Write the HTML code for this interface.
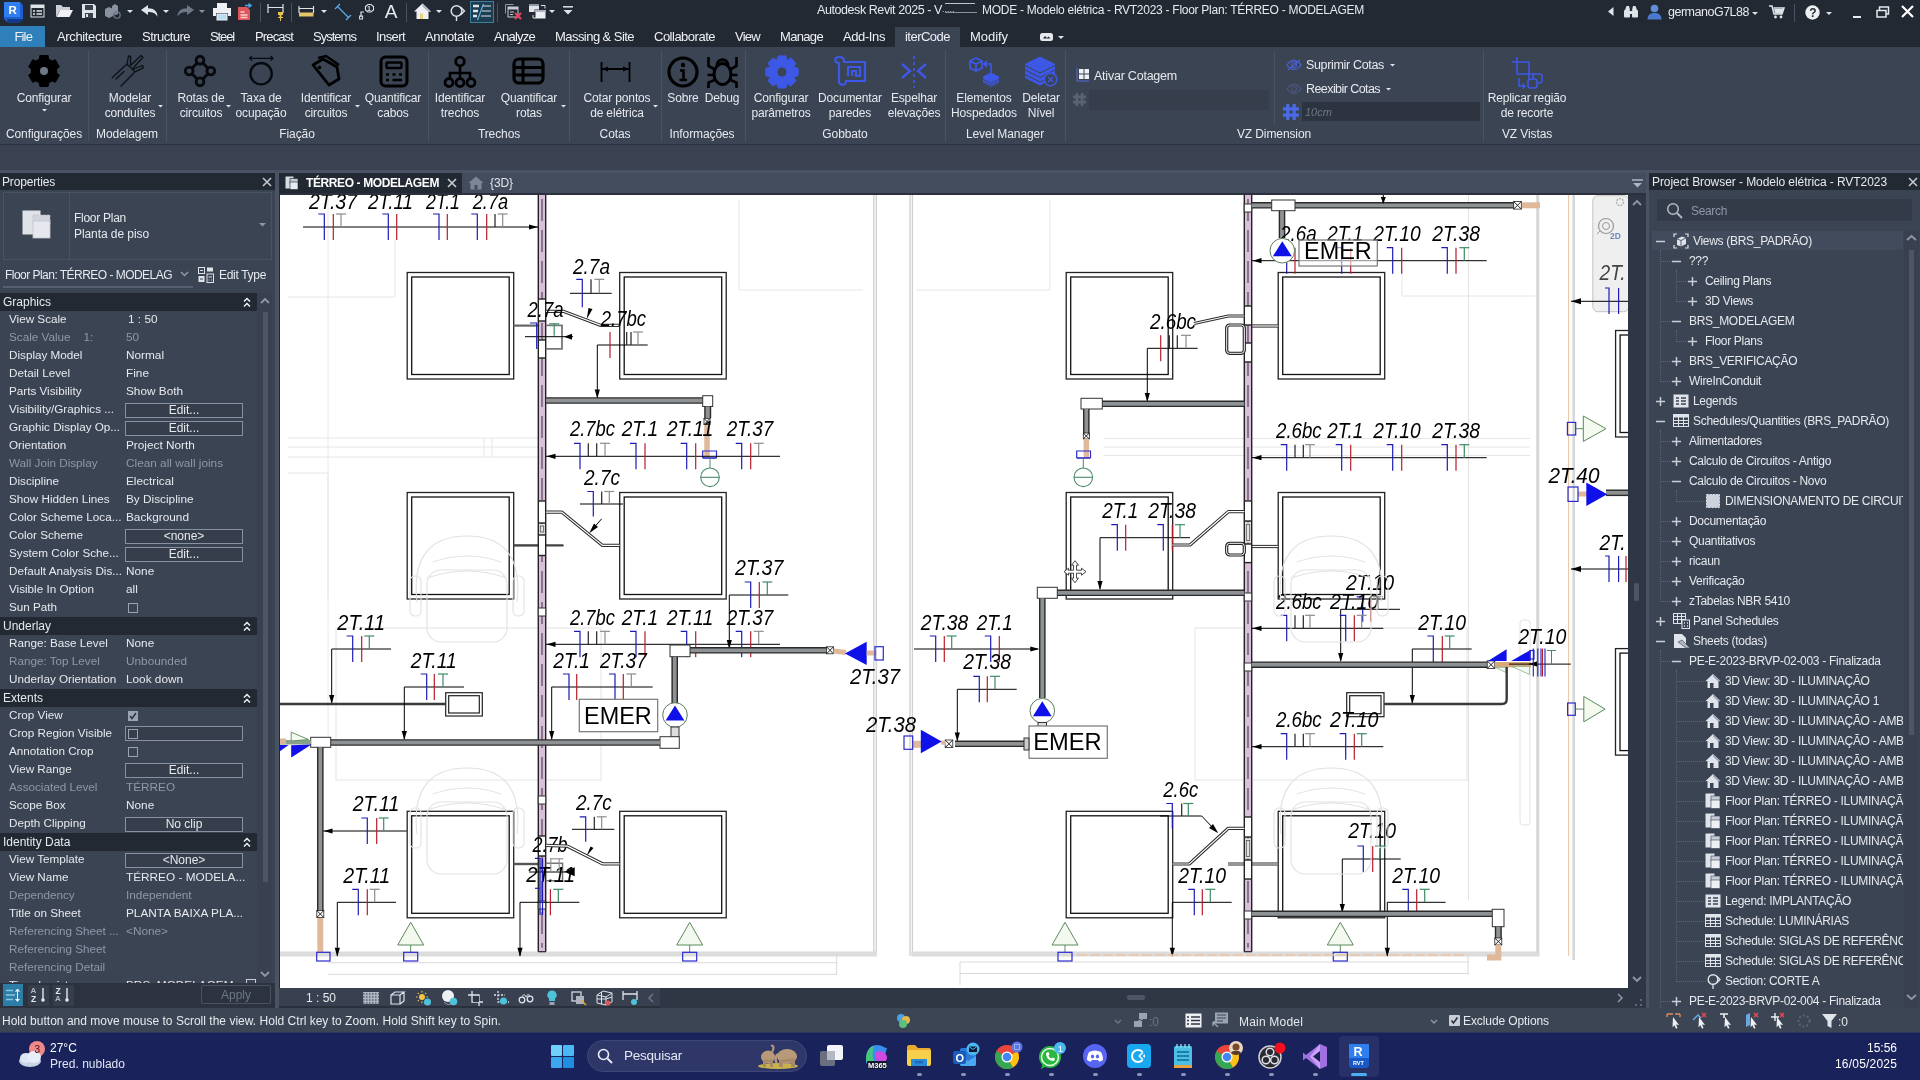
<!DOCTYPE html>
<html><head><meta charset="utf-8"><title>Autodesk Revit 2025</title>
<style>
html,body{margin:0;padding:0;background:#222933;}
body{width:1920px;height:1080px;overflow:hidden;position:relative;font-family:"Liberation Sans",sans-serif;}
#root{position:absolute;left:0;top:0;width:1920px;height:1080px;overflow:hidden;will-change:transform;}
#root div,#root svg{position:absolute;}
#root svg{overflow:visible;}
.t{font-family:"Liberation Sans",sans-serif;}
</style></head><body><div id="root">
<div style="left:0px;top:0px;width:1920px;height:47px;background:#222933;"></div>
<div style="left:0px;top:47px;width:1920px;height:98px;background:#3b4453;"></div>
<div style="left:0px;top:144px;width:1920px;height:1px;background:#2b323e;"></div>
<div style="left:0px;top:145px;width:1920px;height:26px;background:#3a4251;"></div>
<div style="left:0px;top:170px;width:1920px;height:3px;background:#4a5363;"></div>
<div style="left:0px;top:173px;width:275px;height:17px;background:#222933;"></div>
<div style="left:275px;top:173px;width:4px;height:835px;background:#4a5363;"></div>
<div style="left:279px;top:173px;width:1368px;height:22px;background:#434c5c;"></div>
<div style="left:279px;top:173px;width:183px;height:21px;background:#222933;"></div>
<div style="left:279px;top:193px;width:1368px;height:2px;background:#2a313d;"></div>
<div style="left:1646px;top:173px;width:3px;height:835px;background:#4a5363;"></div>
<div style="left:1649px;top:173px;width:271px;height:17px;background:#222933;"></div>
<div style="left:0px;top:190px;width:275px;height:818px;background:#3b4453;"></div>
<div style="left:1649px;top:190px;width:271px;height:818px;background:#3b4453;"></div>
<div style="left:280px;top:195px;width:1348px;height:793px;background:#ffffff;"></div>
<div style="left:1628px;top:195px;width:18px;height:793px;background:#2f3744;"></div>
<div style="left:279px;top:988px;width:1367px;height:20px;background:#2f3744;"></div>
<div style="left:279px;top:988px;width:381px;height:18px;background:#394150;"></div>
<div style="left:279px;top:1006px;width:381px;height:2px;background:#2a303b;"></div>
<div style="left:0px;top:1008px;width:1920px;height:24px;background:#3c4553;"></div>
<div style="left:0px;top:1032px;width:1920px;height:48px;background:#19225a;"></div>
<svg style="left:2px;top:0px;" width="22" height="24" viewBox="0 0 22 24"><path d="M2 2h16l3 3v14l-3 3H5l-3-3z" fill="#1d5fd0"/><path d="M2 2h16v15H2z" fill="#2f7ff0"/><path d="M5 19h14l2 0-3 4H6z" fill="#12398a"/><text x="6.5" y="14" font-family="Liberation Sans, sans-serif" font-weight="700" font-size="11.5" fill="#fff">R</text></svg>
<svg style="left:30px;top:4px;" width="15" height="14" viewBox="0 0 15 14"><rect x="1" y="1" width="13" height="12" fill="none" stroke="#dfe3ea" stroke-width="1"/><rect x="1" y="1" width="13" height="3" fill="#dfe3ea"/><path d="M3 7h2M3 10h2M6.5 7H12M6.5 10H12" stroke="#dfe3ea" stroke-width="1.4"/></svg>
<svg style="left:55px;top:4px;" width="19" height="14" viewBox="0 0 19 14"><path d="M1 13V1h5l2 2h7v3H5z" fill="#c9ced8"/><path d="M1.5 13L5 6h13l-3.5 7z" fill="#eef0f4"/></svg>
<svg style="left:82px;top:4px;" width="14" height="14" viewBox="0 0 14 14"><path d="M0 0h12l2 2v12H0z" fill="#dfe3ea"/><rect x="3" y="1" width="8" height="5" fill="#39414f"/><rect x="3" y="9" width="8" height="5" fill="#39414f"/><rect x="4" y="10" width="2" height="3" fill="#dfe3ea"/></svg>
<svg style="left:104px;top:3px;" width="19" height="16" viewBox="0 0 19 16"><path d="M1 6l4-2 4 2v7l-4 2-4-2z M8 3l3-2 3 2v8l-3 1-3-2z" fill="#8a92a0"/><circle cx="13" cy="12" r="3.2" fill="none" stroke="#6d7584" stroke-width="1.3"/></svg>
<svg style="left:127px;top:10px;" width="6" height="4" viewBox="0 0 6 4"><path d="M0 0H6L3 3Z" fill="#dfe3ea"/></svg>
<svg style="left:141px;top:5px;" width="17" height="12" viewBox="0 0 17 12"><path d="M0 5L7 0v3.2c6 0 9.5 3 9.5 8.5C14.5 8 11.5 7 7 7v3z" fill="#dfe3ea"/></svg>
<svg style="left:163px;top:10px;" width="6" height="4" viewBox="0 0 6 4"><path d="M0 0H6L3 3Z" fill="#dfe3ea"/></svg>
<svg style="left:177px;top:5px;" width="17" height="12" viewBox="0 0 17 12"><path d="M17 5L10 0v3.2C4 3.200.5 6.200.5 11.7 2.500 8 5.500 7 10 7v3z" fill="#6f7786"/></svg>
<svg style="left:199px;top:10px;" width="6" height="4" viewBox="0 0 6 4"><path d="M0 0H6L3 3Z" fill="#8a92a0"/></svg>
<svg style="left:213px;top:3px;" width="18" height="17" viewBox="0 0 18 17"><rect x="4" y="0" width="10" height="5" fill="#eef0f4"/><path d="M0 5h18v8h-3v-3H3v3H0z" fill="#eef0f4"/><rect x="4" y="11" width="10" height="6" fill="#bcdcf4" stroke="#eef0f4" stroke-width="1"/></svg>
<svg style="left:237px;top:3px;" width="17" height="17" viewBox="0 0 17 17"><path d="M1 4h9l3 3v10H1z" fill="#e0575b"/><path d="M3.500 9h4M3.500 12h7M3.500 14.500h7" stroke="#f8d0d0" stroke-width="1.3"/><path d="M8 2.500h6m-2.500-2l2.500 2-2.500 2" stroke="#4aa8ee" stroke-width="1.500" fill="none"/></svg>
<div style="left:260px;top:3px;width:1px;height:19px;background:#4a5261;"></div>
<svg style="left:267px;top:3px;" width="18" height="18" viewBox="0 0 18 18"><path d="M1 1v9M16 1v9M1 4.500h15" stroke="#dfe3ea" stroke-width="1.2" fill="none"/><path d="M11 9h5v3h-1.500v2h1.500v1h-5v-1h1.500v-2H11z" fill="#e6c24e"/><path d="M13.500 15v3" stroke="#e6c24e"/></svg>
<div style="left:291px;top:3px;width:1px;height:19px;background:#4a5261;"></div>
<svg style="left:298px;top:6px;" width="17" height="11" viewBox="0 0 17 11"><path d="M1 0v7M15.500 0v7M1 2.500h14.500" stroke="#dfe3ea" stroke-width="1.200" fill="none"/><rect x="1" y="6.500" width="14.500" height="4" fill="#e6c66a"/></svg>
<svg style="left:321px;top:10px;" width="6" height="4" viewBox="0 0 6 4"><path d="M0 0H6L3 3Z" fill="#dfe3ea"/></svg>
<svg style="left:334px;top:3px;" width="18" height="18" viewBox="0 0 18 18"><path d="M3 3l12 12M1 6l5-5M12 17l5-5" stroke="#5aa9e6" stroke-width="1.300" fill="none"/></svg>
<svg style="left:359px;top:4px;" width="15" height="15" viewBox="0 0 15 15"><path d="M2 13V8h3" stroke="#dfe3ea" fill="none" stroke-width="1.200"/><rect x="0.600" y="12" width="3" height="3" fill="none" stroke="#dfe3ea"/><path d="M6.500 2.500l2.500-2h3l2.500 2v3.500l-2.500 2h-3l-2.500-2z" fill="none" stroke="#dfe3ea" stroke-width="1.100"/><text x="8.300" y="7.300" font-size="6.500" font-family="Liberation Sans, sans-serif" fill="#dfe3ea" font-weight="700">1</text></svg>
<div class="t" style="top:3.5px;line-height:16px;font-size:19px;color:#e8ebf0;white-space:nowrap;left:391px;transform:translateX(-50%);">A</div>
<div style="left:406px;top:3px;width:1px;height:19px;background:#4a5261;"></div>
<svg style="left:414px;top:3px;" width="17" height="16" viewBox="0 0 17 16"><path d="M0 8.500L8.500 0.500 17 8.500h-2.500V16h-12V8.500z" fill="#eef0f4"/><path d="M8.500 0.500L17 8.500h-3L8.500 3.500z" fill="#aeb4c0"/><rect x="6" y="10.500" width="3" height="5.500" fill="#e6d37a"/></svg>
<svg style="left:436px;top:10px;" width="6" height="4" viewBox="0 0 6 4"><path d="M0 0H6L3 3Z" fill="#dfe3ea"/></svg>
<svg style="left:450px;top:4px;" width="15" height="17" viewBox="0 0 15 17"><circle cx="6.500" cy="7" r="5.300" fill="none" stroke="#dfe3ea" stroke-width="1.500"/><path d="M10.500 3l4 4-4 4M6.500 12.500V17" fill="none" stroke="#dfe3ea" stroke-width="1.400"/></svg>
<div style="left:470px;top:1px;width:24px;height:22px;background:#1d3d50;border:1px solid #3d7f9c;box-sizing:border-box;"></div>
<svg style="left:473px;top:4px;" width="18" height="16" viewBox="0 0 18 16"><path d="M0 2h6M0 7h5M0 12h4" stroke="#dfe3ea" stroke-width="2.600"/><path d="M10 2h8M9 7h9M8 12h10" stroke="#dfe3ea" stroke-width="1"/><path d="M10.500 0L4.500 16" stroke="#6cb6e6" stroke-width="1.200"/></svg>
<div style="left:497px;top:3px;width:1px;height:19px;background:#4a5261;"></div>
<svg style="left:505px;top:4px;" width="17" height="16" viewBox="0 0 17 16"><path d="M0.500 0.500h8M0.500 0.500v9" stroke="#8f97a6" fill="none"/><rect x="3" y="3" width="10" height="10" fill="none" stroke="#c5cad4"/><rect x="3" y="3" width="10" height="2.500" fill="#c5cad4"/><path d="M5 8h4M5 10.500h3" stroke="#c5cad4"/><path d="M10 9l6 6M16 9l-6 6" stroke="#e8475a" stroke-width="2"/></svg>
<svg style="left:529px;top:3px;" width="18" height="17" viewBox="0 0 18 17"><rect x="0" y="1" width="10" height="8" fill="#dfe3ea"/><rect x="0" y="1" width="10" height="2" fill="#8f97a6"/><rect x="6" y="7" width="11" height="9" fill="#eef0f4" stroke="#222933"/><rect x="6" y="7" width="11" height="2" fill="#aeb4c0"/><path d="M12 2.500h4v3M4 12v3h3" stroke="#dfe3ea" fill="none"/></svg>
<svg style="left:549px;top:10px;" width="6" height="4" viewBox="0 0 6 4"><path d="M0 0H6L3 3Z" fill="#dfe3ea"/></svg>
<svg style="left:563px;top:6px;" width="10" height="9" viewBox="0 0 10 9"><path d="M0 0.800h10" stroke="#dfe3ea" stroke-width="1.500"/><path d="M0.500 4h9L5 8.500z" fill="#dfe3ea"/></svg>
<div class="t" style="top:2.0px;line-height:16px;font-size:12.5px;color:#e6e9ee;white-space:nowrap;left:817px;letter-spacing:-0.426px;">Autodesk Revit 2025 - V</div>
<div class="t" style="top:1.0px;line-height:16px;font-size:9px;color:#c0c6d0;white-space:nowrap;left:942px;">.....</div>
<div style="left:945px;top:3px;width:30px;height:1px;background:#c0c6d0;"></div>
<div style="left:945px;top:12px;width:32px;height:1px;background:#8a92a0;"></div>
<div class="t" style="top:2.0px;line-height:16px;font-size:12px;color:#e6e9ee;white-space:nowrap;left:982px;letter-spacing:-0.272px;">MODE - Modelo elétrica - RVT2023 - Floor Plan: TÉRREO - MODELAGEM</div>
<svg style="left:1608px;top:7px;" width="6" height="9" viewBox="0 0 6 9"><path d="M5.500 0v9L0 4.500z" fill="#dfe3ea"/></svg>
<svg style="left:1624px;top:5px;" width="14" height="13" viewBox="0 0 14 13"><path d="M1 5l1.500-4h2.500l1 4zM8 5l1-4h2.500L13 5z" fill="#dfe3ea"/><rect x="0" y="5" width="6" height="7.500" rx="1" fill="#dfe3ea"/><rect x="8" y="5" width="6" height="7.500" rx="1" fill="#dfe3ea"/><rect x="6" y="6" width="2" height="3" fill="#dfe3ea"/></svg>
<svg style="left:1647px;top:4px;" width="15" height="16" viewBox="0 0 15 16"><circle cx="7.500" cy="4.500" r="3.800" fill="#5f8fd8"/><path d="M0.500 15.500c0-5 3-6.500 7-6.500s7 1.500 7 6.500z" fill="#4a7acb"/></svg>
<div class="t" style="top:4.0px;line-height:16px;font-size:12.5px;color:#e6e9ee;white-space:nowrap;left:1668px;letter-spacing:-0.490px;">germanoG7L88</div>
<svg style="left:1752px;top:11.5px;" width="6" height="4" viewBox="0 0 6 4"><path d="M0 0H6L3 3Z" fill="#dfe3ea"/></svg>
<svg style="left:1769px;top:5px;" width="16" height="14" viewBox="0 0 16 14"><path d="M0 1h3l2 8h8l2-6H4.500" fill="none" stroke="#dfe3ea" stroke-width="1.500"/><path d="M5 4h9.500l-1.600 4.600H6z" fill="#dfe3ea"/><circle cx="6.500" cy="12" r="1.400" fill="#dfe3ea"/><circle cx="12" cy="12" r="1.400" fill="#dfe3ea"/></svg>
<div style="left:1794px;top:4px;width:1px;height:18px;background:#4a5261;"></div>
<svg style="left:1805px;top:5px;" width="15" height="15" viewBox="0 0 15 15"><circle cx="7.500" cy="7.500" r="7.200" fill="#eef0f4"/><text x="4.300" y="11.800" font-family="Liberation Sans, sans-serif" font-weight="700" font-size="12" fill="#222933">?</text></svg>
<svg style="left:1826px;top:11.5px;" width="6" height="4" viewBox="0 0 6 4"><path d="M0 0H6L3 3Z" fill="#dfe3ea"/></svg>
<div style="left:1853px;top:16px;width:8px;height:2px;background:#e6e9ee;"></div>
<svg style="left:1876px;top:6px;" width="14" height="12" viewBox="0 0 14 12"><rect x="3.500" y="1" width="9" height="7" fill="none" stroke="#e6e9ee" stroke-width="1.500"/><rect x="1" y="4.500" width="9" height="6.500" fill="#222933" stroke="#e6e9ee" stroke-width="1.500"/></svg>
<svg style="left:1901px;top:5px;" width="13" height="13" viewBox="0 0 13 13"><path d="M1 1l11 11M12 1L1 12" stroke="#ffffff" stroke-width="2.200"/></svg>
<div style="left:0px;top:26px;width:45px;height:21px;background:#2e7fba;"></div>
<div style="left:895px;top:27px;width:65px;height:20px;background:#3b4453;"></div>
<div class="t" style="top:28.5px;line-height:16px;font-size:13px;color:#eef0f4;white-space:nowrap;left:14.5px;letter-spacing:-0.863px;">File</div>
<div class="t" style="top:28.5px;line-height:16px;font-size:13px;color:#eef0f4;white-space:nowrap;left:57px;letter-spacing:-0.365px;">Architecture</div>
<div class="t" style="top:28.5px;line-height:16px;font-size:13px;color:#eef0f4;white-space:nowrap;left:142px;letter-spacing:-0.528px;">Structure</div>
<div class="t" style="top:28.5px;line-height:16px;font-size:13px;color:#eef0f4;white-space:nowrap;left:210px;letter-spacing:-1.128px;">Steel</div>
<div class="t" style="top:28.5px;line-height:16px;font-size:13px;color:#eef0f4;white-space:nowrap;left:255px;letter-spacing:-0.868px;">Precast</div>
<div class="t" style="top:28.5px;line-height:16px;font-size:13px;color:#eef0f4;white-space:nowrap;left:313px;letter-spacing:-0.978px;">Systems</div>
<div class="t" style="top:28.5px;line-height:16px;font-size:13px;color:#eef0f4;white-space:nowrap;left:376px;letter-spacing:-0.586px;">Insert</div>
<div class="t" style="top:28.5px;line-height:16px;font-size:13px;color:#eef0f4;white-space:nowrap;left:425px;letter-spacing:-0.381px;">Annotate</div>
<div class="t" style="top:28.5px;line-height:16px;font-size:13px;color:#eef0f4;white-space:nowrap;left:494px;letter-spacing:-0.750px;">Analyze</div>
<div class="t" style="top:28.5px;line-height:16px;font-size:13px;color:#eef0f4;white-space:nowrap;left:555px;letter-spacing:-0.550px;">Massing &amp; Site</div>
<div class="t" style="top:28.5px;line-height:16px;font-size:13px;color:#eef0f4;white-space:nowrap;left:654px;letter-spacing:-0.500px;">Collaborate</div>
<div class="t" style="top:28.5px;line-height:16px;font-size:13px;color:#eef0f4;white-space:nowrap;left:735px;letter-spacing:-0.738px;">View</div>
<div class="t" style="top:28.5px;line-height:16px;font-size:13px;color:#eef0f4;white-space:nowrap;left:780px;letter-spacing:-0.664px;">Manage</div>
<div class="t" style="top:28.5px;line-height:16px;font-size:13px;color:#eef0f4;white-space:nowrap;left:843px;letter-spacing:-0.402px;">Add-Ins</div>
<div class="t" style="top:28.5px;line-height:16px;font-size:13px;color:#eef0f4;white-space:nowrap;left:905px;letter-spacing:-0.518px;">iterCode</div>
<div class="t" style="top:28.5px;line-height:16px;font-size:13px;color:#eef0f4;white-space:nowrap;left:970px;letter-spacing:-0.049px;">Modify</div>
<svg style="left:1040px;top:33px;" width="13" height="8" viewBox="0 0 13 8"><rect x="0" y="0" width="13" height="8" rx="2.500" fill="#e6e9ee"/><path d="M3 5.500l2-2.500 2 2 1.500-1.500 2 2z" fill="#222933"/></svg>
<svg style="left:1058px;top:35.5px;" width="6" height="4" viewBox="0 0 6 4"><path d="M0 0H6L3 3Z" fill="#dfe3ea"/></svg>
<div style="left:88px;top:50px;width:1px;height:92px;background:#4a5363;"></div>
<div style="left:166px;top:50px;width:1px;height:92px;background:#4a5363;"></div>
<div style="left:428px;top:50px;width:1px;height:92px;background:#4a5363;"></div>
<div style="left:569px;top:50px;width:1px;height:92px;background:#4a5363;"></div>
<div style="left:661px;top:50px;width:1px;height:92px;background:#4a5363;"></div>
<div style="left:745px;top:50px;width:1px;height:92px;background:#4a5363;"></div>
<div style="left:945px;top:50px;width:1px;height:92px;background:#4a5363;"></div>
<div style="left:1065px;top:50px;width:1px;height:92px;background:#4a5363;"></div>
<div style="left:1483px;top:50px;width:1px;height:92px;background:#4a5363;"></div>
<div style="left:1274px;top:52px;width:1px;height:73px;background:#4a5363;"></div>
<div class="t" style="top:90.0px;line-height:16px;font-size:12px;color:#e6e9ee;white-space:nowrap;letter-spacing:-0.15px;left:44px;transform:translateX(-50%);">Configurar</div>
<svg style="left:41.5px;top:109px;" width="5.0" height="3.5" viewBox="0 0 5.0 3.5"><path d="M0 0H5.0L2.5 2.5Z" fill="#dfe3ea"/></svg>
<div class="t" style="top:90.0px;line-height:16px;font-size:12px;color:#e6e9ee;white-space:nowrap;letter-spacing:-0.15px;left:130px;transform:translateX(-50%);">Modelar</div>
<div class="t" style="top:105.0px;line-height:16px;font-size:12px;color:#e6e9ee;white-space:nowrap;letter-spacing:-0.15px;left:130px;transform:translateX(-50%);">conduítes</div>
<svg style="left:157.5px;top:104.5px;" width="5.0" height="3.5" viewBox="0 0 5.0 3.5"><path d="M0 0H5.0L2.5 2.5Z" fill="#dfe3ea"/></svg>
<div class="t" style="top:90.0px;line-height:16px;font-size:12px;color:#e6e9ee;white-space:nowrap;letter-spacing:-0.15px;left:201px;transform:translateX(-50%);">Rotas de</div>
<div class="t" style="top:105.0px;line-height:16px;font-size:12px;color:#e6e9ee;white-space:nowrap;letter-spacing:-0.15px;left:201px;transform:translateX(-50%);">circuitos</div>
<svg style="left:225.5px;top:104.5px;" width="5.0" height="3.5" viewBox="0 0 5.0 3.5"><path d="M0 0H5.0L2.5 2.5Z" fill="#dfe3ea"/></svg>
<div class="t" style="top:90.0px;line-height:16px;font-size:12px;color:#e6e9ee;white-space:nowrap;letter-spacing:-0.15px;left:261px;transform:translateX(-50%);">Taxa de</div>
<div class="t" style="top:105.0px;line-height:16px;font-size:12px;color:#e6e9ee;white-space:nowrap;letter-spacing:-0.15px;left:261px;transform:translateX(-50%);">ocupação</div>
<div class="t" style="top:90.0px;line-height:16px;font-size:12px;color:#e6e9ee;white-space:nowrap;letter-spacing:-0.15px;left:326px;transform:translateX(-50%);">Identificar</div>
<div class="t" style="top:105.0px;line-height:16px;font-size:12px;color:#e6e9ee;white-space:nowrap;letter-spacing:-0.15px;left:326px;transform:translateX(-50%);">circuitos</div>
<svg style="left:354.5px;top:104.5px;" width="5.0" height="3.5" viewBox="0 0 5.0 3.5"><path d="M0 0H5.0L2.5 2.5Z" fill="#dfe3ea"/></svg>
<div class="t" style="top:90.0px;line-height:16px;font-size:12px;color:#e6e9ee;white-space:nowrap;letter-spacing:-0.15px;left:393px;transform:translateX(-50%);">Quantificar</div>
<div class="t" style="top:105.0px;line-height:16px;font-size:12px;color:#e6e9ee;white-space:nowrap;letter-spacing:-0.15px;left:393px;transform:translateX(-50%);">cabos</div>
<div class="t" style="top:90.0px;line-height:16px;font-size:12px;color:#e6e9ee;white-space:nowrap;letter-spacing:-0.15px;left:460px;transform:translateX(-50%);">Identificar</div>
<div class="t" style="top:105.0px;line-height:16px;font-size:12px;color:#e6e9ee;white-space:nowrap;letter-spacing:-0.15px;left:460px;transform:translateX(-50%);">trechos</div>
<div class="t" style="top:90.0px;line-height:16px;font-size:12px;color:#e6e9ee;white-space:nowrap;letter-spacing:-0.15px;left:529px;transform:translateX(-50%);">Quantificar</div>
<div class="t" style="top:105.0px;line-height:16px;font-size:12px;color:#e6e9ee;white-space:nowrap;letter-spacing:-0.15px;left:529px;transform:translateX(-50%);">rotas</div>
<svg style="left:560.5px;top:104.5px;" width="5.0" height="3.5" viewBox="0 0 5.0 3.5"><path d="M0 0H5.0L2.5 2.5Z" fill="#dfe3ea"/></svg>
<div class="t" style="top:90.0px;line-height:16px;font-size:12px;color:#e6e9ee;white-space:nowrap;letter-spacing:-0.15px;left:617px;transform:translateX(-50%);">Cotar pontos</div>
<div class="t" style="top:105.0px;line-height:16px;font-size:12px;color:#e6e9ee;white-space:nowrap;letter-spacing:-0.15px;left:617px;transform:translateX(-50%);">de elétrica</div>
<svg style="left:652.5px;top:104.5px;" width="5.0" height="3.5" viewBox="0 0 5.0 3.5"><path d="M0 0H5.0L2.5 2.5Z" fill="#dfe3ea"/></svg>
<div class="t" style="top:90.0px;line-height:16px;font-size:12px;color:#e6e9ee;white-space:nowrap;letter-spacing:-0.15px;left:683px;transform:translateX(-50%);">Sobre</div>
<div class="t" style="top:90.0px;line-height:16px;font-size:12px;color:#e6e9ee;white-space:nowrap;letter-spacing:-0.15px;left:722px;transform:translateX(-50%);">Debug</div>
<div class="t" style="top:90.0px;line-height:16px;font-size:12px;color:#e6e9ee;white-space:nowrap;letter-spacing:-0.15px;left:781px;transform:translateX(-50%);">Configurar</div>
<div class="t" style="top:105.0px;line-height:16px;font-size:12px;color:#e6e9ee;white-space:nowrap;letter-spacing:-0.15px;left:781px;transform:translateX(-50%);">parâmetros</div>
<div class="t" style="top:90.0px;line-height:16px;font-size:12px;color:#e6e9ee;white-space:nowrap;letter-spacing:-0.15px;left:850px;transform:translateX(-50%);">Documentar</div>
<div class="t" style="top:105.0px;line-height:16px;font-size:12px;color:#e6e9ee;white-space:nowrap;letter-spacing:-0.15px;left:850px;transform:translateX(-50%);">paredes</div>
<div class="t" style="top:90.0px;line-height:16px;font-size:12px;color:#e6e9ee;white-space:nowrap;letter-spacing:-0.15px;left:914px;transform:translateX(-50%);">Espelhar</div>
<div class="t" style="top:105.0px;line-height:16px;font-size:12px;color:#e6e9ee;white-space:nowrap;letter-spacing:-0.15px;left:914px;transform:translateX(-50%);">elevações</div>
<div class="t" style="top:90.0px;line-height:16px;font-size:12px;color:#e6e9ee;white-space:nowrap;letter-spacing:-0.15px;left:984px;transform:translateX(-50%);">Elementos</div>
<div class="t" style="top:105.0px;line-height:16px;font-size:12px;color:#e6e9ee;white-space:nowrap;letter-spacing:-0.15px;left:984px;transform:translateX(-50%);">Hospedados</div>
<div class="t" style="top:90.0px;line-height:16px;font-size:12px;color:#e6e9ee;white-space:nowrap;letter-spacing:-0.15px;left:1041px;transform:translateX(-50%);">Deletar</div>
<div class="t" style="top:105.0px;line-height:16px;font-size:12px;color:#e6e9ee;white-space:nowrap;letter-spacing:-0.15px;left:1041px;transform:translateX(-50%);">Nível</div>
<div class="t" style="top:90.0px;line-height:16px;font-size:12px;color:#e6e9ee;white-space:nowrap;letter-spacing:-0.15px;left:1527px;transform:translateX(-50%);">Replicar região</div>
<div class="t" style="top:105.0px;line-height:16px;font-size:12px;color:#e6e9ee;white-space:nowrap;letter-spacing:-0.15px;left:1527px;transform:translateX(-50%);">de recorte</div>
<div class="t" style="top:126.0px;line-height:16px;font-size:12px;color:#e6e9ee;white-space:nowrap;letter-spacing:-0.1px;left:44px;transform:translateX(-50%);">Configurações</div>
<div class="t" style="top:126.0px;line-height:16px;font-size:12px;color:#e6e9ee;white-space:nowrap;letter-spacing:-0.1px;left:127px;transform:translateX(-50%);">Modelagem</div>
<div class="t" style="top:126.0px;line-height:16px;font-size:12px;color:#e6e9ee;white-space:nowrap;letter-spacing:-0.1px;left:297px;transform:translateX(-50%);">Fiação</div>
<div class="t" style="top:126.0px;line-height:16px;font-size:12px;color:#e6e9ee;white-space:nowrap;letter-spacing:-0.1px;left:499px;transform:translateX(-50%);">Trechos</div>
<div class="t" style="top:126.0px;line-height:16px;font-size:12px;color:#e6e9ee;white-space:nowrap;letter-spacing:-0.1px;left:615px;transform:translateX(-50%);">Cotas</div>
<div class="t" style="top:126.0px;line-height:16px;font-size:12px;color:#e6e9ee;white-space:nowrap;letter-spacing:-0.1px;left:702px;transform:translateX(-50%);">Informações</div>
<div class="t" style="top:126.0px;line-height:16px;font-size:12px;color:#e6e9ee;white-space:nowrap;letter-spacing:-0.1px;left:845px;transform:translateX(-50%);">Gobbato</div>
<div class="t" style="top:126.0px;line-height:16px;font-size:12px;color:#e6e9ee;white-space:nowrap;letter-spacing:-0.1px;left:1005px;transform:translateX(-50%);">Level Manager</div>
<div class="t" style="top:126.0px;line-height:16px;font-size:12px;color:#e6e9ee;white-space:nowrap;letter-spacing:-0.1px;left:1274px;transform:translateX(-50%);">VZ Dimension</div>
<div class="t" style="top:126.0px;line-height:16px;font-size:12px;color:#e6e9ee;white-space:nowrap;letter-spacing:-0.1px;left:1527px;transform:translateX(-50%);">VZ Vistas</div>
<svg style="left:26px;top:53px;" width="36" height="36" viewBox="0 0 36 36"><polygon points="13.9,2.5 22.1,2.5 22.5,6.0 26.1,8.1 29.3,6.7 33.4,13.8 30.6,15.9 30.6,20.1 33.4,22.2 29.3,29.3 26.1,27.9 22.5,30.0 22.1,33.5 13.9,33.5 13.5,30.0 9.9,27.9 6.7,29.3 2.6,22.2 5.4,20.1 5.4,15.9 2.6,13.8 6.7,6.7 9.9,8.1 13.5,6.0" fill="#000000" stroke="#000000" stroke-width="1" stroke-linejoin="round"/><circle cx="18" cy="18" r="4.0" fill="#6f7785"/></svg>
<svg style="left:111px;top:54px;" width="36" height="36" viewBox="0 0 36 36"><g fill="none" stroke="#0c1016" stroke-width="1.300" stroke-linecap="round" stroke-linejoin="round"><path d="M1.200 23.800L13.400 12.300M5 25L13 17.500M10 32L22.200 19.700M13.400 12.300l3-1.800 7.500 7.200-1.700 2"/><path d="M16 10.500L17.500 2l2.200 0.300L19.500 11M19.500 11.500L30 1.500l2 2L22 14M22.500 15l9-3.500 0.800 2.300-8.300 4"/></g></svg>
<svg style="left:183px;top:54px;" width="34" height="34" viewBox="0 0 34 34"><path d="M17 6.200L27.800 17 17 27.800 6.200 17z" fill="none" stroke="#06090e" stroke-width="2.900"/><circle cx="17" cy="6.2" r="3.900" fill="#3b4453" stroke="#06090e" stroke-width="2.900"/><circle cx="27.8" cy="17" r="3.900" fill="#3b4453" stroke="#06090e" stroke-width="2.900"/><circle cx="17" cy="27.8" r="3.900" fill="#3b4453" stroke="#06090e" stroke-width="2.900"/><circle cx="6.2" cy="17" r="3.900" fill="#3b4453" stroke="#06090e" stroke-width="2.900"/></svg>
<svg style="left:247px;top:55px;" width="30" height="34" viewBox="0 0 30 34"><circle cx="14.100" cy="18.700" r="10.700" fill="none" stroke="#06090e" stroke-width="2.300"/><path d="M2.500 3.300h23.500M5 1L2.500 3.300 5 5.600M23.500 1L26 3.300 23.500 5.600" fill="none" stroke="#06090e" stroke-width="1.200"/></svg>
<svg style="left:309px;top:55px;" width="34" height="34" viewBox="0 0 34 34"><path d="M4 10l10-6 14 8 2 12-10 6z" fill="none" stroke="#000" stroke-width="2.800" stroke-linejoin="round"/><path d="M9 3l8-2 13 9" fill="none" stroke="#000" stroke-width="2.500"/><circle cx="10.500" cy="12.500" r="1.800" fill="#000"/></svg>
<svg style="left:379px;top:55px;" width="30" height="34" viewBox="0 0 30 34"><rect x="2" y="2" width="26" height="29" rx="4.500" fill="none" stroke="#000" stroke-width="3"/><rect x="7.500" y="7.500" width="15" height="5.500" rx="1" fill="none" stroke="#000" stroke-width="2.400"/><path d="M7 19.500h3M13.500 19.500h3M20 19.500h3M7 25h3M13.500 25h9.500" stroke="#000" stroke-width="2.600"/></svg>
<svg style="left:443px;top:55px;" width="34" height="34" viewBox="0 0 34 34"><path d="M17 10v8M7 24v-6h20v6M17 18v6" fill="none" stroke="#000" stroke-width="2.600"/><circle cx="17" cy="6.500" r="4.300" fill="none" stroke="#000" stroke-width="2.800"/><circle cx="6" cy="27.500" r="4" fill="none" stroke="#000" stroke-width="2.800"/><circle cx="17" cy="27.500" r="4" fill="none" stroke="#000" stroke-width="2.800"/><circle cx="28" cy="27.500" r="4" fill="none" stroke="#000" stroke-width="2.800"/></svg>
<svg style="left:512px;top:57px;" width="34" height="30" viewBox="0 0 34 30"><rect x="2" y="2" width="29" height="24" rx="5" fill="none" stroke="#000" stroke-width="3.200"/><path d="M2 10.500h29M2 18h29M11 2v24" stroke="#000" stroke-width="3"/></svg>
<svg style="left:600px;top:62px;" width="32" height="22" viewBox="0 0 32 22"><path d="M1.500 0v20M29.500 0v20M1.500 7h28" stroke="#000" stroke-width="1.800" fill="none"/><path d="M2 7l6-2.500v5zM29 7l-6-2.500v5z" fill="#000"/></svg>
<svg style="left:667px;top:55px;" width="32" height="34" viewBox="0 0 32 34"><circle cx="16" cy="17" r="14" fill="none" stroke="#000" stroke-width="3.200"/><circle cx="16" cy="10" r="2.200" fill="#000"/><path d="M13 15.500h3.500V25M12.500 25h7.500" stroke="#000" stroke-width="2.600" fill="none"/></svg>
<svg style="left:706px;top:55px;" width="33" height="34" viewBox="0 0 33 34"><ellipse cx="16.500" cy="19" rx="8.500" ry="10.500" fill="none" stroke="#000" stroke-width="3"/><path d="M11 10c0-7 11-7 11 0" fill="none" stroke="#000" stroke-width="2.800"/><path d="M8 14L2.500 11V2M25 14l5.500-3V2M8 20H1.500M25 20h6.500M8.500 25L2.500 27.500V33M24.500 25l6 2.500V33" fill="none" stroke="#000" stroke-width="2.600"/></svg>
<svg style="left:764px;top:54px;" width="36" height="36" viewBox="0 0 36 36"><polygon points="34.1,14.2 34.1,21.8 29.2,22.8 29.3,22.6 32.0,26.7 26.7,32.0 22.6,29.3 22.8,29.2 21.8,34.1 14.2,34.1 13.2,29.2 13.4,29.3 9.3,32.0 4.0,26.7 6.7,22.6 6.8,22.8 1.9,21.8 1.9,14.2 6.8,13.2 6.7,13.4 4.0,9.3 9.3,4.0 13.4,6.7 13.2,6.8 14.2,1.9 21.8,1.9 22.8,6.8 22.6,6.7 26.7,4.0 32.0,9.3 29.3,13.4 29.2,13.2" fill="#3d58e6" stroke="#3d58e6" stroke-width="1" stroke-linejoin="round"/><circle cx="18" cy="18" r="4.455" fill="#3b4453"/></svg>
<svg style="left:833px;top:55px;" width="34" height="34" viewBox="0 0 34 34"><path d="M6 2c-5 0-5 6 0 6h0v18c0 5 7 5 7 0h19V7H11V6c0-4-3-4-5-4z" fill="none" stroke="#3d58e6" stroke-width="2.200"/><path d="M15 21V12h12v9h-4v-5h-4v5" fill="none" stroke="#3d58e6" stroke-width="2.200"/></svg>
<svg style="left:899px;top:55px;" width="30" height="34" viewBox="0 0 30 34"><path d="M15 1v32" stroke="#3d58e6" stroke-width="1.800" stroke-dasharray="3 3"/><path d="M3 9l8 7-8 7M27 9l-8 7 8 7" fill="none" stroke="#3d58e6" stroke-width="2.400"/></svg>
<svg style="left:967px;top:55px;" width="36" height="36" viewBox="0 0 36 36"><path d="M3 6l6-3 6 3v7l-6 3-6-3zM3 6l6 3 6-3M9 9v7" fill="none" stroke="#3d58e6" stroke-width="1.800"/><path d="M17 9h7v10M20 6l-3 3 3 3" fill="none" stroke="#3d58e6" stroke-width="1.600"/><path d="M16 21.500l8-4 8 4v6.500l-8 4-8-4z" fill="#3d58e6"/><path d="M16 24.300l8 4 8-4M16 27l8 4 8-4" fill="none" stroke="#3b4453" stroke-width="0.900"/></svg>
<svg style="left:1023px;top:55px;" width="36" height="34" viewBox="0 0 36 34"><path d="M2 9L17 1.500l15 7.500v14l-15 7.500L2 23z" fill="#3d58e6"/><path d="M2 10.500l15 7.500 15-7.500M2 15l15 7.500 15-7.500M2 19.500l15 7.500 15-7.500" fill="none" stroke="#3b4453" stroke-width="1"/><circle cx="27.500" cy="24.500" r="6.300" fill="#3b4453" stroke="#3d58e6" stroke-width="1.600"/><path d="M25 22l5 5m0-5l-5 5" stroke="#3d58e6" stroke-width="1.500"/></svg>
<svg style="left:1510px;top:56px;" width="34" height="34" viewBox="0 0 34 34"><path d="M7 1v17h17M2 6h17v17" fill="none" stroke="#3d58e6" stroke-width="1.600"/><path d="M9 22v8h6m-2.500-2.500L15 30l-2.500 2.500" fill="none" stroke="#3d58e6" stroke-width="1.500"/><rect x="23" y="18" width="9" height="9" rx="2.500" fill="none" stroke="#3d58e6" stroke-width="1.600"/><rect x="18" y="23" width="9" height="9" rx="2.500" fill="#3b4453" stroke="#3d58e6" stroke-width="1.600"/></svg>
<svg style="left:1076px;top:68px;" width="14" height="14" viewBox="0 0 14 14"><rect x="3" y="1" width="10" height="10" fill="#eef0f4"/><path d="M8 1v10M3 6h10" stroke="#3b4453"/><path d="M1 0v13h12" stroke="#5468d8" fill="none" stroke-width="1"/></svg>
<div class="t" style="top:67.5px;line-height:16px;font-size:12.5px;color:#e6e9ee;white-space:nowrap;left:1094px;letter-spacing:-0.225px;">Ativar Cotagem</div>
<svg style="left:1073px;top:93px;" width="13" height="13" viewBox="0 0 13 13"><path d="M3.9 0V13M9.1 0V13M0 3.9H13M0 9.1H13" stroke="#5a6372" stroke-width="2.6"/></svg>
<div style="left:1089px;top:90px;width:180px;height:20px;background:#363e4b;"></div>
<svg style="left:1286px;top:59px;" width="18" height="12" viewBox="0 0 18 12"><path d="M1 6c4-6 10-6 14 0-4 6-10 6-14 0z" fill="none" stroke="#4a5fd0" stroke-width="1.300"/><circle cx="8" cy="6" r="2.500" fill="none" stroke="#4a5fd0" stroke-width="1.200"/><path d="M2 11L14 1" stroke="#4a5fd0" stroke-width="1.400"/></svg>
<div class="t" style="top:56.5px;line-height:16px;font-size:12.5px;color:#e6e9ee;white-space:nowrap;left:1306px;letter-spacing:-0.334px;">Suprimir Cotas</div>
<svg style="left:1389.5px;top:63.5px;" width="5.0" height="3.5" viewBox="0 0 5.0 3.5"><path d="M0 0H5.0L2.5 2.5Z" fill="#dfe3ea"/></svg>
<svg style="left:1286px;top:83px;" width="18" height="12" viewBox="0 0 18 12"><path d="M1 6c4-6 10-6 14 0-4 6-10 6-14 0z" fill="none" stroke="#4a5580" stroke-width="1.300"/><circle cx="8" cy="6" r="2.500" fill="none" stroke="#4a5580" stroke-width="1.200"/></svg>
<div class="t" style="top:80.5px;line-height:16px;font-size:12.5px;color:#e6e9ee;white-space:nowrap;left:1306px;letter-spacing:-0.570px;">Reexibir Cotas</div>
<svg style="left:1385.5px;top:87.5px;" width="5.0" height="3.5" viewBox="0 0 5.0 3.5"><path d="M0 0H5.0L2.5 2.5Z" fill="#dfe3ea"/></svg>
<svg style="left:1283px;top:104px;" width="16" height="16" viewBox="0 0 16 16"><path d="M4.8 0V16M11.2 0V16M0 4.8H16M0 11.2H16" stroke="#4a6ae8" stroke-width="3.2"/></svg>
<div style="left:1302px;top:102px;width:178px;height:19px;background:#2d3440;"></div>
<div class="t" style="top:104.0px;line-height:16px;font-size:11px;color:#6d7686;white-space:nowrap;left:1305px;font-style:italic;">10cm</div>
<div class="t" style="top:173.5px;line-height:16px;font-size:12px;color:#e6e9ee;white-space:nowrap;left:2px;letter-spacing:-0.170px;">Properties</div>
<svg style="left:262px;top:177px;" width="10" height="10" viewBox="0 0 10 10"><path d="M1 1l8 8M9 1l-8 8" stroke="#c8cdd6" stroke-width="1.500"/></svg>
<div style="left:3px;top:192px;width:269px;height:68px;background:#3b4453;border:1px solid #4a5363;box-sizing:border-box;"></div>
<div style="left:69px;top:192px;width:1px;height:68px;background:#4a5363;"></div>
<svg style="left:22px;top:210px;" width="30" height="30" viewBox="0 0 30 30"><rect x="0.500" y="0.500" width="18" height="24" fill="#dfe2e8"/><rect x="11" y="5" width="17" height="9" fill="#d0d4dc" stroke="#b9bec8" stroke-dasharray="2 1.500" stroke-width="0.800"/><rect x="11" y="11" width="17" height="17" fill="#e6e8ee" stroke="#c2c7d0" stroke-width="0.800"/></svg>
<div class="t" style="top:209.5px;line-height:16px;font-size:12px;color:#e6e9ee;white-space:nowrap;left:74px;letter-spacing:-0.270px;">Floor Plan</div>
<div class="t" style="top:225.7px;line-height:16px;font-size:12px;color:#e6e9ee;white-space:nowrap;left:74px;letter-spacing:-0.076px;">Planta de piso</div>
<svg style="left:258.5px;top:222.5px;" width="7.0" height="4.5" viewBox="0 0 7.0 4.5"><path d="M0 0H7.0L3.5 3.5Z" fill="#8e98a8"/></svg>
<div class="t" style="top:266.5px;line-height:16px;font-size:12px;color:#e6e9ee;white-space:nowrap;left:5px;letter-spacing:-0.530px;">Floor Plan: TÉRREO - MODELAG</div>
<svg style="left:180px;top:271px;" width="9" height="6" viewBox="0 0 9 6"><path d="M1 1l3.500 3.500L8 1" fill="none" stroke="#8e98a8" stroke-width="1.500"/></svg>
<div style="left:3px;top:286px;width:190px;height:2px;background:#566072;"></div>
<svg style="left:198px;top:267px;" width="16" height="16" viewBox="0 0 16 16"><rect x="0.500" y="0.500" width="6" height="6" fill="none" stroke="#dfe3ea"/><rect x="9" y="0.500" width="6" height="4" fill="#dfe3ea"/><rect x="0.500" y="9" width="6" height="6" fill="#dfe3ea"/><rect x="9" y="7" width="6.500" height="8.500" fill="none" stroke="#dfe3ea"/><path d="M2 3.500h3M10.500 10h3.500M10.500 13h1M13 13h1" stroke="#dfe3ea"/><path d="M2 12h3" stroke="#3b4453"/></svg>
<div class="t" style="top:266.5px;line-height:16px;font-size:12px;color:#e6e9ee;white-space:nowrap;left:219px;letter-spacing:-0.312px;">Edit Type</div>
<div style="left:257px;top:293px;width:15px;height:692px;background:#394150;"></div>
<div style="left:263px;top:312px;width:5px;height:570px;background:#4d5666;"></div>
<svg style="left:260px;top:297px;" width="10" height="7" viewBox="0 0 10 7"><path d="M1 6l4-4 4 4" fill="none" stroke="#8e98a8" stroke-width="1.800"/></svg>
<svg style="left:260px;top:971px;" width="10" height="7" viewBox="0 0 10 7"><path d="M1 1l4 4 4-4" fill="none" stroke="#8e98a8" stroke-width="1.800"/></svg>
<div style="left:0px;top:293.0px;width:257px;height:17.5px;background:#222933;"></div>
<div class="t" style="top:293.5px;line-height:16px;font-size:12px;color:#e6e9ee;white-space:nowrap;left:3px;">Graphics</div>
<svg style="left:243px;top:296.5px;" width="8" height="11" viewBox="0 0 8 11"><path d="M1 4.500l3-3 3 3M1 9.500l3-3 3 3" fill="none" stroke="#eef0f4" stroke-width="1.500"/></svg>
<div class="t" style="top:311.0px;line-height:16px;font-size:11.7px;color:#e6e9ee;white-space:nowrap;left:9px;white-space:pre;">View Scale</div>
<div class="t" style="top:311.0px;line-height:16px;font-size:11.8px;color:#e6e9ee;white-space:nowrap;left:128px;">1 : 50</div>
<div class="t" style="top:329.0px;line-height:16px;font-size:11.7px;color:#8e98a8;white-space:nowrap;left:9px;white-space:pre;">Scale Value    1:</div>
<div class="t" style="top:329.0px;line-height:16px;font-size:11.8px;color:#8e98a8;white-space:nowrap;left:126px;">50</div>
<div class="t" style="top:347.0px;line-height:16px;font-size:11.7px;color:#e6e9ee;white-space:nowrap;left:9px;white-space:pre;">Display Model</div>
<div class="t" style="top:347.0px;line-height:16px;font-size:11.8px;color:#e6e9ee;white-space:nowrap;left:126px;">Normal</div>
<div class="t" style="top:365.0px;line-height:16px;font-size:11.7px;color:#e6e9ee;white-space:nowrap;left:9px;white-space:pre;">Detail Level</div>
<div class="t" style="top:365.0px;line-height:16px;font-size:11.8px;color:#e6e9ee;white-space:nowrap;left:126px;">Fine</div>
<div class="t" style="top:383.0px;line-height:16px;font-size:11.7px;color:#e6e9ee;white-space:nowrap;left:9px;white-space:pre;">Parts Visibility</div>
<div class="t" style="top:383.0px;line-height:16px;font-size:11.8px;color:#e6e9ee;white-space:nowrap;left:126px;">Show Both</div>
<div class="t" style="top:401.0px;line-height:16px;font-size:11.7px;color:#e6e9ee;white-space:nowrap;left:9px;white-space:pre;">Visibility/Graphics ...</div>
<div style="left:125px;top:402.5px;width:118px;height:15px;background:#363e4b;border:1px solid #8791a1;box-sizing:border-box;"></div>
<div class="t" style="top:401.5px;line-height:16px;font-size:12px;color:#e6e9ee;white-space:nowrap;left:184px;transform:translateX(-50%);">Edit...</div>
<div class="t" style="top:419.0px;line-height:16px;font-size:11.7px;color:#e6e9ee;white-space:nowrap;left:9px;white-space:pre;">Graphic Display Op...</div>
<div style="left:125px;top:420.5px;width:118px;height:15px;background:#363e4b;border:1px solid #8791a1;box-sizing:border-box;"></div>
<div class="t" style="top:419.5px;line-height:16px;font-size:12px;color:#e6e9ee;white-space:nowrap;left:184px;transform:translateX(-50%);">Edit...</div>
<div class="t" style="top:437.0px;line-height:16px;font-size:11.7px;color:#e6e9ee;white-space:nowrap;left:9px;white-space:pre;">Orientation</div>
<div class="t" style="top:437.0px;line-height:16px;font-size:11.8px;color:#e6e9ee;white-space:nowrap;left:126px;">Project North</div>
<div class="t" style="top:455.0px;line-height:16px;font-size:11.7px;color:#8e98a8;white-space:nowrap;left:9px;white-space:pre;">Wall Join Display</div>
<div class="t" style="top:455.0px;line-height:16px;font-size:11.8px;color:#8e98a8;white-space:nowrap;left:126px;">Clean all wall joins</div>
<div class="t" style="top:473.0px;line-height:16px;font-size:11.7px;color:#e6e9ee;white-space:nowrap;left:9px;white-space:pre;">Discipline</div>
<div class="t" style="top:473.0px;line-height:16px;font-size:11.8px;color:#e6e9ee;white-space:nowrap;left:126px;">Electrical</div>
<div class="t" style="top:491.0px;line-height:16px;font-size:11.7px;color:#e6e9ee;white-space:nowrap;left:9px;white-space:pre;">Show Hidden Lines</div>
<div class="t" style="top:491.0px;line-height:16px;font-size:11.8px;color:#e6e9ee;white-space:nowrap;left:126px;">By Discipline</div>
<div class="t" style="top:509.0px;line-height:16px;font-size:11.7px;color:#e6e9ee;white-space:nowrap;left:9px;white-space:pre;">Color Scheme Loca...</div>
<div class="t" style="top:509.0px;line-height:16px;font-size:11.8px;color:#e6e9ee;white-space:nowrap;left:126px;">Background</div>
<div class="t" style="top:527.0px;line-height:16px;font-size:11.7px;color:#e6e9ee;white-space:nowrap;left:9px;white-space:pre;">Color Scheme</div>
<div style="left:125px;top:528.5px;width:118px;height:15px;background:#363e4b;border:1px solid #8791a1;box-sizing:border-box;"></div>
<div class="t" style="top:527.5px;line-height:16px;font-size:12px;color:#e6e9ee;white-space:nowrap;left:184px;transform:translateX(-50%);">&lt;none&gt;</div>
<div class="t" style="top:545.0px;line-height:16px;font-size:11.7px;color:#e6e9ee;white-space:nowrap;left:9px;white-space:pre;">System Color Sche...</div>
<div style="left:125px;top:546.5px;width:118px;height:15px;background:#363e4b;border:1px solid #8791a1;box-sizing:border-box;"></div>
<div class="t" style="top:545.5px;line-height:16px;font-size:12px;color:#e6e9ee;white-space:nowrap;left:184px;transform:translateX(-50%);">Edit...</div>
<div class="t" style="top:563.0px;line-height:16px;font-size:11.7px;color:#e6e9ee;white-space:nowrap;left:9px;white-space:pre;">Default Analysis Dis...</div>
<div class="t" style="top:563.0px;line-height:16px;font-size:11.8px;color:#e6e9ee;white-space:nowrap;left:126px;">None</div>
<div class="t" style="top:581.0px;line-height:16px;font-size:11.7px;color:#e6e9ee;white-space:nowrap;left:9px;white-space:pre;">Visible In Option</div>
<div class="t" style="top:581.0px;line-height:16px;font-size:11.8px;color:#e6e9ee;white-space:nowrap;left:126px;">all</div>
<div class="t" style="top:599.0px;line-height:16px;font-size:11.7px;color:#e6e9ee;white-space:nowrap;left:9px;white-space:pre;">Sun Path</div>
<div style="left:128px;top:602.5px;width:10px;height:10px;background:transparent;border:1px solid #9aa3b0;box-sizing:border-box;"></div>
<div style="left:0px;top:617.0px;width:257px;height:17.5px;background:#222933;"></div>
<div class="t" style="top:617.5px;line-height:16px;font-size:12px;color:#e6e9ee;white-space:nowrap;left:3px;">Underlay</div>
<svg style="left:243px;top:620.5px;" width="8" height="11" viewBox="0 0 8 11"><path d="M1 4.500l3-3 3 3M1 9.500l3-3 3 3" fill="none" stroke="#eef0f4" stroke-width="1.500"/></svg>
<div class="t" style="top:635.0px;line-height:16px;font-size:11.7px;color:#e6e9ee;white-space:nowrap;left:9px;white-space:pre;">Range: Base Level</div>
<div class="t" style="top:635.0px;line-height:16px;font-size:11.8px;color:#e6e9ee;white-space:nowrap;left:126px;">None</div>
<div class="t" style="top:653.0px;line-height:16px;font-size:11.7px;color:#8e98a8;white-space:nowrap;left:9px;white-space:pre;">Range: Top Level</div>
<div class="t" style="top:653.0px;line-height:16px;font-size:11.8px;color:#8e98a8;white-space:nowrap;left:126px;">Unbounded</div>
<div class="t" style="top:671.0px;line-height:16px;font-size:11.7px;color:#e6e9ee;white-space:nowrap;left:9px;white-space:pre;">Underlay Orientation</div>
<div class="t" style="top:671.0px;line-height:16px;font-size:11.8px;color:#e6e9ee;white-space:nowrap;left:126px;">Look down</div>
<div style="left:0px;top:689.0px;width:257px;height:17.5px;background:#222933;"></div>
<div class="t" style="top:689.5px;line-height:16px;font-size:12px;color:#e6e9ee;white-space:nowrap;left:3px;">Extents</div>
<svg style="left:243px;top:692.5px;" width="8" height="11" viewBox="0 0 8 11"><path d="M1 4.500l3-3 3 3M1 9.500l3-3 3 3" fill="none" stroke="#eef0f4" stroke-width="1.500"/></svg>
<div class="t" style="top:707.0px;line-height:16px;font-size:11.7px;color:#e6e9ee;white-space:nowrap;left:9px;white-space:pre;">Crop View</div>
<div style="left:128px;top:710.5px;width:10px;height:10px;background:#9aa3b0;border:1px solid #9aa3b0;box-sizing:border-box;"></div>
<svg style="left:129px;top:711.5px;" width="8" height="8" viewBox="0 0 8 8"><path d="M1 4l2 2.500L7 1" fill="none" stroke="#2b323e" stroke-width="1.500"/></svg>
<div class="t" style="top:725.0px;line-height:16px;font-size:11.7px;color:#e6e9ee;white-space:nowrap;left:9px;white-space:pre;">Crop Region Visible</div>
<div style="left:125px;top:725.5px;width:118px;height:15px;background:#363e4b;border:1px solid #8791a1;box-sizing:border-box;"></div>
<div style="left:128px;top:728.5px;width:10px;height:10px;background:transparent;border:1px solid #9aa3b0;box-sizing:border-box;"></div>
<div class="t" style="top:743.0px;line-height:16px;font-size:11.7px;color:#e6e9ee;white-space:nowrap;left:9px;white-space:pre;">Annotation Crop</div>
<div style="left:128px;top:746.5px;width:10px;height:10px;background:transparent;border:1px solid #9aa3b0;box-sizing:border-box;"></div>
<div class="t" style="top:761.0px;line-height:16px;font-size:11.7px;color:#e6e9ee;white-space:nowrap;left:9px;white-space:pre;">View Range</div>
<div style="left:125px;top:762.5px;width:118px;height:15px;background:#363e4b;border:1px solid #8791a1;box-sizing:border-box;"></div>
<div class="t" style="top:761.5px;line-height:16px;font-size:12px;color:#e6e9ee;white-space:nowrap;left:184px;transform:translateX(-50%);">Edit...</div>
<div class="t" style="top:779.0px;line-height:16px;font-size:11.7px;color:#8e98a8;white-space:nowrap;left:9px;white-space:pre;">Associated Level</div>
<div class="t" style="top:779.0px;line-height:16px;font-size:11.8px;color:#8e98a8;white-space:nowrap;left:126px;">TÉRREO</div>
<div class="t" style="top:797.0px;line-height:16px;font-size:11.7px;color:#e6e9ee;white-space:nowrap;left:9px;white-space:pre;">Scope Box</div>
<div class="t" style="top:797.0px;line-height:16px;font-size:11.8px;color:#e6e9ee;white-space:nowrap;left:126px;">None</div>
<div class="t" style="top:815.0px;line-height:16px;font-size:11.7px;color:#e6e9ee;white-space:nowrap;left:9px;white-space:pre;">Depth Clipping</div>
<div style="left:125px;top:816.5px;width:118px;height:15px;background:#363e4b;border:1px solid #8791a1;box-sizing:border-box;"></div>
<div class="t" style="top:815.5px;line-height:16px;font-size:12px;color:#e6e9ee;white-space:nowrap;left:184px;transform:translateX(-50%);">No clip</div>
<div style="left:0px;top:833.0px;width:257px;height:17.5px;background:#222933;"></div>
<div class="t" style="top:833.5px;line-height:16px;font-size:12px;color:#e6e9ee;white-space:nowrap;left:3px;">Identity Data</div>
<svg style="left:243px;top:836.5px;" width="8" height="11" viewBox="0 0 8 11"><path d="M1 4.500l3-3 3 3M1 9.500l3-3 3 3" fill="none" stroke="#eef0f4" stroke-width="1.500"/></svg>
<div class="t" style="top:851.0px;line-height:16px;font-size:11.7px;color:#e6e9ee;white-space:nowrap;left:9px;white-space:pre;">View Template</div>
<div style="left:125px;top:852.5px;width:118px;height:15px;background:#363e4b;border:1px solid #8791a1;box-sizing:border-box;"></div>
<div class="t" style="top:851.5px;line-height:16px;font-size:12px;color:#e6e9ee;white-space:nowrap;left:184px;transform:translateX(-50%);">&lt;None&gt;</div>
<div class="t" style="top:869.0px;line-height:16px;font-size:11.7px;color:#e6e9ee;white-space:nowrap;left:9px;white-space:pre;">View Name</div>
<div class="t" style="top:869.0px;line-height:16px;font-size:11.8px;color:#e6e9ee;white-space:nowrap;left:126px;">TÉRREO - MODELA...</div>
<div class="t" style="top:887.0px;line-height:16px;font-size:11.7px;color:#8e98a8;white-space:nowrap;left:9px;white-space:pre;">Dependency</div>
<div class="t" style="top:887.0px;line-height:16px;font-size:11.8px;color:#8e98a8;white-space:nowrap;left:126px;">Independent</div>
<div class="t" style="top:905.0px;line-height:16px;font-size:11.7px;color:#e6e9ee;white-space:nowrap;left:9px;white-space:pre;">Title on Sheet</div>
<div class="t" style="top:905.0px;line-height:16px;font-size:11.8px;color:#e6e9ee;white-space:nowrap;left:126px;">PLANTA BAIXA PLA...</div>
<div class="t" style="top:923.0px;line-height:16px;font-size:11.7px;color:#8e98a8;white-space:nowrap;left:9px;white-space:pre;">Referencing Sheet ...</div>
<div class="t" style="top:923.0px;line-height:16px;font-size:11.8px;color:#8e98a8;white-space:nowrap;left:126px;">&lt;None&gt;</div>
<div class="t" style="top:941.0px;line-height:16px;font-size:11.7px;color:#8e98a8;white-space:nowrap;left:9px;white-space:pre;">Referencing Sheet</div>
<div class="t" style="top:959.0px;line-height:16px;font-size:11.7px;color:#8e98a8;white-space:nowrap;left:9px;white-space:pre;">Referencing Detail</div>
<div style="left:0;top:975px;width:257px;height:8px;overflow:hidden;"><div class="t" style="left:9px;top:2px;font-size:11.7px;line-height:16px;color:#e6e9ee;white-space:nowrap;">Tipo de vista</div><div class="t" style="left:126px;top:2px;font-size:11.8px;line-height:16px;color:#e6e9ee;white-space:nowrap;">BRS_MODELAGEM</div><div style="left:246px;top:4px;width:8px;height:8px;border:1px solid #c8cdd6;"></div></div>
<div style="left:0px;top:983px;width:275px;height:25px;background:#2c333f;"></div>
<div style="left:3px;top:984px;width:20px;height:22px;background:#2d7da6;"></div>
<svg style="left:5px;top:988px;" width="16" height="15" viewBox="0 0 16 15"><path d="M1 2.500h7M1 7h9M1 11.500h7" stroke="#8ec4e0" stroke-width="1.300"/><path d="M12.500 1v12M10.500 3.500l2-2.500 2 2.500M10.500 11l2 2.500 2-2.500" fill="#eaf6fc" stroke="#eaf6fc" stroke-width="1"/></svg>
<div style="left:28px;top:985px;width:21px;height:21px;background:#363e4b;"></div>
<div style="left:52.5px;top:985px;width:21px;height:21px;background:#363e4b;"></div>
<div class="t" style="top:983.0px;line-height:16px;font-size:8px;color:#aeb6c4;white-space:nowrap;font-weight:700;left:33.5px;transform:translateX(-50%);">A</div>
<div class="t" style="top:991.0px;line-height:16px;font-size:8.5px;color:#e6e9ee;white-space:nowrap;font-weight:700;left:33.5px;transform:translateX(-50%);">Z</div>
<svg style="left:38.5px;top:987px;" width="8" height="16" viewBox="0 0 8 16"><path d="M4 1v12" stroke="#e6e9ee" stroke-width="1.400"/><circle cx="4" cy="13" r="1.800" fill="#e6e9ee"/></svg>
<div class="t" style="top:983.0px;line-height:16px;font-size:8.5px;color:#e6e9ee;white-space:nowrap;font-weight:700;left:58px;transform:translateX(-50%);">Z</div>
<div class="t" style="top:991.0px;line-height:16px;font-size:8px;color:#aeb6c4;white-space:nowrap;font-weight:700;left:58px;transform:translateX(-50%);">A</div>
<svg style="left:63px;top:987px;" width="8" height="16" viewBox="0 0 8 16"><path d="M4 1v12" stroke="#e6e9ee" stroke-width="1.400"/><circle cx="4" cy="13" r="1.800" fill="#e6e9ee"/></svg>
<div style="left:201px;top:985px;width:70px;height:19px;background:transparent;border:1px solid #4a5363;box-sizing:border-box;border-radius:2px;"></div>
<div class="t" style="top:987.0px;line-height:16px;font-size:12px;color:#6d7686;white-space:nowrap;left:236px;transform:translateX(-50%);">Apply</div>
<div class="t" style="top:173.5px;line-height:16px;font-size:12px;color:#e6e9ee;white-space:nowrap;left:1652px;letter-spacing:-0.067px;">Project Browser - Modelo elétrica - RVT2023</div>
<svg style="left:1908px;top:177px;" width="10" height="10" viewBox="0 0 10 10"><path d="M1 1l8 8M9 1l-8 8" stroke="#c8cdd6" stroke-width="1.500"/></svg>
<div style="left:1657px;top:199px;width:255px;height:22px;background:#333b48;border-radius:2px;"></div>
<svg style="left:1666px;top:202px;" width="17" height="17" viewBox="0 0 17 17"><circle cx="7" cy="7" r="5.300" fill="none" stroke="#b4bbc7" stroke-width="1.500"/><path d="M11 11l5 5" stroke="#b4bbc7" stroke-width="1.800"/></svg>
<div class="t" style="top:202.5px;line-height:16px;font-size:12px;color:#8e98a8;white-space:nowrap;left:1691px;letter-spacing:-0.339px;">Search</div>
<div style="left:1652px;top:231px;width:251px;height:19px;background:#424b5b;"></div>
<div style="left:1904px;top:230px;width:15px;height:778px;background:#394150;"></div>
<div style="left:1909px;top:250px;width:5px;height:485px;background:#4d5666;"></div>
<svg style="left:1906px;top:234px;" width="11" height="7" viewBox="0 0 11 7"><path d="M1 6l4.500-4 4.500 4" fill="none" stroke="#8e98a8" stroke-width="1.800"/></svg>
<svg style="left:1906px;top:994px;" width="11" height="7" viewBox="0 0 11 7"><path d="M1 1l4.500 4 4.500-4" fill="none" stroke="#8e98a8" stroke-width="1.800"/></svg>
<div style="left:1652px;top:230px;width:251px;height:779px;overflow:hidden;" id="tree">
<svg style="left:3.5px;top:6.5px;" width="9" height="9" viewBox="0 0 9 9"><path d="M0 4.500h9" stroke="#c8cdd6" stroke-width="1.500"/></svg>
<svg style="left:21px;top:3px;" width="16" height="16" viewBox="0 0 16 16"><path d="M1 4V1h3M12 1h3v3M15 12v3h-3M4 15H1v-3" fill="none" stroke="#dfe3ea" stroke-width="1.200"/><path d="M4 6l5-2.500 4 1.500v6l-5 2.500-4-1.500z" fill="#dfe3ea"/><path d="M4 6l4 1.500v6M8 7.500l5-2.500" stroke="#3b4453" stroke-width="0.800" fill="none"/></svg>
<div class="t" style="top:3.0px;line-height:16px;font-size:12px;color:#e6e9ee;white-space:nowrap;letter-spacing:-0.3px;left:41px;">Views (BRS_PADRÃO)</div>
<div style="left:8px;top:31px;width:12px;height:0;border-top:1px dotted #5a6476;"></div>
<svg style="left:19.5px;top:26.5px;" width="9" height="9" viewBox="0 0 9 9"><path d="M0 4.500h9" stroke="#c8cdd6" stroke-width="1.500"/></svg>
<div class="t" style="top:23.0px;line-height:16px;font-size:12px;color:#e6e9ee;white-space:nowrap;letter-spacing:-0.3px;left:37px;">???</div>
<div style="left:24px;top:51px;width:12px;height:0;border-top:1px dotted #5a6476;"></div>
<svg style="left:35.5px;top:46.5px;" width="9" height="9" viewBox="0 0 9 9"><path d="M0 4.500h9" stroke="#c8cdd6" stroke-width="1.500"/><path d="M4.500 0v9" stroke="#c8cdd6" stroke-width="1.500"/></svg>
<div class="t" style="top:43.0px;line-height:16px;font-size:12px;color:#e6e9ee;white-space:nowrap;letter-spacing:-0.3px;left:53px;">Ceiling Plans</div>
<div style="left:24px;top:71px;width:12px;height:0;border-top:1px dotted #5a6476;"></div>
<svg style="left:35.5px;top:66.5px;" width="9" height="9" viewBox="0 0 9 9"><path d="M0 4.500h9" stroke="#c8cdd6" stroke-width="1.500"/><path d="M4.500 0v9" stroke="#c8cdd6" stroke-width="1.500"/></svg>
<div class="t" style="top:63.0px;line-height:16px;font-size:12px;color:#e6e9ee;white-space:nowrap;letter-spacing:-0.3px;left:53px;">3D Views</div>
<div style="left:8px;top:91px;width:12px;height:0;border-top:1px dotted #5a6476;"></div>
<svg style="left:19.5px;top:86.5px;" width="9" height="9" viewBox="0 0 9 9"><path d="M0 4.500h9" stroke="#c8cdd6" stroke-width="1.500"/></svg>
<div class="t" style="top:83.0px;line-height:16px;font-size:12px;color:#e6e9ee;white-space:nowrap;letter-spacing:-0.3px;left:37px;">BRS_MODELAGEM</div>
<div style="left:24px;top:111px;width:12px;height:0;border-top:1px dotted #5a6476;"></div>
<svg style="left:35.5px;top:106.5px;" width="9" height="9" viewBox="0 0 9 9"><path d="M0 4.500h9" stroke="#c8cdd6" stroke-width="1.500"/><path d="M4.500 0v9" stroke="#c8cdd6" stroke-width="1.500"/></svg>
<div class="t" style="top:103.0px;line-height:16px;font-size:12px;color:#e6e9ee;white-space:nowrap;letter-spacing:-0.3px;left:53px;">Floor Plans</div>
<div style="left:8px;top:131px;width:12px;height:0;border-top:1px dotted #5a6476;"></div>
<svg style="left:19.5px;top:126.5px;" width="9" height="9" viewBox="0 0 9 9"><path d="M0 4.500h9" stroke="#c8cdd6" stroke-width="1.500"/><path d="M4.500 0v9" stroke="#c8cdd6" stroke-width="1.500"/></svg>
<div class="t" style="top:123.0px;line-height:16px;font-size:12px;color:#e6e9ee;white-space:nowrap;letter-spacing:-0.3px;left:37px;">BRS_VERIFICAÇÃO</div>
<div style="left:8px;top:151px;width:12px;height:0;border-top:1px dotted #5a6476;"></div>
<svg style="left:19.5px;top:146.5px;" width="9" height="9" viewBox="0 0 9 9"><path d="M0 4.500h9" stroke="#c8cdd6" stroke-width="1.500"/><path d="M4.500 0v9" stroke="#c8cdd6" stroke-width="1.500"/></svg>
<div class="t" style="top:143.0px;line-height:16px;font-size:12px;color:#e6e9ee;white-space:nowrap;letter-spacing:-0.3px;left:37px;">WireInConduit</div>
<svg style="left:3.5px;top:166.5px;" width="9" height="9" viewBox="0 0 9 9"><path d="M0 4.500h9" stroke="#c8cdd6" stroke-width="1.500"/><path d="M4.500 0v9" stroke="#c8cdd6" stroke-width="1.500"/></svg>
<svg style="left:21px;top:163px;" width="16" height="16" viewBox="0 0 16 16"><rect x="0.500" y="1.500" width="15" height="13" fill="#dfe3ea"/><path d="M3 5h3M3 8h3M3 11h3M8 5h5M8 8h5M8 11h5" stroke="#3b4453" stroke-width="1.400"/></svg>
<div class="t" style="top:163.0px;line-height:16px;font-size:12px;color:#e6e9ee;white-space:nowrap;letter-spacing:-0.3px;left:41px;">Legends</div>
<svg style="left:3.5px;top:186.5px;" width="9" height="9" viewBox="0 0 9 9"><path d="M0 4.500h9" stroke="#c8cdd6" stroke-width="1.500"/></svg>
<svg style="left:21px;top:184px;" width="16" height="14" viewBox="0 0 16 14"><rect x="0.500" y="0.500" width="15" height="12" fill="none" stroke="#dfe3ea"/><rect x="0.500" y="0.500" width="15" height="3" fill="#dfe3ea"/><path d="M0.500 6.500h15M0.500 9.500h15M5.500 3v10M10.500 3v10" stroke="#dfe3ea"/></svg>
<div class="t" style="top:183.0px;line-height:16px;font-size:12px;color:#e6e9ee;white-space:nowrap;letter-spacing:-0.3px;left:41px;">Schedules/Quantities (BRS_PADRÃO)</div>
<div style="left:8px;top:211px;width:12px;height:0;border-top:1px dotted #5a6476;"></div>
<svg style="left:19.5px;top:206.5px;" width="9" height="9" viewBox="0 0 9 9"><path d="M0 4.500h9" stroke="#c8cdd6" stroke-width="1.500"/><path d="M4.500 0v9" stroke="#c8cdd6" stroke-width="1.500"/></svg>
<div class="t" style="top:203.0px;line-height:16px;font-size:12px;color:#e6e9ee;white-space:nowrap;letter-spacing:-0.3px;left:37px;">Alimentadores</div>
<div style="left:8px;top:231px;width:12px;height:0;border-top:1px dotted #5a6476;"></div>
<svg style="left:19.5px;top:226.5px;" width="9" height="9" viewBox="0 0 9 9"><path d="M0 4.500h9" stroke="#c8cdd6" stroke-width="1.500"/><path d="M4.500 0v9" stroke="#c8cdd6" stroke-width="1.500"/></svg>
<div class="t" style="top:223.0px;line-height:16px;font-size:12px;color:#e6e9ee;white-space:nowrap;letter-spacing:-0.3px;left:37px;">Calculo de Circuitos - Antigo</div>
<div style="left:8px;top:251px;width:12px;height:0;border-top:1px dotted #5a6476;"></div>
<svg style="left:19.5px;top:246.5px;" width="9" height="9" viewBox="0 0 9 9"><path d="M0 4.500h9" stroke="#c8cdd6" stroke-width="1.500"/></svg>
<div class="t" style="top:243.0px;line-height:16px;font-size:12px;color:#e6e9ee;white-space:nowrap;letter-spacing:-0.3px;left:37px;">Calculo de Circuitos - Novo</div>
<div style="left:24px;top:271px;width:44px;height:0;border-top:1px dotted #5a6476;"></div>
<svg style="left:53px;top:263px;" width="16" height="16" viewBox="0 0 16 16"><rect x="1.500" y="1.500" width="13" height="13" fill="#cdd2dc" stroke="#dfe3ea" stroke-dasharray="2 1.200"/></svg>
<div class="t" style="top:263.0px;line-height:16px;font-size:12px;color:#e6e9ee;white-space:nowrap;letter-spacing:-0.3px;left:73px;">DIMENSIONAMENTO DE CIRCUITOS</div>
<div style="left:8px;top:291px;width:12px;height:0;border-top:1px dotted #5a6476;"></div>
<svg style="left:19.5px;top:286.5px;" width="9" height="9" viewBox="0 0 9 9"><path d="M0 4.500h9" stroke="#c8cdd6" stroke-width="1.500"/><path d="M4.500 0v9" stroke="#c8cdd6" stroke-width="1.500"/></svg>
<div class="t" style="top:283.0px;line-height:16px;font-size:12px;color:#e6e9ee;white-space:nowrap;letter-spacing:-0.3px;left:37px;">Documentação</div>
<div style="left:8px;top:311px;width:12px;height:0;border-top:1px dotted #5a6476;"></div>
<svg style="left:19.5px;top:306.5px;" width="9" height="9" viewBox="0 0 9 9"><path d="M0 4.500h9" stroke="#c8cdd6" stroke-width="1.500"/><path d="M4.500 0v9" stroke="#c8cdd6" stroke-width="1.500"/></svg>
<div class="t" style="top:303.0px;line-height:16px;font-size:12px;color:#e6e9ee;white-space:nowrap;letter-spacing:-0.3px;left:37px;">Quantitativos</div>
<div style="left:8px;top:331px;width:12px;height:0;border-top:1px dotted #5a6476;"></div>
<svg style="left:19.5px;top:326.5px;" width="9" height="9" viewBox="0 0 9 9"><path d="M0 4.500h9" stroke="#c8cdd6" stroke-width="1.500"/><path d="M4.500 0v9" stroke="#c8cdd6" stroke-width="1.500"/></svg>
<div class="t" style="top:323.0px;line-height:16px;font-size:12px;color:#e6e9ee;white-space:nowrap;letter-spacing:-0.3px;left:37px;">ricaun</div>
<div style="left:8px;top:351px;width:12px;height:0;border-top:1px dotted #5a6476;"></div>
<svg style="left:19.5px;top:346.5px;" width="9" height="9" viewBox="0 0 9 9"><path d="M0 4.500h9" stroke="#c8cdd6" stroke-width="1.500"/><path d="M4.500 0v9" stroke="#c8cdd6" stroke-width="1.500"/></svg>
<div class="t" style="top:343.0px;line-height:16px;font-size:12px;color:#e6e9ee;white-space:nowrap;letter-spacing:-0.3px;left:37px;">Verificação</div>
<div style="left:8px;top:371px;width:12px;height:0;border-top:1px dotted #5a6476;"></div>
<svg style="left:19.5px;top:366.5px;" width="9" height="9" viewBox="0 0 9 9"><path d="M0 4.500h9" stroke="#c8cdd6" stroke-width="1.500"/><path d="M4.500 0v9" stroke="#c8cdd6" stroke-width="1.500"/></svg>
<div class="t" style="top:363.0px;line-height:16px;font-size:12px;color:#e6e9ee;white-space:nowrap;letter-spacing:-0.3px;left:37px;">zTabelas NBR 5410</div>
<svg style="left:3.5px;top:386.5px;" width="9" height="9" viewBox="0 0 9 9"><path d="M0 4.500h9" stroke="#c8cdd6" stroke-width="1.500"/><path d="M4.500 0v9" stroke="#c8cdd6" stroke-width="1.500"/></svg>
<svg style="left:21px;top:383px;" width="17" height="16" viewBox="0 0 17 16"><rect x="0.500" y="0.500" width="12" height="10" fill="none" stroke="#dfe3ea"/><path d="M0.500 3.500h12M0.500 6.500h12M4.500 0.500v10M8.500 0.500v10" stroke="#dfe3ea"/><rect x="9" y="7" width="7.500" height="8.500" fill="#3b4453" stroke="#dfe3ea"/><path d="M11 10h1M14 10h1M11 13h1M14 13h1" stroke="#dfe3ea" stroke-width="1.300"/></svg>
<div class="t" style="top:383.0px;line-height:16px;font-size:12px;color:#e6e9ee;white-space:nowrap;letter-spacing:-0.3px;left:41px;">Panel Schedules</div>
<svg style="left:3.5px;top:406.5px;" width="9" height="9" viewBox="0 0 9 9"><path d="M0 4.500h9" stroke="#c8cdd6" stroke-width="1.500"/></svg>
<svg style="left:21px;top:403px;" width="17" height="16" viewBox="0 0 17 16"><path d="M1 1h8l4 4v10H1z" fill="#dfe3ea"/><path d="M5 9l8 6h4l-8-8z" fill="#aeb4c0" stroke="#3b4453" stroke-width="0.600"/></svg>
<div class="t" style="top:403.0px;line-height:16px;font-size:12px;color:#e6e9ee;white-space:nowrap;letter-spacing:-0.3px;left:41px;">Sheets (todas)</div>
<div style="left:8px;top:431px;width:12px;height:0;border-top:1px dotted #5a6476;"></div>
<svg style="left:19.5px;top:426.5px;" width="9" height="9" viewBox="0 0 9 9"><path d="M0 4.500h9" stroke="#c8cdd6" stroke-width="1.500"/></svg>
<div class="t" style="top:423.0px;line-height:16px;font-size:12px;color:#e6e9ee;white-space:nowrap;letter-spacing:-0.3px;left:37px;">PE-E-2023-BRVP-02-003 - Finalizada</div>
<div style="left:24px;top:451px;width:44px;height:0;border-top:1px dotted #5a6476;"></div>
<svg style="left:53px;top:443px;" width="16" height="16" viewBox="0 0 16 16"><path d="M0.500 8L8 1l7.500 7h-2v7h-11V8z" fill="#dfe3ea"/><path d="M8 1l7.500 7h-2.500L8 3.500z" fill="#9aa3b2"/><rect x="5" y="10" width="3.500" height="5" fill="#3b4453"/></svg>
<div class="t" style="top:443.0px;line-height:16px;font-size:12px;color:#e6e9ee;white-space:nowrap;letter-spacing:-0.3px;left:73px;">3D View: 3D - ILUMINAÇÃO</div>
<div style="left:24px;top:471px;width:44px;height:0;border-top:1px dotted #5a6476;"></div>
<svg style="left:53px;top:463px;" width="16" height="16" viewBox="0 0 16 16"><path d="M0.500 8L8 1l7.500 7h-2v7h-11V8z" fill="#dfe3ea"/><path d="M8 1l7.500 7h-2.500L8 3.500z" fill="#9aa3b2"/><rect x="5" y="10" width="3.500" height="5" fill="#3b4453"/></svg>
<div class="t" style="top:463.0px;line-height:16px;font-size:12px;color:#e6e9ee;white-space:nowrap;letter-spacing:-0.3px;left:73px;">3D View: 3D - ILUMINAÇÃO 1</div>
<div style="left:24px;top:491px;width:44px;height:0;border-top:1px dotted #5a6476;"></div>
<svg style="left:53px;top:483px;" width="16" height="16" viewBox="0 0 16 16"><path d="M0.500 8L8 1l7.500 7h-2v7h-11V8z" fill="#dfe3ea"/><path d="M8 1l7.500 7h-2.500L8 3.500z" fill="#9aa3b2"/><rect x="5" y="10" width="3.500" height="5" fill="#3b4453"/></svg>
<div class="t" style="top:483.0px;line-height:16px;font-size:12px;color:#e6e9ee;white-space:nowrap;letter-spacing:-0.3px;left:73px;">3D View: 3D - ILUMINAÇÃO - AMBIENTE</div>
<div style="left:24px;top:511px;width:44px;height:0;border-top:1px dotted #5a6476;"></div>
<svg style="left:53px;top:503px;" width="16" height="16" viewBox="0 0 16 16"><path d="M0.500 8L8 1l7.500 7h-2v7h-11V8z" fill="#dfe3ea"/><path d="M8 1l7.500 7h-2.500L8 3.500z" fill="#9aa3b2"/><rect x="5" y="10" width="3.500" height="5" fill="#3b4453"/></svg>
<div class="t" style="top:503.0px;line-height:16px;font-size:12px;color:#e6e9ee;white-space:nowrap;letter-spacing:-0.3px;left:73px;">3D View: 3D - ILUMINAÇÃO - AMBIENTE</div>
<div style="left:24px;top:531px;width:44px;height:0;border-top:1px dotted #5a6476;"></div>
<svg style="left:53px;top:523px;" width="16" height="16" viewBox="0 0 16 16"><path d="M0.500 8L8 1l7.500 7h-2v7h-11V8z" fill="#dfe3ea"/><path d="M8 1l7.500 7h-2.500L8 3.500z" fill="#9aa3b2"/><rect x="5" y="10" width="3.500" height="5" fill="#3b4453"/></svg>
<div class="t" style="top:523.0px;line-height:16px;font-size:12px;color:#e6e9ee;white-space:nowrap;letter-spacing:-0.3px;left:73px;">3D View: 3D - ILUMINAÇÃO - AMBIENTE</div>
<div style="left:24px;top:551px;width:44px;height:0;border-top:1px dotted #5a6476;"></div>
<svg style="left:53px;top:543px;" width="16" height="16" viewBox="0 0 16 16"><path d="M0.500 8L8 1l7.500 7h-2v7h-11V8z" fill="#dfe3ea"/><path d="M8 1l7.500 7h-2.500L8 3.500z" fill="#9aa3b2"/><rect x="5" y="10" width="3.500" height="5" fill="#3b4453"/></svg>
<div class="t" style="top:543.0px;line-height:16px;font-size:12px;color:#e6e9ee;white-space:nowrap;letter-spacing:-0.3px;left:73px;">3D View: 3D - ILUMINAÇÃO - AMBIENTE</div>
<div style="left:24px;top:571px;width:44px;height:0;border-top:1px dotted #5a6476;"></div>
<svg style="left:53px;top:563px;" width="16" height="16" viewBox="0 0 16 16"><rect x="0.500" y="0.500" width="9" height="14" fill="#dfe3ea"/><rect x="6" y="3" width="9" height="5" fill="#c5cad4" stroke="#3b4453" stroke-width="0.600"/><rect x="6" y="7" width="9" height="8.500" fill="#eef0f4" stroke="#3b4453" stroke-width="0.600"/></svg>
<div class="t" style="top:563.0px;line-height:16px;font-size:12px;color:#e6e9ee;white-space:nowrap;letter-spacing:-0.3px;left:73px;">Floor Plan: TÉRREO - ILUMINAÇÃO</div>
<div style="left:24px;top:591px;width:44px;height:0;border-top:1px dotted #5a6476;"></div>
<svg style="left:53px;top:583px;" width="16" height="16" viewBox="0 0 16 16"><rect x="0.500" y="0.500" width="9" height="14" fill="#dfe3ea"/><rect x="6" y="3" width="9" height="5" fill="#c5cad4" stroke="#3b4453" stroke-width="0.600"/><rect x="6" y="7" width="9" height="8.500" fill="#eef0f4" stroke="#3b4453" stroke-width="0.600"/></svg>
<div class="t" style="top:583.0px;line-height:16px;font-size:12px;color:#e6e9ee;white-space:nowrap;letter-spacing:-0.3px;left:73px;">Floor Plan: TÉRREO - ILUMINAÇÃO</div>
<div style="left:24px;top:611px;width:44px;height:0;border-top:1px dotted #5a6476;"></div>
<svg style="left:53px;top:603px;" width="16" height="16" viewBox="0 0 16 16"><rect x="0.500" y="0.500" width="9" height="14" fill="#dfe3ea"/><rect x="6" y="3" width="9" height="5" fill="#c5cad4" stroke="#3b4453" stroke-width="0.600"/><rect x="6" y="7" width="9" height="8.500" fill="#eef0f4" stroke="#3b4453" stroke-width="0.600"/></svg>
<div class="t" style="top:603.0px;line-height:16px;font-size:12px;color:#e6e9ee;white-space:nowrap;letter-spacing:-0.3px;left:73px;">Floor Plan: TÉRREO - ILUMINAÇÃO</div>
<div style="left:24px;top:631px;width:44px;height:0;border-top:1px dotted #5a6476;"></div>
<svg style="left:53px;top:623px;" width="16" height="16" viewBox="0 0 16 16"><rect x="0.500" y="0.500" width="9" height="14" fill="#dfe3ea"/><rect x="6" y="3" width="9" height="5" fill="#c5cad4" stroke="#3b4453" stroke-width="0.600"/><rect x="6" y="7" width="9" height="8.500" fill="#eef0f4" stroke="#3b4453" stroke-width="0.600"/></svg>
<div class="t" style="top:623.0px;line-height:16px;font-size:12px;color:#e6e9ee;white-space:nowrap;letter-spacing:-0.3px;left:73px;">Floor Plan: TÉRREO - ILUMINAÇÃO</div>
<div style="left:24px;top:651px;width:44px;height:0;border-top:1px dotted #5a6476;"></div>
<svg style="left:53px;top:643px;" width="16" height="16" viewBox="0 0 16 16"><rect x="0.500" y="0.500" width="9" height="14" fill="#dfe3ea"/><rect x="6" y="3" width="9" height="5" fill="#c5cad4" stroke="#3b4453" stroke-width="0.600"/><rect x="6" y="7" width="9" height="8.500" fill="#eef0f4" stroke="#3b4453" stroke-width="0.600"/></svg>
<div class="t" style="top:643.0px;line-height:16px;font-size:12px;color:#e6e9ee;white-space:nowrap;letter-spacing:-0.3px;left:73px;">Floor Plan: TÉRREO - ILUMINAÇÃO</div>
<div style="left:24px;top:671px;width:44px;height:0;border-top:1px dotted #5a6476;"></div>
<svg style="left:53px;top:663px;" width="16" height="16" viewBox="0 0 16 16"><rect x="0.500" y="1.500" width="15" height="13" fill="#dfe3ea"/><path d="M3 5h3M3 8h3M3 11h3M8 5h5M8 8h5M8 11h5" stroke="#3b4453" stroke-width="1.400"/></svg>
<div class="t" style="top:663.0px;line-height:16px;font-size:12px;color:#e6e9ee;white-space:nowrap;letter-spacing:-0.3px;left:73px;">Legend: IMPLANTAÇÃO</div>
<div style="left:24px;top:691px;width:44px;height:0;border-top:1px dotted #5a6476;"></div>
<svg style="left:53px;top:684px;" width="16" height="14" viewBox="0 0 16 14"><rect x="0.500" y="0.500" width="15" height="12" fill="none" stroke="#dfe3ea"/><rect x="0.500" y="0.500" width="15" height="3" fill="#dfe3ea"/><path d="M0.500 6.500h15M0.500 9.500h15M5.500 3v10M10.500 3v10" stroke="#dfe3ea"/></svg>
<div class="t" style="top:683.0px;line-height:16px;font-size:12px;color:#e6e9ee;white-space:nowrap;letter-spacing:-0.3px;left:73px;">Schedule: LUMINÁRIAS</div>
<div style="left:24px;top:711px;width:44px;height:0;border-top:1px dotted #5a6476;"></div>
<svg style="left:53px;top:704px;" width="16" height="14" viewBox="0 0 16 14"><rect x="0.500" y="0.500" width="15" height="12" fill="none" stroke="#dfe3ea"/><rect x="0.500" y="0.500" width="15" height="3" fill="#dfe3ea"/><path d="M0.500 6.500h15M0.500 9.500h15M5.500 3v10M10.500 3v10" stroke="#dfe3ea"/></svg>
<div class="t" style="top:703.0px;line-height:16px;font-size:12px;color:#e6e9ee;white-space:nowrap;letter-spacing:-0.3px;left:73px;">Schedule: SIGLAS DE REFERÊNCIA</div>
<div style="left:24px;top:731px;width:44px;height:0;border-top:1px dotted #5a6476;"></div>
<svg style="left:53px;top:724px;" width="16" height="14" viewBox="0 0 16 14"><rect x="0.500" y="0.500" width="15" height="12" fill="none" stroke="#dfe3ea"/><rect x="0.500" y="0.500" width="15" height="3" fill="#dfe3ea"/><path d="M0.500 6.500h15M0.500 9.500h15M5.500 3v10M10.500 3v10" stroke="#dfe3ea"/></svg>
<div class="t" style="top:723.0px;line-height:16px;font-size:12px;color:#e6e9ee;white-space:nowrap;letter-spacing:-0.3px;left:73px;">Schedule: SIGLAS DE REFERÊNCIA</div>
<div style="left:24px;top:751px;width:44px;height:0;border-top:1px dotted #5a6476;"></div>
<svg style="left:53px;top:743px;" width="16" height="16" viewBox="0 0 16 16"><circle cx="8" cy="6.500" r="4.800" fill="none" stroke="#dfe3ea" stroke-width="1.400"/><path d="M11.500 3l3.500 3.500-3.500 3.500M8 11.500V16" fill="none" stroke="#dfe3ea" stroke-width="1.300"/></svg>
<div class="t" style="top:743.0px;line-height:16px;font-size:12px;color:#e6e9ee;white-space:nowrap;letter-spacing:-0.3px;left:73px;">Section: CORTE A</div>
<div style="left:8px;top:771px;width:12px;height:0;border-top:1px dotted #5a6476;"></div>
<svg style="left:19.5px;top:766.5px;" width="9" height="9" viewBox="0 0 9 9"><path d="M0 4.500h9" stroke="#c8cdd6" stroke-width="1.500"/><path d="M4.500 0v9" stroke="#c8cdd6" stroke-width="1.500"/></svg>
<div class="t" style="top:763.0px;line-height:16px;font-size:12px;color:#e6e9ee;white-space:nowrap;letter-spacing:-0.3px;left:37px;">PE-E-2023-BRVP-02-004 - Finalizada</div>
<div style="left:8px;top:20px;width:0;height:130px;border-left:1px dotted #5a6476;"></div>
<div style="left:24px;top:40px;width:0;height:30px;border-left:1px dotted #5a6476;"></div>
<div style="left:24px;top:100px;width:0;height:10px;border-left:1px dotted #5a6476;"></div>
<div style="left:8px;top:200px;width:0;height:170px;border-left:1px dotted #5a6476;"></div>
<div style="left:24px;top:260px;width:0;height:10px;border-left:1px dotted #5a6476;"></div>
<div style="left:8px;top:420px;width:0;height:358px;border-left:1px dotted #5a6476;"></div>
<div style="left:24px;top:440px;width:0;height:310px;border-left:1px dotted #5a6476;"></div>
</div>
<svg style="left:285px;top:176px;" width="14" height="14" viewBox="0 0 14 14"><rect x="0.500" y="0.500" width="8" height="12" fill="#d8dce4"/><rect x="5" y="2.500" width="8" height="5" fill="#c5cad4" stroke="#222933" stroke-width="0.600"/><rect x="5" y="6" width="8" height="7.500" fill="#e8ebf0" stroke="#222933" stroke-width="0.600"/></svg>
<div class="t" style="top:175.0px;line-height:16px;font-size:12px;color:#ffffff;white-space:nowrap;font-weight:700;left:306px;letter-spacing:-0.389px;">TÉRREO - MODELAGEM</div>
<svg style="left:447px;top:178px;" width="10" height="10" viewBox="0 0 10 10"><path d="M1 1l8 8M9 1l-8 8" stroke="#c8cdd6" stroke-width="1.600"/></svg>
<svg style="left:468px;top:176px;" width="16" height="14" viewBox="0 0 16 14"><path d="M0.500 7L8 0.500 15.500 7h-2v6.500h-11V7z" fill="#7d8696"/><rect x="6.500" y="9" width="3" height="4.500" fill="#434c5c"/></svg>
<div class="t" style="top:175.0px;line-height:16px;font-size:12px;color:#e0e4ea;white-space:nowrap;left:490px;letter-spacing:-0.090px;">{3D}</div>
<svg style="left:280px;top:195px;overflow:hidden;" width="1348" height="793" viewBox="280 195 1348 793"><path d="M873.8 195.0 L873.8 956.0" fill="none" stroke="#cfcfcf" stroke-width="1.3" /><path d="M876.3 195.0 L876.3 956.0" fill="none" stroke="#cfcfcf" stroke-width="1.3" /><path d="M910.0 195.0 L910.0 956.0" fill="none" stroke="#cfcfcf" stroke-width="1.3" /><path d="M912.4 195.0 L912.4 956.0" fill="none" stroke="#cfcfcf" stroke-width="1.3" /><path d="M1537.7 195.0 L1537.7 956.0" fill="none" stroke="#d6d6d6" stroke-width="3" /><path d="M1568.6 195.0 L1568.6 956.0" fill="none" stroke="#ecc4a4" stroke-width="1" /><path d="M1573.7 195.0 L1573.7 960.0" fill="none" stroke="#d6d6d6" stroke-width="2.5" /><rect x="280" y="951.500" width="597" height="5" fill="#dcdcdc"/><rect x="911.500" y="951.500" width="628" height="5" fill="#dcdcdc"/><path d="M328.0 962.7 L836.7 962.7" fill="none" stroke="#d9d9d9" stroke-width="1" /><path d="M328.0 974.3 L836.7 974.3" fill="none" stroke="#d9d9d9" stroke-width="1" /><path d="M836.7 956.0 L836.7 975.0" fill="none" stroke="#d9d9d9" stroke-width="1" /><path d="M960.0 962.0 L1468.0 962.0" fill="none" stroke="#d9d9d9" stroke-width="1" /><path d="M960.0 973.5 L1468.0 973.5" fill="none" stroke="#d9d9d9" stroke-width="1" /><path d="M960.0 962.0 L960.0 985.0" fill="none" stroke="#d9d9d9" stroke-width="1" /><path d="M1468.0 956.0 L1468.0 975.0" fill="none" stroke="#d9d9d9" stroke-width="1" /><path d="M288.0 438.0 L538.0 438.0" fill="none" stroke="#e6e6e6" stroke-width="1" /><path d="M288.0 447.0 L538.0 447.0" fill="none" stroke="#e6e6e6" stroke-width="1" /><path d="M288.0 457.0 L538.0 457.0" fill="none" stroke="#e6e6e6" stroke-width="1" /><path d="M484.0 438.0 L484.0 457.0" fill="none" stroke="#e6e6e6" stroke-width="1" /><path d="M492.0 438.0 L492.0 457.0" fill="none" stroke="#e6e6e6" stroke-width="1" /><path d="M1104.0 438.5 L1244.0 438.5" fill="none" stroke="#e6e6e6" stroke-width="1" /><path d="M1104.0 447.0 L1244.0 447.0" fill="none" stroke="#e6e6e6" stroke-width="1" /><path d="M1104.0 455.5 L1244.0 455.5" fill="none" stroke="#e6e6e6" stroke-width="1" /><path d="M1252.0 438.5 L1530.0 438.5" fill="none" stroke="#e6e6e6" stroke-width="1" /><path d="M1252.0 447.0 L1530.0 447.0" fill="none" stroke="#e6e6e6" stroke-width="1" /><path d="M1252.0 455.5 L1530.0 455.5" fill="none" stroke="#e6e6e6" stroke-width="1" /><path d="M288.0 297.0 L395.0 297.0" fill="none" stroke="#e6e6e6" stroke-width="1" /><path d="M395.0 240.0 L395.0 297.0" fill="none" stroke="#e6e6e6" stroke-width="1" /><path d="M739.0 290.0 L863.0 290.0" fill="none" stroke="#e6e6e6" stroke-width="1" /><path d="M739.0 200.0 L739.0 290.0" fill="none" stroke="#e6e6e6" stroke-width="1" /><path d="M916.0 290.0 L1050.0 290.0" fill="none" stroke="#e6e6e6" stroke-width="1" /><path d="M1050.0 200.0 L1050.0 290.0" fill="none" stroke="#e6e6e6" stroke-width="1" /><path d="M1402.0 296.0 L1535.0 296.0" fill="none" stroke="#e6e6e6" stroke-width="1" /><path d="M1402.0 268.0 L1402.0 296.0" fill="none" stroke="#e6e6e6" stroke-width="1" /><path d="M288.0 473.0 L328.0 473.0" fill="none" stroke="#e6e6e6" stroke-width="1" /><path d="M328.0 473.0 L328.0 598.0" fill="none" stroke="#e6e6e6" stroke-width="1" /><rect x="336" y="628" width="265" height="152" fill="none" stroke="#e4e4e4"/><rect x="1195" y="628" width="272" height="152" fill="none" stroke="#e4e4e4"/><path d="M1468.5 195.0 L1468.5 900.0" fill="none" stroke="#e2e2e2" stroke-width="1" /><rect x="1520" y="620" width="10" height="205" rx="3" fill="none" stroke="#e2e2e2"/><path d="M328.0 195.0 L328.0 740.0" fill="none" stroke="#e8e8e8" stroke-width="1" /><rect x="407.2" y="272.5" width="106.5" height="106.5" fill="#fff" stroke="#222" stroke-width="1.300"/><rect x="411.7" y="277.0" width="97.5" height="97.5" fill="#fff" stroke="#111" stroke-width="1.300"/><rect x="407.2" y="492.5" width="106.5" height="106.5" fill="#fff" stroke="#222" stroke-width="1.300"/><rect x="411.7" y="497.0" width="97.5" height="97.5" fill="#fff" stroke="#111" stroke-width="1.300"/><rect x="407.2" y="811.3" width="106.5" height="106.5" fill="#fff" stroke="#222" stroke-width="1.300"/><rect x="411.7" y="815.8" width="97.5" height="97.5" fill="#fff" stroke="#111" stroke-width="1.300"/><rect x="619.7" y="272.5" width="106.5" height="106.5" fill="#fff" stroke="#222" stroke-width="1.300"/><rect x="624.2" y="277.0" width="97.5" height="97.5" fill="#fff" stroke="#111" stroke-width="1.300"/><rect x="619.7" y="492.5" width="106.5" height="106.5" fill="#fff" stroke="#222" stroke-width="1.300"/><rect x="624.2" y="497.0" width="97.5" height="97.5" fill="#fff" stroke="#111" stroke-width="1.300"/><rect x="619.7" y="811.3" width="106.5" height="106.5" fill="#fff" stroke="#222" stroke-width="1.300"/><rect x="624.2" y="815.8" width="97.5" height="97.5" fill="#fff" stroke="#111" stroke-width="1.300"/><rect x="1066.2" y="272.5" width="106.5" height="106.5" fill="#fff" stroke="#222" stroke-width="1.300"/><rect x="1070.7" y="277.0" width="97.5" height="97.5" fill="#fff" stroke="#111" stroke-width="1.300"/><rect x="1066.2" y="811.3" width="106.5" height="106.5" fill="#fff" stroke="#222" stroke-width="1.300"/><rect x="1070.7" y="815.8" width="97.5" height="97.5" fill="#fff" stroke="#111" stroke-width="1.300"/><rect x="1278.2" y="272.5" width="106.5" height="106.5" fill="#fff" stroke="#222" stroke-width="1.300"/><rect x="1282.7" y="277.0" width="97.5" height="97.5" fill="#fff" stroke="#111" stroke-width="1.300"/><rect x="1278.2" y="492.5" width="106.5" height="106.5" fill="#fff" stroke="#222" stroke-width="1.300"/><rect x="1282.7" y="497.0" width="97.5" height="97.5" fill="#fff" stroke="#111" stroke-width="1.300"/><rect x="1278.2" y="811.3" width="106.5" height="106.5" fill="#fff" stroke="#222" stroke-width="1.300"/><rect x="1282.7" y="815.8" width="97.5" height="97.5" fill="#fff" stroke="#111" stroke-width="1.300"/><rect x="1066.2" y="492.5" width="106.5" height="106.5" fill="#fff" stroke="#222" stroke-width="1.300"/><rect x="1070.7" y="497.0" width="97.5" height="97.5" fill="#fff" stroke="#111" stroke-width="1.300"/><path d="M513.5 325.6 L538.3 325.6" fill="none" stroke="#666" stroke-width="2.2" /><path d="M513.5 545.4 L538.3 545.4" fill="none" stroke="#444" stroke-width="2.4" /><path d="M545.8 545.4 L562.5 545.4" fill="none" stroke="#444" stroke-width="2.4" stroke-linecap="round"/><path d="M513.5 864.0 L538.3 864.0" fill="none" stroke="#555" stroke-width="2.4" /><path d="M1251.7 326.0 L1278.0 326.0" fill="none" stroke="#2c2c2c" stroke-width="3.2" stroke-linejoin="round"/><path d="M1251.7 326.0 L1278.0 326.0" fill="none" stroke="#fff" stroke-width="1.2" /><path d="M1251.7 546.5 L1278.0 546.5" fill="none" stroke="#2c2c2c" stroke-width="3.2" stroke-linejoin="round"/><path d="M1251.7 546.5 L1278.0 546.5" fill="none" stroke="#fff" stroke-width="1.2" /><path d="M1228.0 864.0 L1278.0 864.0" fill="none" stroke="#2c2c2c" stroke-width="3.2" stroke-linejoin="round"/><path d="M1228.0 864.0 L1278.0 864.0" fill="none" stroke="#fff" stroke-width="1.2" /><rect x="538.3" y="195" width="7.400000000000091" height="756.7" fill="#d9bfd9" stroke="none"/><path d="M542.0 199.0 L542.0 947.7" fill="none" stroke="#5a455a" stroke-width="1.2" stroke-dasharray="22 9"/><rect x="538.3" y="299" width="7.400000000000091" height="22" fill="#fdfdfd" stroke="none"/><path d="M538.3 299.0 L545.7 299.0" fill="none" stroke="#222" stroke-width="1.4" /><path d="M538.3 321.0 L545.7 321.0" fill="none" stroke="#222" stroke-width="1.4" /><rect x="538.3" y="340" width="7.400000000000091" height="18" fill="#fdfdfd" stroke="none"/><path d="M538.3 340.0 L545.7 340.0" fill="none" stroke="#222" stroke-width="1.4" /><path d="M538.3 358.0 L545.7 358.0" fill="none" stroke="#222" stroke-width="1.4" /><rect x="538.3" y="501" width="7.400000000000091" height="22" fill="#fdfdfd" stroke="none"/><path d="M538.3 501.0 L545.7 501.0" fill="none" stroke="#222" stroke-width="1.4" /><path d="M538.3 523.0 L545.7 523.0" fill="none" stroke="#222" stroke-width="1.4" /><rect x="538.3" y="535" width="7.400000000000091" height="20.5" fill="#fdfdfd" stroke="none"/><path d="M538.3 535.0 L545.7 535.0" fill="none" stroke="#222" stroke-width="1.4" /><path d="M538.3 555.5 L545.7 555.5" fill="none" stroke="#222" stroke-width="1.4" /><rect x="538.3" y="836" width="7.400000000000091" height="20" fill="#fdfdfd" stroke="none"/><path d="M538.3 836.0 L545.7 836.0" fill="none" stroke="#222" stroke-width="1.4" /><path d="M538.3 856.0 L545.7 856.0" fill="none" stroke="#222" stroke-width="1.4" /><rect x="538.3" y="524" width="7.400000000000091" height="10" fill="#e4e0e4" stroke="none"/><rect x="540.3" y="526" width="3.400000000000091" height="6" fill="none" stroke="#555" stroke-width="0.800"/><path d="M538.3 195.0 L538.3 951.7" fill="none" stroke="#222" stroke-width="1.4" /><path d="M545.7 195.0 L545.7 951.7" fill="none" stroke="#222" stroke-width="1.4" /><path d="M538.3 951.7 L545.7 951.7" fill="none" stroke="#222" stroke-width="1.2" /><rect x="1244.3" y="195" width="7.400000000000091" height="756.7" fill="#d9bfd9" stroke="none"/><path d="M1248.0 199.0 L1248.0 947.7" fill="none" stroke="#5a455a" stroke-width="1.2" stroke-dasharray="22 9"/><rect x="1244.3" y="306" width="7.400000000000091" height="19" fill="#fdfdfd" stroke="none"/><path d="M1244.3 306.0 L1251.7 306.0" fill="none" stroke="#222" stroke-width="1.4" /><path d="M1244.3 325.0 L1251.7 325.0" fill="none" stroke="#222" stroke-width="1.4" /><rect x="1244.3" y="343" width="7.400000000000091" height="19" fill="#fdfdfd" stroke="none"/><path d="M1244.3 343.0 L1251.7 343.0" fill="none" stroke="#222" stroke-width="1.4" /><path d="M1244.3 362.0 L1251.7 362.0" fill="none" stroke="#222" stroke-width="1.4" /><rect x="1244.3" y="501" width="7.400000000000091" height="20" fill="#fdfdfd" stroke="none"/><path d="M1244.3 501.0 L1251.7 501.0" fill="none" stroke="#222" stroke-width="1.4" /><path d="M1244.3 521.0 L1251.7 521.0" fill="none" stroke="#222" stroke-width="1.4" /><rect x="1244.3" y="544" width="7.400000000000091" height="18.600000000000023" fill="#fdfdfd" stroke="none"/><path d="M1244.3 544.0 L1251.7 544.0" fill="none" stroke="#222" stroke-width="1.4" /><path d="M1244.3 562.6 L1251.7 562.6" fill="none" stroke="#222" stroke-width="1.4" /><rect x="1244.3" y="817" width="7.400000000000091" height="20" fill="#fdfdfd" stroke="none"/><path d="M1244.3 817.0 L1251.7 817.0" fill="none" stroke="#222" stroke-width="1.4" /><path d="M1244.3 837.0 L1251.7 837.0" fill="none" stroke="#222" stroke-width="1.4" /><rect x="1244.3" y="860" width="7.400000000000091" height="19" fill="#fdfdfd" stroke="none"/><path d="M1244.3 860.0 L1251.7 860.0" fill="none" stroke="#222" stroke-width="1.4" /><path d="M1244.3 879.0 L1251.7 879.0" fill="none" stroke="#222" stroke-width="1.4" /><rect x="1244.3" y="522.5" width="7.400000000000091" height="20.0" fill="#e4e0e4" stroke="none"/><rect x="1246.3" y="524.5" width="3.400000000000091" height="16.0" fill="none" stroke="#555" stroke-width="0.800"/><rect x="1244.3" y="838.5" width="7.400000000000091" height="20.0" fill="#e4e0e4" stroke="none"/><rect x="1246.3" y="840.5" width="3.400000000000091" height="16.0" fill="none" stroke="#555" stroke-width="0.800"/><path d="M1244.3 195.0 L1244.3 951.7" fill="none" stroke="#222" stroke-width="1.4" /><path d="M1251.7 195.0 L1251.7 951.7" fill="none" stroke="#222" stroke-width="1.4" /><path d="M1244.3 951.7 L1251.7 951.7" fill="none" stroke="#222" stroke-width="1.2" /><rect x="538.3" y="608.0" width="7.4" height="8.0" fill="#fff" stroke="#333" stroke-width="1"/><rect x="538.3" y="796.0" width="7.4" height="8.0" fill="#fff" stroke="#333" stroke-width="1"/><rect x="538.3" y="901.0" width="7.4" height="8.0" fill="#fff" stroke="#333" stroke-width="1"/><rect x="1244.3" y="204.0" width="7.4" height="8.0" fill="#fff" stroke="#333" stroke-width="1"/><rect x="1244.3" y="593.0" width="7.4" height="8.0" fill="#fff" stroke="#333" stroke-width="1"/><rect x="1244.3" y="663.0" width="7.4" height="8.0" fill="#fff" stroke="#333" stroke-width="1"/><rect x="1244.3" y="911.0" width="7.4" height="8.0" fill="#fff" stroke="#333" stroke-width="1"/><path d="M303.0 227.0 L538.0 227.0" fill="none" stroke="#000" stroke-width="1" /><polygon points="538.0,227.0 529.0,224.4 529.0,229.6" fill="#000"/><text x="309.0" y="208.6" font-family="Liberation Sans, sans-serif" font-style="italic" font-size="22.5" textLength="48.0" lengthAdjust="spacingAndGlyphs" fill="#000">2T.37</text><text x="368.0" y="208.6" font-family="Liberation Sans, sans-serif" font-style="italic" font-size="22.5" textLength="45.0" lengthAdjust="spacingAndGlyphs" fill="#000">2T.11</text><text x="426.0" y="208.6" font-family="Liberation Sans, sans-serif" font-style="italic" font-size="22.5" textLength="34.0" lengthAdjust="spacingAndGlyphs" fill="#000">2T.1</text><text x="472.7" y="208.6" font-family="Liberation Sans, sans-serif" font-style="italic" font-size="22.5" textLength="35.5" lengthAdjust="spacingAndGlyphs" fill="#000">2.7a</text><path d="M318.3 214.0 L324.3 214.0 L324.3 240.0" fill="none" stroke="#1c1cb4" stroke-width="1.2" /><path d="M333.3 214.0 L333.3 240.0" fill="none" stroke="#b81c2c" stroke-width="1.2" /><path d="M336.0 214.0 L346.0 214.0" fill="none" stroke="#8c8c8c" stroke-width="1.2" /><path d="M341.0 214.0 L341.0 227.0" fill="none" stroke="#8c8c8c" stroke-width="1.2" /><path d="M382.3 214.0 L388.3 214.0 L388.3 240.0" fill="none" stroke="#1c1cb4" stroke-width="1.2" /><path d="M396.7 214.0 L396.7 240.0" fill="none" stroke="#b81c2c" stroke-width="1.2" /><path d="M433.0 214.0 L439.0 214.0 L439.0 240.0" fill="none" stroke="#1c1cb4" stroke-width="1.2" /><path d="M447.3 214.0 L447.3 240.0" fill="none" stroke="#b81c2c" stroke-width="1.2" /><path d="M471.3 214.0 L477.3 214.0 L477.3 240.0" fill="none" stroke="#1c1cb4" stroke-width="1.2" /><path d="M486.7 214.0 L486.7 240.0" fill="none" stroke="#b81c2c" stroke-width="1.2" /><path d="M495.0 214.0 L495.0 227.0" fill="none" stroke="#222" stroke-width="1.2" /><path d="M497.7 214.0 L507.7 214.0" fill="none" stroke="#8c8c8c" stroke-width="1.2" /><path d="M502.7 214.0 L502.7 227.0" fill="none" stroke="#8c8c8c" stroke-width="1.2" /><text x="573.0" y="273.8" font-family="Liberation Sans, sans-serif" font-style="italic" font-size="22.5" textLength="37.0" lengthAdjust="spacingAndGlyphs" fill="#000">2.7a</text><path d="M570.0 293.3 L611.7 293.3" fill="none" stroke="#000" stroke-width="1" /><path d="M576.3 279.3 L582.3 279.3 L582.3 307.3" fill="none" stroke="#1c1cb4" stroke-width="1.2" /><path d="M591.0 279.3 L591.0 293.3" fill="none" stroke="#222" stroke-width="1.2" /><path d="M594.3 279.3 L604.3 279.3" fill="none" stroke="#8c8c8c" stroke-width="1.2" /><path d="M599.3 279.3 L599.3 293.3" fill="none" stroke="#8c8c8c" stroke-width="1.2" /><path d="M546.0 311.3 L563.3 311.3 L600.8 325.4 L619.5 325.4" fill="none" stroke="#2c2c2c" stroke-width="3.2" stroke-linejoin="round"/><path d="M546.0 311.3 L563.3 311.3 L600.8 325.4 L619.5 325.4" fill="none" stroke="#fff" stroke-width="1.2" /><polygon points="586.700,319.200 588.500,308 592.500,309" fill="#000"/><text x="527.5" y="316.5" font-family="Liberation Sans, sans-serif" font-style="italic" font-size="22.5" textLength="36.0" lengthAdjust="spacingAndGlyphs" fill="#000">2.7a</text><path d="M545.8 325.4 L562.0 325.4 L562.0 348.8 L545.8 348.8" fill="none" stroke="#777" stroke-width="1.8" /><path d="M525.0 336.7 L573.0 336.7" fill="none" stroke="#000" stroke-width="1" /><polygon points="564.0,336.7 572.0,333.7 572.0,339.7" fill="#000"/><path d="M530.0 323.0 L536.7 323.0 L536.7 349.0" fill="none" stroke="#1c1cb4" stroke-width="1.2" /><path d="M549.2 323.8 L559.2 323.8" fill="none" stroke="#3c8c64" stroke-width="1.2" /><path d="M554.2 323.8 L554.2 335.8" fill="none" stroke="#3c8c64" stroke-width="1.2" /><text x="600.7" y="325.5" font-family="Liberation Sans, sans-serif" font-style="italic" font-size="22.5" textLength="45.3" lengthAdjust="spacingAndGlyphs" fill="#000">2.7bc</text><path d="M647.7 345.0 L597.3 345.0 L597.3 398.0" fill="none" stroke="#000" stroke-width="1" /><polygon points="597.3,398.5 594.7,389.5 599.9,389.5" fill="#000"/><path d="M610.0 332.0 L610.0 358.0" fill="none" stroke="#b81c2c" stroke-width="1.2" /><path d="M626.7 332.0 L626.7 345.0" fill="none" stroke="#222" stroke-width="1.2" /><path d="M631.0 332.0 L631.0 345.0" fill="none" stroke="#222" stroke-width="1.2" /><path d="M633.0 332.0 L643.0 332.0" fill="none" stroke="#8c8c8c" stroke-width="1.2" /><path d="M638.0 332.0 L638.0 345.0" fill="none" stroke="#8c8c8c" stroke-width="1.2" /><path d="M546.0 400.5 L703.0 400.5" fill="none" stroke="#2a2a2a" stroke-width="6.6" /><path d="M546.0 400.5 L703.0 400.5" fill="none" stroke="#8e9294" stroke-width="3.8" /><rect x="702.7" y="395.7" width="10.0" height="10.8" fill="#fff" stroke="#333" stroke-width="1"/><path d="M707.7 406.5 L707.7 418.0" fill="none" stroke="#2a2a2a" stroke-width="7" /><path d="M707.7 406.5 L707.7 418.0" fill="none" stroke="#8e9294" stroke-width="4.2" /><path d="M707.0 419.0 L707.0 457.0" fill="none" stroke="#e0b89a" stroke-width="5.5" /><rect x="704" y="418.5" width="6" height="6" fill="#fff" stroke="#222" stroke-width="0.800"/><path d="M704.0 418.5 L710.0 424.5" fill="none" stroke="#222" stroke-width="1" /><path d="M704.0 424.5 L710.0 418.5" fill="none" stroke="#222" stroke-width="1" /><path d="M702.7 458.0 L702.7 451.0 L716.5 451.0 L716.5 458.0" fill="none" stroke="#2a2ad0" stroke-width="1.2" /><path d="M702.7 458.0 L716.5 458.0" fill="none" stroke="#2a2ad0" stroke-width="1.6" /><path d="M710.0 458.0 L710.0 468.0" fill="none" stroke="#4a8a6a" stroke-width="1" /><circle cx="710" cy="477.3" r="9.3" fill="#fff" stroke="#4a8a6a" stroke-width="1.100"/><path d="M700.7 477.3 L719.3 477.3" fill="none" stroke="#4a8a6a" stroke-width="1.1" /><text x="570.0" y="436.1" font-family="Liberation Sans, sans-serif" font-style="italic" font-size="22.5" textLength="45.0" lengthAdjust="spacingAndGlyphs" fill="#000">2.7bc</text><text x="621.7" y="436.1" font-family="Liberation Sans, sans-serif" font-style="italic" font-size="22.5" textLength="36.6" lengthAdjust="spacingAndGlyphs" fill="#000">2T.1</text><text x="666.7" y="436.1" font-family="Liberation Sans, sans-serif" font-style="italic" font-size="22.5" textLength="46.6" lengthAdjust="spacingAndGlyphs" fill="#000">2T.11</text><text x="726.7" y="436.1" font-family="Liberation Sans, sans-serif" font-style="italic" font-size="22.5" textLength="46.6" lengthAdjust="spacingAndGlyphs" fill="#000">2T.37</text><path d="M546.0 456.3 L780.0 456.3" fill="none" stroke="#000" stroke-width="1" /><polygon points="546.5,456.3 555.5,453.7 555.5,458.9" fill="#000"/><path d="M574.0 443.3 L580.0 443.3 L580.0 469.3" fill="none" stroke="#1c1cb4" stroke-width="1.2" /><path d="M588.3 443.3 L588.3 456.3" fill="none" stroke="#222" stroke-width="1.2" /><path d="M596.7 443.3 L596.7 456.3" fill="none" stroke="#222" stroke-width="1.2" /><path d="M600.0 443.3 L610.0 443.3" fill="none" stroke="#8c8c8c" stroke-width="1.2" /><path d="M605.0 443.3 L605.0 456.3" fill="none" stroke="#8c8c8c" stroke-width="1.2" /><path d="M630.0 443.3 L636.0 443.3 L636.0 469.3" fill="none" stroke="#1c1cb4" stroke-width="1.2" /><path d="M645.0 443.3 L645.0 469.3" fill="none" stroke="#b81c2c" stroke-width="1.2" /><path d="M680.7 443.3 L686.7 443.3 L686.7 469.3" fill="none" stroke="#1c1cb4" stroke-width="1.2" /><path d="M695.7 443.3 L695.7 469.3" fill="none" stroke="#b81c2c" stroke-width="1.2" /><path d="M735.7 443.3 L741.7 443.3 L741.7 469.3" fill="none" stroke="#1c1cb4" stroke-width="1.2" /><path d="M750.7 443.3 L750.7 469.3" fill="none" stroke="#b81c2c" stroke-width="1.2" /><path d="M753.7 443.3 L763.7 443.3" fill="none" stroke="#8c8c8c" stroke-width="1.2" /><path d="M758.7 443.3 L758.7 456.3" fill="none" stroke="#8c8c8c" stroke-width="1.2" /><text x="584.0" y="485.1" font-family="Liberation Sans, sans-serif" font-style="italic" font-size="22.5" textLength="36.0" lengthAdjust="spacingAndGlyphs" fill="#000">2.7c</text><path d="M580.0 504.0 L623.0 504.0" fill="none" stroke="#000" stroke-width="1" /><path d="M587.3 491.5 L593.3 491.5 L593.3 516.5" fill="none" stroke="#1c1cb4" stroke-width="1.2" /><path d="M601.7 491.5 L601.7 504.0" fill="none" stroke="#222" stroke-width="1.2" /><path d="M604.3 491.5 L614.3 491.5" fill="none" stroke="#8c8c8c" stroke-width="1.2" /><path d="M609.3 491.5 L609.3 504.0" fill="none" stroke="#8c8c8c" stroke-width="1.2" /><path d="M546.0 512.1 L561.7 512.1 L602.5 545.4 L619.5 545.4" fill="none" stroke="#2c2c2c" stroke-width="3.2" stroke-linejoin="round"/><path d="M546.0 512.1 L561.7 512.1 L602.5 545.4 L619.5 545.4" fill="none" stroke="#fff" stroke-width="1.2" /><path d="M601.7 518.8 L594.0 527.5" fill="none" stroke="#000" stroke-width="1" /><polygon points="589.200,533.300 594,523.500 598,527" fill="#000"/><text x="735.0" y="575.1" font-family="Liberation Sans, sans-serif" font-style="italic" font-size="22.5" textLength="48.3" lengthAdjust="spacingAndGlyphs" fill="#000">2T.37</text><path d="M788.3 595.0 L729.3 595.0 L729.3 648.0" fill="none" stroke="#000" stroke-width="1" /><polygon points="729.3,649.0 726.7,640.0 731.9,640.0" fill="#000"/><path d="M744.7 582.0 L750.7 582.0 L750.7 608.0" fill="none" stroke="#1c1cb4" stroke-width="1.2" /><path d="M759.3 582.0 L759.3 608.0" fill="none" stroke="#b81c2c" stroke-width="1.2" /><path d="M762.3 582.0 L772.3 582.0" fill="none" stroke="#3c8c64" stroke-width="1.2" /><path d="M767.3 582.0 L767.3 595.0" fill="none" stroke="#3c8c64" stroke-width="1.2" /><text x="570.0" y="624.5" font-family="Liberation Sans, sans-serif" font-style="italic" font-size="22.5" textLength="45.0" lengthAdjust="spacingAndGlyphs" fill="#000">2.7bc</text><text x="621.7" y="624.5" font-family="Liberation Sans, sans-serif" font-style="italic" font-size="22.5" textLength="36.6" lengthAdjust="spacingAndGlyphs" fill="#000">2T.1</text><text x="666.7" y="624.5" font-family="Liberation Sans, sans-serif" font-style="italic" font-size="22.5" textLength="46.6" lengthAdjust="spacingAndGlyphs" fill="#000">2T.11</text><text x="726.7" y="624.5" font-family="Liberation Sans, sans-serif" font-style="italic" font-size="22.5" textLength="46.6" lengthAdjust="spacingAndGlyphs" fill="#000">2T.37</text><path d="M546.0 644.3 L780.0 644.3" fill="none" stroke="#000" stroke-width="1" /><polygon points="546.5,644.3 555.5,641.7 555.5,646.9" fill="#000"/><path d="M574.0 631.3 L580.0 631.3 L580.0 657.3" fill="none" stroke="#1c1cb4" stroke-width="1.2" /><path d="M588.3 631.3 L588.3 644.3" fill="none" stroke="#222" stroke-width="1.2" /><path d="M596.7 631.3 L596.7 644.3" fill="none" stroke="#222" stroke-width="1.2" /><path d="M600.0 631.3 L610.0 631.3" fill="none" stroke="#8c8c8c" stroke-width="1.2" /><path d="M605.0 631.3 L605.0 644.3" fill="none" stroke="#8c8c8c" stroke-width="1.2" /><path d="M630.0 631.3 L636.0 631.3 L636.0 657.3" fill="none" stroke="#1c1cb4" stroke-width="1.2" /><path d="M645.0 631.3 L645.0 657.3" fill="none" stroke="#b81c2c" stroke-width="1.2" /><path d="M680.7 631.3 L686.7 631.3 L686.7 657.3" fill="none" stroke="#1c1cb4" stroke-width="1.2" /><path d="M695.7 631.3 L695.7 657.3" fill="none" stroke="#b81c2c" stroke-width="1.2" /><path d="M735.7 631.3 L741.7 631.3 L741.7 657.3" fill="none" stroke="#1c1cb4" stroke-width="1.2" /><path d="M750.7 631.3 L750.7 657.3" fill="none" stroke="#b81c2c" stroke-width="1.2" /><path d="M753.7 631.3 L763.7 631.3" fill="none" stroke="#8c8c8c" stroke-width="1.2" /><path d="M758.7 631.3 L758.7 644.3" fill="none" stroke="#8c8c8c" stroke-width="1.2" /><path d="M690.0 650.3 L830.0 650.3" fill="none" stroke="#2a2a2a" stroke-width="6.6" /><path d="M690.0 650.3 L830.0 650.3" fill="none" stroke="#8e9294" stroke-width="3.8" /><rect x="826.5" y="646.8" width="7.0" height="7.0" fill="#fff" stroke="#222" stroke-width="0.800"/><path d="M826.5 646.8 L833.5 653.8" fill="none" stroke="#222" stroke-width="1" /><path d="M826.5 653.8 L833.5 646.8" fill="none" stroke="#222" stroke-width="1" /><path d="M833.5 651.0 L846.0 652.5" fill="none" stroke="#e0b89a" stroke-width="5" /><polygon points="845.0,653.4 866.7,641.7 866.7,665.0" fill="#1010e8" stroke="none" stroke-width="1"/><path d="M866.7 653.0 L876.0 653.0" fill="none" stroke="#e0b89a" stroke-width="5" /><rect x="875.0" y="646.7" width="8.3" height="13.3" fill="none" stroke="#2a2ad0" stroke-width="1.200"/><text x="850.0" y="683.8" font-family="Liberation Sans, sans-serif" font-style="italic" font-size="22.5" textLength="50.0" lengthAdjust="spacingAndGlyphs" fill="#000">2T.37</text><rect x="670.0" y="645.0" width="20.0" height="11.7" fill="#fff" stroke="#333" stroke-width="1"/><path d="M674.7 656.7 L674.7 703.0" fill="none" stroke="#2a2a2a" stroke-width="6.6" /><path d="M674.7 656.7 L674.7 703.0" fill="none" stroke="#8e9294" stroke-width="3.8" /><circle cx="675" cy="715" r="12.3" fill="#fff" stroke="#5a7a5a" stroke-width="1"/><polygon points="675,705.5 665.6,720.5 684.4,720.5" fill="#1010e8"/><rect x="671.0" y="727.0" width="8.0" height="10.0" fill="#ddd" stroke="#333" stroke-width="1"/><rect x="660.0" y="736.7" width="19.3" height="11.6" fill="#fff" stroke="#333" stroke-width="1"/><path d="M330.7 742.5 L660.0 742.5" fill="none" stroke="#2a2a2a" stroke-width="6.6" /><path d="M330.7 742.5 L660.0 742.5" fill="none" stroke="#8e9294" stroke-width="3.8" /><rect x="310.7" y="737.3" width="20.0" height="10.0" fill="#fff" stroke="#333" stroke-width="1"/><rect x="280" y="740" width="31" height="4.500" fill="#8aa08a"/><polygon points="291.200,732.200 308.600,739.500 291.200,741" fill="#f4faf0" stroke="#5a8a5a" stroke-width="0.900"/><polygon points="291.200,745.200 311.500,744.500 291.200,757.400" fill="#1010e8"/><polygon points="279,745 288.600,745 279,752" fill="#1010e8"/><rect x="280" y="738.500" width="6" height="6" fill="#d8b89a"/><path d="M320.3 747.3 L320.3 911.0" fill="none" stroke="#2a2a2a" stroke-width="6.6" /><path d="M320.3 747.3 L320.3 911.0" fill="none" stroke="#8e9294" stroke-width="3.8" /><rect x="316.8" y="910.5" width="7.0" height="7.0" fill="#fff" stroke="#222" stroke-width="0.800"/><path d="M316.8 910.5 L323.8 917.5" fill="none" stroke="#222" stroke-width="1" /><path d="M316.8 917.5 L323.8 910.5" fill="none" stroke="#222" stroke-width="1" /><path d="M320.3 918.0 L320.3 952.0" fill="none" stroke="#e0b89a" stroke-width="6" /><rect x="316.7" y="952.3" width="13.3" height="8.7" fill="none" stroke="#2a2ad0" stroke-width="1.200"/><text x="553.3" y="667.8" font-family="Liberation Sans, sans-serif" font-style="italic" font-size="22.5" textLength="36.7" lengthAdjust="spacingAndGlyphs" fill="#000">2T.1</text><text x="600.0" y="667.8" font-family="Liberation Sans, sans-serif" font-style="italic" font-size="22.5" textLength="46.7" lengthAdjust="spacingAndGlyphs" fill="#000">2T.37</text><path d="M652.7 687.0 L551.7 687.0 L551.7 739.0" fill="none" stroke="#000" stroke-width="1" /><polygon points="551.7,740.0 549.1,731.0 554.3,731.0" fill="#000"/><path d="M563.0 674.0 L569.0 674.0 L569.0 700.0" fill="none" stroke="#1c1cb4" stroke-width="1.2" /><path d="M576.7 674.0 L576.7 700.0" fill="none" stroke="#b81c2c" stroke-width="1.2" /><path d="M609.0 674.0 L615.0 674.0 L615.0 700.0" fill="none" stroke="#1c1cb4" stroke-width="1.2" /><path d="M623.3 674.0 L623.3 700.0" fill="none" stroke="#b81c2c" stroke-width="1.2" /><path d="M626.3 674.0 L636.3 674.0" fill="none" stroke="#8c8c8c" stroke-width="1.2" /><path d="M631.3 674.0 L631.3 687.0" fill="none" stroke="#8c8c8c" stroke-width="1.2" /><rect x="579.3" y="699.3" width="78.40000000000009" height="32.40000000000009" fill="#fff" stroke="#777" stroke-width="1.200"/><text x="584" y="723.8" font-family="Liberation Sans, sans-serif" font-size="23" textLength="67.7" lengthAdjust="spacingAndGlyphs" fill="#000">EMER</text><text x="337.3" y="629.5" font-family="Liberation Sans, sans-serif" font-style="italic" font-size="22.5" textLength="47.7" lengthAdjust="spacingAndGlyphs" fill="#000">2T.11</text><path d="M391.0 649.0 L331.7 649.0 L331.7 703.0" fill="none" stroke="#000" stroke-width="1" /><polygon points="331.7,704.0 329.1,695.0 334.3,695.0" fill="#000"/><path d="M346.7 636.0 L352.7 636.0 L352.7 662.0" fill="none" stroke="#1c1cb4" stroke-width="1.2" /><path d="M361.7 636.0 L361.7 662.0" fill="none" stroke="#b81c2c" stroke-width="1.2" /><path d="M364.3 636.0 L374.3 636.0" fill="none" stroke="#3c8c64" stroke-width="1.2" /><path d="M369.3 636.0 L369.3 649.0" fill="none" stroke="#3c8c64" stroke-width="1.2" /><path d="M280.0 704.0 L445.7 704.0" fill="none" stroke="#3a3a3a" stroke-width="2.4" /><text x="410.7" y="667.8" font-family="Liberation Sans, sans-serif" font-style="italic" font-size="22.5" textLength="46.0" lengthAdjust="spacingAndGlyphs" fill="#000">2T.11</text><path d="M464.0 687.0 L404.3 687.0 L404.3 739.0" fill="none" stroke="#000" stroke-width="1" /><polygon points="404.3,740.0 401.7,731.0 406.9,731.0" fill="#000"/><path d="M420.7 674.0 L426.7 674.0 L426.7 700.0" fill="none" stroke="#1c1cb4" stroke-width="1.2" /><path d="M434.3 674.0 L434.3 700.0" fill="none" stroke="#b81c2c" stroke-width="1.2" /><path d="M438.0 674.0 L448.0 674.0" fill="none" stroke="#3c8c64" stroke-width="1.2" /><path d="M443.0 674.0 L443.0 687.0" fill="none" stroke="#3c8c64" stroke-width="1.2" /><rect x="445.7" y="692.7" width="36.6" height="23.3" fill="#fff" stroke="#222" stroke-width="1.200"/><rect x="448.7" y="695.7" width="30.6" height="17.3" fill="#fff" stroke="#222" stroke-width="1.200"/><text x="352.7" y="811.1" font-family="Liberation Sans, sans-serif" font-style="italic" font-size="22.5" textLength="46.6" lengthAdjust="spacingAndGlyphs" fill="#000">2T.11</text><path d="M323.3 831.0 L406.7 831.0" fill="none" stroke="#000" stroke-width="1" /><polygon points="323.5,831.0 332.5,828.4 332.5,833.6" fill="#000"/><path d="M361.3 818.0 L367.3 818.0 L367.3 844.0" fill="none" stroke="#1c1cb4" stroke-width="1.2" /><path d="M376.7 818.0 L376.7 844.0" fill="none" stroke="#b81c2c" stroke-width="1.2" /><path d="M378.7 818.0 L388.7 818.0" fill="none" stroke="#3c8c64" stroke-width="1.2" /><path d="M383.7 818.0 L383.7 831.0" fill="none" stroke="#3c8c64" stroke-width="1.2" /><text x="343.3" y="882.8" font-family="Liberation Sans, sans-serif" font-style="italic" font-size="22.5" textLength="46.7" lengthAdjust="spacingAndGlyphs" fill="#000">2T.11</text><path d="M396.0 902.3 L337.3 902.3 L337.3 956.0" fill="none" stroke="#000" stroke-width="1" /><polygon points="337.3,956.7 334.7,947.7 339.9,947.7" fill="#000"/><path d="M352.3 889.3 L358.3 889.3 L358.3 915.3" fill="none" stroke="#1c1cb4" stroke-width="1.2" /><path d="M367.3 889.3 L367.3 915.3" fill="none" stroke="#b81c2c" stroke-width="1.2" /><path d="M369.7 889.3 L379.7 889.3" fill="none" stroke="#8c8c8c" stroke-width="1.2" /><path d="M374.7 889.3 L374.7 902.3" fill="none" stroke="#8c8c8c" stroke-width="1.2" /><text x="576.0" y="809.8" font-family="Liberation Sans, sans-serif" font-style="italic" font-size="22.5" textLength="35.7" lengthAdjust="spacingAndGlyphs" fill="#000">2.7c</text><path d="M572.0 829.3 L614.3 829.3" fill="none" stroke="#000" stroke-width="1" /><path d="M579.7 816.8 L585.7 816.8 L585.7 841.8" fill="none" stroke="#1c1cb4" stroke-width="1.2" /><path d="M594.3 816.8 L594.3 829.3" fill="none" stroke="#222" stroke-width="1.2" /><path d="M596.7 816.8 L606.7 816.8" fill="none" stroke="#8c8c8c" stroke-width="1.2" /><path d="M601.7 816.8 L601.7 829.3" fill="none" stroke="#8c8c8c" stroke-width="1.2" /><polygon points="586.500,856 590.500,846.500 593.500,848" fill="#000"/><text x="532.5" y="852.0" font-family="Liberation Sans, sans-serif" font-style="italic" font-size="22.5" textLength="35.0" lengthAdjust="spacingAndGlyphs" fill="#000">2.7b</text><path d="M546.0 845.4 L567.5 846.2 L602.5 863.8 L619.5 863.8" fill="none" stroke="#2c2c2c" stroke-width="3.2" stroke-linejoin="round"/><path d="M546.0 845.4 L567.5 846.2 L602.5 863.8 L619.5 863.8" fill="none" stroke="#fff" stroke-width="1.2" /><path d="M545.8 863.3 L562.5 863.3 L562.5 880.8 L545.8 880.8" fill="none" stroke="#777" stroke-width="1.6" /><text x="526.2" y="882.2" font-family="Liberation Sans, sans-serif" font-style="italic" font-size="22.5" textLength="48.8" lengthAdjust="spacingAndGlyphs" fill="#000">2T.11</text><path d="M529.0 872.0 L566.0 872.0" fill="none" stroke="#000" stroke-width="1" /><polygon points="564.2,871.7 574.7,867.2 574.7,876.2" fill="#000"/><path d="M579.3 902.3 L520.0 902.3 L520.0 956.0" fill="none" stroke="#000" stroke-width="1" /><polygon points="520.0,956.7 517.4,947.7 522.6,947.7" fill="#000"/><path d="M550.4 889.3 L550.4 915.3" fill="none" stroke="#b81c2c" stroke-width="1.2" /><path d="M553.3 889.3 L563.3 889.3" fill="none" stroke="#3c8c64" stroke-width="1.2" /><path d="M558.3 889.3 L558.3 902.3" fill="none" stroke="#3c8c64" stroke-width="1.2" /><path d="M535.0 858.3 L540.0 858.3 L540.0 915.0" fill="none" stroke="#1c1cb4" stroke-width="1.2" /><path d="M542.5 858.3 L542.5 915.0" fill="none" stroke="#1c1cb4" stroke-width="1.2" /><path d="M535.0 888.3 L540.0 888.3" fill="none" stroke="#1c1cb4" stroke-width="1.2" /><path d="M550.0 858.8 L563.3 858.8" fill="none" stroke="#8c8c8c" stroke-width="1.1" /><path d="M550.8 858.8 L550.8 871.7" fill="none" stroke="#8c8c8c" stroke-width="1.1" /><path d="M559.2 858.8 L559.2 871.7" fill="none" stroke="#8c8c8c" stroke-width="1.1" /><polygon points="410.7,922.3 397.7,945 423.7,945" fill="#f4f9f0" stroke="#5a8a5a" stroke-width="1"/><path d="M410.7 945.0 L410.7 952.0" fill="none" stroke="#5a8a5a" stroke-width="1" /><rect x="403.7" y="952.3" width="14.0" height="8.7" fill="none" stroke="#2a2ad0" stroke-width="1.200"/><polygon points="689.7,922.3 676.7,945 702.7,945" fill="#f4f9f0" stroke="#5a8a5a" stroke-width="1"/><path d="M689.7 945.0 L689.7 952.0" fill="none" stroke="#5a8a5a" stroke-width="1" /><rect x="682.7" y="952.3" width="14.0" height="8.7" fill="none" stroke="#2a2ad0" stroke-width="1.200"/><path d="M1251.7 205.3 L1515.0 205.3" fill="none" stroke="#2a2a2a" stroke-width="6.6" /><path d="M1251.7 205.3 L1515.0 205.3" fill="none" stroke="#8e9294" stroke-width="3.8" /><rect x="1513.7" y="201.5" width="7.6" height="7.6" fill="#fff" stroke="#222" stroke-width="0.800"/><path d="M1513.7 201.5 L1521.3 209.1" fill="none" stroke="#222" stroke-width="1" /><path d="M1513.7 209.1 L1521.3 201.5" fill="none" stroke="#222" stroke-width="1" /><path d="M1522.0 205.3 L1540.0 205.3" fill="none" stroke="#e0b89a" stroke-width="6" /><rect x="1271.7" y="200.0" width="23.3" height="10.7" fill="#fff" stroke="#333" stroke-width="1"/><path d="M1282.0 210.7 L1282.0 238.0" fill="none" stroke="#2a2a2a" stroke-width="6.6" /><path d="M1282.0 210.7 L1282.0 238.0" fill="none" stroke="#8e9294" stroke-width="3.8" /><path d="M1383.3 195.0 L1383.3 203.0" fill="none" stroke="#000" stroke-width="1" /><polygon points="1383.3,204.0 1380.8,197.0 1385.8,197.0" fill="#000"/><text x="1280.0" y="240.5" font-family="Liberation Sans, sans-serif" font-style="italic" font-size="22.5" textLength="36.7" lengthAdjust="spacingAndGlyphs" fill="#000">2.6a</text><text x="1327.3" y="240.5" font-family="Liberation Sans, sans-serif" font-style="italic" font-size="22.5" textLength="36.0" lengthAdjust="spacingAndGlyphs" fill="#000">2T.1</text><text x="1373.3" y="240.5" font-family="Liberation Sans, sans-serif" font-style="italic" font-size="22.5" textLength="47.4" lengthAdjust="spacingAndGlyphs" fill="#000">2T.10</text><text x="1432.3" y="240.5" font-family="Liberation Sans, sans-serif" font-style="italic" font-size="22.5" textLength="47.7" lengthAdjust="spacingAndGlyphs" fill="#000">2T.38</text><path d="M1252.0 260.7 L1486.7 260.7" fill="none" stroke="#000" stroke-width="1" /><polygon points="1252.5,260.7 1261.5,258.1 1261.5,263.3" fill="#000"/><path d="M1280.7 247.7 L1286.7 247.7 L1286.7 273.7" fill="none" stroke="#1c1cb4" stroke-width="1.2" /><path d="M1295.0 247.7 L1295.0 273.7" fill="none" stroke="#b81c2c" stroke-width="1.2" /><path d="M1335.7 247.7 L1341.7 247.7 L1341.7 273.7" fill="none" stroke="#1c1cb4" stroke-width="1.2" /><path d="M1350.7 247.7 L1350.7 273.7" fill="none" stroke="#b81c2c" stroke-width="1.2" /><path d="M1386.7 247.7 L1392.7 247.7 L1392.7 273.7" fill="none" stroke="#1c1cb4" stroke-width="1.2" /><path d="M1401.7 247.7 L1401.7 273.7" fill="none" stroke="#b81c2c" stroke-width="1.2" /><path d="M1441.3 247.7 L1447.3 247.7 L1447.3 273.7" fill="none" stroke="#1c1cb4" stroke-width="1.2" /><path d="M1456.0 247.7 L1456.0 273.7" fill="none" stroke="#b81c2c" stroke-width="1.2" /><path d="M1459.3 247.7 L1469.3 247.7" fill="none" stroke="#3c8c64" stroke-width="1.2" /><path d="M1464.3 247.7 L1464.3 260.7" fill="none" stroke="#3c8c64" stroke-width="1.2" /><circle cx="1282.3" cy="250.7" r="12.3" fill="#fff" stroke="#5a7a5a" stroke-width="1"/><polygon points="1282.3,241.2 1272.8999999999999,256.2 1291.7,256.2" fill="#1010e8"/><rect x="1299" y="240" width="78.300" height="26" fill="#fff" fill-opacity="0.55" stroke="#777" stroke-width="1.200"/><text x="1304" y="258.800" font-family="Liberation Sans, sans-serif" font-size="23" textLength="67.700" lengthAdjust="spacingAndGlyphs" fill="#000">EMER</text><text x="1150.0" y="328.5" font-family="Liberation Sans, sans-serif" font-style="italic" font-size="22.5" textLength="46.0" lengthAdjust="spacingAndGlyphs" fill="#000">2.6bc</text><path d="M1197.7 348.3 L1147.3 348.3 L1147.3 401.0" fill="none" stroke="#000" stroke-width="1" /><polygon points="1147.3,402.0 1144.7,393.0 1149.9,393.0" fill="#000"/><path d="M1160.7 335.3 L1160.7 361.3" fill="none" stroke="#b81c2c" stroke-width="1.2" /><path d="M1169.3 335.3 L1169.3 348.3" fill="none" stroke="#222" stroke-width="1.2" /><path d="M1177.3 335.3 L1177.3 348.3" fill="none" stroke="#222" stroke-width="1.2" /><path d="M1181.0 335.3 L1191.0 335.3" fill="none" stroke="#8c8c8c" stroke-width="1.2" /><path d="M1186.0 335.3 L1186.0 348.3" fill="none" stroke="#8c8c8c" stroke-width="1.2" /><path d="M1194.0 323.5 L1228.3 316.0 L1244.3 316.0" fill="none" stroke="#2c2c2c" stroke-width="3.2" stroke-linejoin="round"/><path d="M1194.0 323.5 L1228.3 316.0 L1244.3 316.0" fill="none" stroke="#fff" stroke-width="1.2" /><rect x="1226.700" y="325" width="17.600" height="28.300" rx="3" fill="#fff" stroke="#222" stroke-width="3.200"/><rect x="1226.700" y="325" width="17.600" height="28.300" rx="3" fill="none" stroke="#fff" stroke-width="1"/><path d="M1102.0 403.8 L1244.3 403.8" fill="none" stroke="#2a2a2a" stroke-width="6.6" /><path d="M1102.0 403.8 L1244.3 403.8" fill="none" stroke="#8e9294" stroke-width="3.8" /><rect x="1081.0" y="398.3" width="21.3" height="10.7" fill="#fff" stroke="#333" stroke-width="1"/><path d="M1086.3 409.0 L1086.3 436.0" fill="none" stroke="#2a2a2a" stroke-width="6.6" /><path d="M1086.3 409.0 L1086.3 436.0" fill="none" stroke="#8e9294" stroke-width="3.8" /><rect x="1083.3" y="433" width="6" height="6" fill="#fff" stroke="#222" stroke-width="0.800"/><path d="M1083.3 433.0 L1089.3 439.0" fill="none" stroke="#222" stroke-width="1" /><path d="M1083.3 439.0 L1089.3 433.0" fill="none" stroke="#222" stroke-width="1" /><path d="M1086.3 439.0 L1086.3 458.0" fill="none" stroke="#e0b89a" stroke-width="5.5" /><path d="M1076.7 458.0 L1076.7 451.0 L1090.5 451.0 L1090.5 458.0" fill="none" stroke="#2a2ad0" stroke-width="1.2" /><path d="M1076.7 458.0 L1090.5 458.0" fill="none" stroke="#2a2ad0" stroke-width="1.6" /><path d="M1083.3 458.0 L1083.3 468.0" fill="none" stroke="#4a8a6a" stroke-width="1" /><circle cx="1083.3" cy="477.3" r="9.3" fill="#fff" stroke="#4a8a6a" stroke-width="1.100"/><path d="M1074.0 477.3 L1092.6 477.3" fill="none" stroke="#4a8a6a" stroke-width="1.1" /><text x="1276.0" y="438.1" font-family="Liberation Sans, sans-serif" font-style="italic" font-size="22.5" textLength="45.7" lengthAdjust="spacingAndGlyphs" fill="#000">2.6bc</text><text x="1327.3" y="438.1" font-family="Liberation Sans, sans-serif" font-style="italic" font-size="22.5" textLength="36.0" lengthAdjust="spacingAndGlyphs" fill="#000">2T.1</text><text x="1373.3" y="438.1" font-family="Liberation Sans, sans-serif" font-style="italic" font-size="22.5" textLength="47.4" lengthAdjust="spacingAndGlyphs" fill="#000">2T.10</text><text x="1432.3" y="438.1" font-family="Liberation Sans, sans-serif" font-style="italic" font-size="22.5" textLength="47.7" lengthAdjust="spacingAndGlyphs" fill="#000">2T.38</text><path d="M1252.0 457.7 L1486.7 457.7" fill="none" stroke="#000" stroke-width="1" /><polygon points="1252.5,457.7 1261.5,455.1 1261.5,460.3" fill="#000"/><path d="M1280.7 444.7 L1286.7 444.7 L1286.7 470.7" fill="none" stroke="#1c1cb4" stroke-width="1.2" /><path d="M1295.0 444.7 L1295.0 457.7" fill="none" stroke="#222" stroke-width="1.2" /><path d="M1303.3 444.7 L1303.3 457.7" fill="none" stroke="#222" stroke-width="1.2" /><path d="M1305.0 444.7 L1315.0 444.7" fill="none" stroke="#8c8c8c" stroke-width="1.2" /><path d="M1310.0 444.7 L1310.0 457.7" fill="none" stroke="#8c8c8c" stroke-width="1.2" /><path d="M1335.7 444.7 L1341.7 444.7 L1341.7 470.7" fill="none" stroke="#1c1cb4" stroke-width="1.2" /><path d="M1350.7 444.7 L1350.7 470.7" fill="none" stroke="#b81c2c" stroke-width="1.2" /><path d="M1386.7 444.7 L1392.7 444.7 L1392.7 470.7" fill="none" stroke="#1c1cb4" stroke-width="1.2" /><path d="M1401.7 444.7 L1401.7 470.7" fill="none" stroke="#b81c2c" stroke-width="1.2" /><path d="M1441.3 444.7 L1447.3 444.7 L1447.3 470.7" fill="none" stroke="#1c1cb4" stroke-width="1.2" /><path d="M1456.0 444.7 L1456.0 470.7" fill="none" stroke="#b81c2c" stroke-width="1.2" /><path d="M1459.3 444.7 L1469.3 444.7" fill="none" stroke="#3c8c64" stroke-width="1.2" /><path d="M1464.3 444.7 L1464.3 457.7" fill="none" stroke="#3c8c64" stroke-width="1.2" /><text x="1102.3" y="517.8" font-family="Liberation Sans, sans-serif" font-style="italic" font-size="22.5" textLength="36.0" lengthAdjust="spacingAndGlyphs" fill="#000">2T.1</text><text x="1148.3" y="517.8" font-family="Liberation Sans, sans-serif" font-style="italic" font-size="22.5" textLength="47.7" lengthAdjust="spacingAndGlyphs" fill="#000">2T.38</text><path d="M1190.0 537.7 L1100.0 537.7 L1100.0 589.0" fill="none" stroke="#000" stroke-width="1" /><polygon points="1100.0,590.0 1097.4,581.0 1102.6,581.0" fill="#000"/><path d="M1111.3 524.7 L1117.3 524.7 L1117.3 550.7" fill="none" stroke="#1c1cb4" stroke-width="1.2" /><path d="M1125.7 524.7 L1125.7 550.7" fill="none" stroke="#b81c2c" stroke-width="1.2" /><path d="M1157.3 524.7 L1163.3 524.7 L1163.3 550.7" fill="none" stroke="#1c1cb4" stroke-width="1.2" /><path d="M1172.3 524.7 L1172.3 550.7" fill="none" stroke="#b81c2c" stroke-width="1.2" /><path d="M1175.0 524.7 L1185.0 524.7" fill="none" stroke="#3c8c64" stroke-width="1.2" /><path d="M1180.0 524.7 L1180.0 537.7" fill="none" stroke="#3c8c64" stroke-width="1.2" /><path d="M1172.5 545.0 L1190.0 545.0 L1228.3 511.7 L1244.3 511.7" fill="none" stroke="#2c2c2c" stroke-width="3.2" stroke-linejoin="round"/><path d="M1172.5 545.0 L1190.0 545.0 L1228.3 511.7 L1244.3 511.7" fill="none" stroke="#fff" stroke-width="1.2" /><rect x="1226.700" y="543.300" width="17.600" height="11.700" rx="3" fill="#fff" stroke="#222" stroke-width="3.200"/><rect x="1226.700" y="543.300" width="17.600" height="11.700" rx="3" fill="none" stroke="#fff" stroke-width="1"/><path d="M1057.0 592.8 L1244.3 592.8" fill="none" stroke="#2a2a2a" stroke-width="6.6" /><path d="M1057.0 592.8 L1244.3 592.8" fill="none" stroke="#8e9294" stroke-width="3.8" /><rect x="1037.3" y="587.3" width="20.0" height="11.0" fill="#fff" stroke="#333" stroke-width="1"/><path d="M1042.3 598.3 L1042.3 698.0" fill="none" stroke="#2a2a2a" stroke-width="6.6" /><path d="M1042.3 598.3 L1042.3 698.0" fill="none" stroke="#8e9294" stroke-width="3.8" /><circle cx="1042.3" cy="710.7" r="12.3" fill="#fff" stroke="#5a7a5a" stroke-width="1"/><polygon points="1042.3,701.2 1032.8999999999999,716.2 1051.7,716.2" fill="#1010e8"/><rect x="1038.0" y="722.5" width="8.5" height="4.5" fill="#ddd" stroke="#333" stroke-width="1"/><rect x="1029" y="726" width="78.29999999999995" height="32.299999999999955" fill="#fff" stroke="#777" stroke-width="1.200"/><text x="1033.3" y="750.4" font-family="Liberation Sans, sans-serif" font-size="23" textLength="68.4" lengthAdjust="spacingAndGlyphs" fill="#000">EMER</text><path d="M955.0 743.8 L1028.3 743.8" fill="none" stroke="#2a2a2a" stroke-width="6.6" /><path d="M955.0 743.8 L1028.3 743.8" fill="none" stroke="#8e9294" stroke-width="3.8" /><rect x="945.2" y="740.0" width="7.6" height="7.6" fill="#fff" stroke="#222" stroke-width="0.800"/><path d="M945.2 740.0 L952.8 747.6" fill="none" stroke="#222" stroke-width="1" /><path d="M945.2 747.6 L952.8 740.0" fill="none" stroke="#222" stroke-width="1" /><rect x="1024.0" y="738.0" width="5.0" height="12.0" fill="#ccc" stroke="#333" stroke-width="1"/><path d="M912.5 744.3 L921.0 744.3" fill="none" stroke="#e0b89a" stroke-width="7" /><path d="M941.0 742.5 L946.0 743.0" fill="none" stroke="#e0b89a" stroke-width="4" /><polygon points="941.7,741.5 920.8,729.7 920.8,753.3" fill="#1010e8" stroke="none" stroke-width="1"/><rect x="904.0" y="736.0" width="8.7" height="13.3" fill="none" stroke="#2a2ad0" stroke-width="1.200"/><text x="866.0" y="731.8" font-family="Liberation Sans, sans-serif" font-style="italic" font-size="22.5" textLength="50.0" lengthAdjust="spacingAndGlyphs" fill="#000">2T.38</text><g transform="translate(1075,571.700)" fill="#fff" stroke="#333" stroke-width="0.900"><path d="M0-11l3.500 4.500h-2v5h5v-2L11 0 6.500 3.500v-2h-5v5h2L0 11l-3.500-4.500h2v-5h-5v2L-11 0l4.500-3.500v2h5v-5h-2z"/></g><text x="920.7" y="629.8" font-family="Liberation Sans, sans-serif" font-style="italic" font-size="22.5" textLength="47.7" lengthAdjust="spacingAndGlyphs" fill="#000">2T.38</text><text x="976.7" y="629.8" font-family="Liberation Sans, sans-serif" font-style="italic" font-size="22.5" textLength="36.0" lengthAdjust="spacingAndGlyphs" fill="#000">2T.1</text><path d="M914.0 649.0 L1038.0 649.0" fill="none" stroke="#000" stroke-width="1" /><polygon points="1039.3,649.0 1030.3,646.4 1030.3,651.6" fill="#000"/><path d="M929.7 636.0 L935.7 636.0 L935.7 662.0" fill="none" stroke="#1c1cb4" stroke-width="1.2" /><path d="M944.3 636.0 L944.3 662.0" fill="none" stroke="#b81c2c" stroke-width="1.2" /><path d="M946.7 636.0 L956.7 636.0" fill="none" stroke="#3c8c64" stroke-width="1.2" /><path d="M951.7 636.0 L951.7 649.0" fill="none" stroke="#3c8c64" stroke-width="1.2" /><path d="M984.7 636.0 L990.7 636.0 L990.7 662.0" fill="none" stroke="#1c1cb4" stroke-width="1.2" /><path d="M999.3 636.0 L999.3 662.0" fill="none" stroke="#b81c2c" stroke-width="1.2" /><text x="963.3" y="669.1" font-family="Liberation Sans, sans-serif" font-style="italic" font-size="22.5" textLength="47.7" lengthAdjust="spacingAndGlyphs" fill="#000">2T.38</text><path d="M1016.7 689.3 L957.3 689.3 L957.3 740.5" fill="none" stroke="#000" stroke-width="1" /><polygon points="957.3,741.5 954.7,732.5 959.9,732.5" fill="#000"/><path d="M973.3 676.3 L979.3 676.3 L979.3 702.3" fill="none" stroke="#1c1cb4" stroke-width="1.2" /><path d="M987.3 676.3 L987.3 702.3" fill="none" stroke="#b81c2c" stroke-width="1.2" /><path d="M990.0 676.3 L1000.0 676.3" fill="none" stroke="#3c8c64" stroke-width="1.2" /><path d="M995.0 676.3 L995.0 689.3" fill="none" stroke="#3c8c64" stroke-width="1.2" /><text x="1346.0" y="589.5" font-family="Liberation Sans, sans-serif" font-style="italic" font-size="22.5" textLength="48.0" lengthAdjust="spacingAndGlyphs" fill="#000">2T.10</text><path d="M1400.0 609.3 L1340.7 609.3 L1340.7 661.0" fill="none" stroke="#000" stroke-width="1" /><polygon points="1340.7,662.0 1338.1,653.0 1343.3,653.0" fill="#000"/><path d="M1356.7 596.8 L1362.7 596.8 L1362.7 621.8" fill="none" stroke="#1c1cb4" stroke-width="1.2" /><path d="M1370.7 596.8 L1370.7 621.8" fill="none" stroke="#b81c2c" stroke-width="1.2" /><path d="M1373.0 596.8 L1383.0 596.8" fill="none" stroke="#8c8c8c" stroke-width="1.2" /><path d="M1378.0 596.8 L1378.0 609.3" fill="none" stroke="#8c8c8c" stroke-width="1.2" /><text x="1276.0" y="609.1" font-family="Liberation Sans, sans-serif" font-style="italic" font-size="22.5" textLength="45.7" lengthAdjust="spacingAndGlyphs" fill="#000">2.6bc</text><text x="1330.0" y="609.1" font-family="Liberation Sans, sans-serif" font-style="italic" font-size="22.5" textLength="48.3" lengthAdjust="spacingAndGlyphs" fill="#000">2T.10</text><path d="M1252.0 628.3 L1383.3 628.3" fill="none" stroke="#000" stroke-width="1" /><polygon points="1252.5,628.3 1261.5,625.7 1261.5,630.9" fill="#000"/><path d="M1280.7 615.3 L1286.7 615.3 L1286.7 641.3" fill="none" stroke="#1c1cb4" stroke-width="1.2" /><path d="M1295.0 615.3 L1295.0 628.3" fill="none" stroke="#222" stroke-width="1.2" /><path d="M1303.3 615.3 L1303.3 628.3" fill="none" stroke="#222" stroke-width="1.2" /><path d="M1305.0 615.3 L1315.0 615.3" fill="none" stroke="#8c8c8c" stroke-width="1.2" /><path d="M1310.0 615.3 L1310.0 628.3" fill="none" stroke="#8c8c8c" stroke-width="1.2" /><path d="M1339.7 615.3 L1345.7 615.3 L1345.7 641.3" fill="none" stroke="#1c1cb4" stroke-width="1.2" /><path d="M1354.3 615.3 L1354.3 641.3" fill="none" stroke="#b81c2c" stroke-width="1.2" /><path d="M1356.7 615.3 L1366.7 615.3" fill="none" stroke="#8c8c8c" stroke-width="1.2" /><path d="M1361.7 615.3 L1361.7 628.3" fill="none" stroke="#8c8c8c" stroke-width="1.2" /><text x="1418.3" y="629.5" font-family="Liberation Sans, sans-serif" font-style="italic" font-size="22.5" textLength="47.7" lengthAdjust="spacingAndGlyphs" fill="#000">2T.10</text><path d="M1471.7 649.0 L1412.3 649.0 L1412.3 703.0" fill="none" stroke="#000" stroke-width="1" /><polygon points="1412.3,704.0 1409.7,695.0 1414.9,695.0" fill="#000"/><path d="M1427.3 636.0 L1433.3 636.0 L1433.3 662.0" fill="none" stroke="#1c1cb4" stroke-width="1.2" /><path d="M1442.3 636.0 L1442.3 662.0" fill="none" stroke="#b81c2c" stroke-width="1.2" /><path d="M1444.7 636.0 L1454.7 636.0" fill="none" stroke="#3c8c64" stroke-width="1.2" /><path d="M1449.7 636.0 L1449.7 649.0" fill="none" stroke="#3c8c64" stroke-width="1.2" /><path d="M1251.7 664.7 L1488.0 664.7" fill="none" stroke="#2a2a2a" stroke-width="6.6" /><path d="M1251.7 664.7 L1488.0 664.7" fill="none" stroke="#8e9294" stroke-width="3.8" /><rect x="1487.2" y="660.9000000000001" width="7.6" height="7.6" fill="#fff" stroke="#222" stroke-width="0.800"/><path d="M1487.2 660.9 L1494.8 668.5" fill="none" stroke="#222" stroke-width="1" /><path d="M1487.2 668.5 L1494.8 660.9" fill="none" stroke="#222" stroke-width="1" /><rect x="1495" y="662" width="36" height="5.400" fill="#d8a878"/><polygon points="1487.900,661 1506.600,649.200 1506.600,661" fill="#1010e8"/><polygon points="1511.200,661 1530.600,649.900 1530.600,661" fill="#1010e8"/><polygon points="1495.500,667.400 1506,672.500 1506,667.400" fill="#f4faf0" stroke="#8ab08a" stroke-width="0.800"/><polygon points="1512,666.500 1529.500,674.500 1529.500,666.500" fill="#f4faf0" stroke="#8ab08a" stroke-width="0.800"/><rect x="1530.0" y="650.5" width="4.0" height="8.5" fill="none" stroke="#2a2ad0" stroke-width="1.200"/><path d="M1509.0 664.1 L1570.8 664.1" fill="none" stroke="#000" stroke-width="1" /><polygon points="1528.0,664.1 1537.0,661.6 1537.0,666.6" fill="#000"/><path d="M1533.3 648.6 L1533.3 676.5" fill="none" stroke="#1c1cb4" stroke-width="1.1" /><path d="M1537.8 648.6 L1537.8 676.5" fill="none" stroke="#1c1cb4" stroke-width="1.1" /><path d="M1541.0 648.6 L1541.0 676.5" fill="none" stroke="#1c1cb4" stroke-width="1.1" /><path d="M1545.0 648.6 L1545.0 676.5" fill="none" stroke="#1c1cb4" stroke-width="1.1" /><path d="M1542.5 648.6 L1542.5 676.5" fill="none" stroke="#b81c2c" stroke-width="1.1" /><path d="M1547.0 650.5 L1556.0 650.5" fill="none" stroke="#3c8c64" stroke-width="1" /><path d="M1551.5 650.5 L1551.5 664.0" fill="none" stroke="#3c8c64" stroke-width="1" /><rect x="1346.7" y="692.7" width="37.3" height="24" fill="#fff" stroke="#222" stroke-width="1.200"/><rect x="1349.7" y="695.7" width="31.299999999999997" height="18" fill="#fff" stroke="#222" stroke-width="1.200"/><path d="M1384 704H1502q4.700 0 4.700-4.700V667" fill="none" stroke="#3a3a3a" stroke-width="2.400"/><text x="1276.0" y="726.5" font-family="Liberation Sans, sans-serif" font-style="italic" font-size="22.5" textLength="45.7" lengthAdjust="spacingAndGlyphs" fill="#000">2.6bc</text><text x="1330.0" y="726.5" font-family="Liberation Sans, sans-serif" font-style="italic" font-size="22.5" textLength="48.3" lengthAdjust="spacingAndGlyphs" fill="#000">2T.10</text><path d="M1252.0 746.7 L1383.3 746.7" fill="none" stroke="#000" stroke-width="1" /><polygon points="1252.5,746.7 1261.5,744.1 1261.5,749.3" fill="#000"/><path d="M1280.7 733.7 L1286.7 733.7 L1286.7 759.7" fill="none" stroke="#1c1cb4" stroke-width="1.2" /><path d="M1295.0 733.7 L1295.0 746.7" fill="none" stroke="#222" stroke-width="1.2" /><path d="M1303.3 733.7 L1303.3 746.7" fill="none" stroke="#222" stroke-width="1.2" /><path d="M1305.0 733.7 L1315.0 733.7" fill="none" stroke="#8c8c8c" stroke-width="1.2" /><path d="M1310.0 733.7 L1310.0 746.7" fill="none" stroke="#8c8c8c" stroke-width="1.2" /><path d="M1339.7 733.7 L1345.7 733.7 L1345.7 759.7" fill="none" stroke="#1c1cb4" stroke-width="1.2" /><path d="M1354.3 733.7 L1354.3 759.7" fill="none" stroke="#b81c2c" stroke-width="1.2" /><path d="M1356.7 733.7 L1366.7 733.7" fill="none" stroke="#3c8c64" stroke-width="1.2" /><path d="M1361.7 733.7 L1361.7 746.7" fill="none" stroke="#3c8c64" stroke-width="1.2" /><text x="1163.3" y="797.1" font-family="Liberation Sans, sans-serif" font-style="italic" font-size="22.5" textLength="35.0" lengthAdjust="spacingAndGlyphs" fill="#000">2.6c</text><path d="M1160.0 816.0 L1201.7 816.0 L1214.0 829.0" fill="none" stroke="#000" stroke-width="1" /><polygon points="1218.300,833.300 1209,828 1213,824" fill="#000"/><path d="M1166.3 803.5 L1172.3 803.5 L1172.3 828.5" fill="none" stroke="#1c1cb4" stroke-width="1.2" /><path d="M1181.7 803.5 L1181.7 816.0" fill="none" stroke="#222" stroke-width="1.2" /><path d="M1183.3 803.5 L1193.3 803.5" fill="none" stroke="#3c8c64" stroke-width="1.2" /><path d="M1188.3 803.5 L1188.3 816.0" fill="none" stroke="#3c8c64" stroke-width="1.2" /><path d="M1172.5 864.0 L1189.3 864.0 L1228.3 828.3 L1244.3 828.3" fill="none" stroke="#2c2c2c" stroke-width="3.2" stroke-linejoin="round"/><path d="M1172.5 864.0 L1189.3 864.0 L1228.3 828.3 L1244.3 828.3" fill="none" stroke="#fff" stroke-width="1.2" /><text x="1178.3" y="882.8" font-family="Liberation Sans, sans-serif" font-style="italic" font-size="22.5" textLength="47.7" lengthAdjust="spacingAndGlyphs" fill="#000">2T.10</text><path d="M1231.7 902.3 L1172.3 902.3 L1172.3 956.0" fill="none" stroke="#000" stroke-width="1" /><polygon points="1172.3,956.7 1169.7,947.7 1174.9,947.7" fill="#000"/><path d="M1188.3 889.3 L1194.3 889.3 L1194.3 915.3" fill="none" stroke="#1c1cb4" stroke-width="1.2" /><path d="M1202.3 889.3 L1202.3 915.3" fill="none" stroke="#b81c2c" stroke-width="1.2" /><path d="M1205.3 889.3 L1215.3 889.3" fill="none" stroke="#3c8c64" stroke-width="1.2" /><path d="M1210.3 889.3 L1210.3 902.3" fill="none" stroke="#3c8c64" stroke-width="1.2" /><text x="1348.3" y="837.8" font-family="Liberation Sans, sans-serif" font-style="italic" font-size="22.5" textLength="47.7" lengthAdjust="spacingAndGlyphs" fill="#000">2T.10</text><path d="M1400.7 859.0 L1342.3 859.0 L1342.3 912.0" fill="none" stroke="#000" stroke-width="1" /><polygon points="1342.3,913.0 1339.7,904.0 1344.9,904.0" fill="#000"/><path d="M1357.3 846.0 L1363.3 846.0 L1363.3 872.0" fill="none" stroke="#1c1cb4" stroke-width="1.2" /><path d="M1372.7 846.0 L1372.7 872.0" fill="none" stroke="#b81c2c" stroke-width="1.2" /><path d="M1375.0 846.0 L1385.0 846.0" fill="none" stroke="#3c8c64" stroke-width="1.2" /><path d="M1380.0 846.0 L1380.0 859.0" fill="none" stroke="#3c8c64" stroke-width="1.2" /><text x="1392.3" y="882.8" font-family="Liberation Sans, sans-serif" font-style="italic" font-size="22.5" textLength="47.7" lengthAdjust="spacingAndGlyphs" fill="#000">2T.10</text><path d="M1445.7 902.3 L1387.3 902.3 L1387.3 956.0" fill="none" stroke="#000" stroke-width="1" /><polygon points="1387.3,956.7 1384.7,947.7 1389.9,947.7" fill="#000"/><path d="M1402.3 889.3 L1408.3 889.3 L1408.3 915.3" fill="none" stroke="#1c1cb4" stroke-width="1.2" /><path d="M1416.7 889.3 L1416.7 915.3" fill="none" stroke="#b81c2c" stroke-width="1.2" /><path d="M1419.7 889.3 L1429.7 889.3" fill="none" stroke="#3c8c64" stroke-width="1.2" /><path d="M1424.7 889.3 L1424.7 902.3" fill="none" stroke="#3c8c64" stroke-width="1.2" /><path d="M1251.7 913.8 L1492.0 913.8" fill="none" stroke="#2a2a2a" stroke-width="6.6" /><path d="M1251.7 913.8 L1492.0 913.8" fill="none" stroke="#8e9294" stroke-width="3.8" /><rect x="1492.3" y="909.3" width="11.7" height="17.4" fill="#fff" stroke="#333" stroke-width="1"/><path d="M1498.3 926.7 L1498.3 940.0" fill="none" stroke="#2a2a2a" stroke-width="7" /><path d="M1498.3 926.7 L1498.3 940.0" fill="none" stroke="#8e9294" stroke-width="4.2" /><rect x="1494.8" y="938.0" width="7.0" height="7.0" fill="#fff" stroke="#222" stroke-width="0.800"/><path d="M1494.8 938.0 L1501.8 945.0" fill="none" stroke="#222" stroke-width="1" /><path d="M1494.8 945.0 L1501.8 938.0" fill="none" stroke="#222" stroke-width="1" /><path d="M1498.3 945.0 L1498.3 957.5 L1487.0 957.5" fill="none" stroke="#e0b89a" stroke-width="6" /><polygon points="1065,922.3 1052,945 1078,945" fill="#f4f9f0" stroke="#5a8a5a" stroke-width="1"/><path d="M1065.0 945.0 L1065.0 952.0" fill="none" stroke="#5a8a5a" stroke-width="1" /><rect x="1058.0" y="952.3" width="14.0" height="8.7" fill="none" stroke="#2a2ad0" stroke-width="1.200"/><polygon points="1340.3,922.3 1327.3,945 1353.3,945" fill="#f4f9f0" stroke="#5a8a5a" stroke-width="1"/><path d="M1340.3 945.0 L1340.3 952.0" fill="none" stroke="#5a8a5a" stroke-width="1" /><rect x="1333.3" y="952.3" width="14.0" height="8.7" fill="none" stroke="#2a2ad0" stroke-width="1.200"/><path d="M1077.0 955.0 L1466.0 955.0" fill="none" stroke="#ecc4a4" stroke-width="1.6" stroke-dasharray="10 3"/><rect x="1592.800" y="195.700" width="36" height="116" rx="5" fill="#efefef" stroke="#c4c4c4"/><circle cx="1606" cy="226" r="7.500" fill="none" stroke="#9a9a9a" stroke-width="1.200"/><circle cx="1606" cy="226" r="3.500" fill="none" stroke="#9a9a9a" stroke-width="1"/><path d="M1600 231l-3 3" stroke="#9a9a9a"/><text x="1610" y="239" font-family="Liberation Sans, sans-serif" font-size="8.500" font-weight="700" fill="#6a88b8">2D</text><circle cx="1620" cy="202" r="3.500" fill="none" stroke="#b0b0b0" stroke-width="1.500" stroke-dasharray="2 1"/><text x="1599.6" y="280.2" font-family="Liberation Sans, sans-serif" font-style="italic" font-size="22.5" textLength="26.0" lengthAdjust="spacingAndGlyphs" fill="#444">2T.</text><path d="M1571.0 301.3 L1628.0 301.3" fill="none" stroke="#000" stroke-width="1" /><polygon points="1571.0,301.3 1581.0,298.3 1581.0,304.3" fill="#000"/><path d="M1605.0 288.0 L1609.0 288.0 L1609.0 314.0" fill="none" stroke="#1c1cb4" stroke-width="1.2" /><path d="M1618.6 288.0 L1618.6 314.0" fill="none" stroke="#1c1cb4" stroke-width="1.2" /><rect x="1615.6" y="330.5" width="106.5" height="106.5" fill="#fff" stroke="#222" stroke-width="1.300"/><rect x="1620.1" y="335.0" width="97.5" height="97.5" fill="#fff" stroke="#111" stroke-width="1.300"/><polygon points="1606.0,428.7 1583.3,416.0 1583.3,441.4" fill="#f4faf0" stroke="#5a8a5a" stroke-width="1"/><rect x="1567.4" y="422.4" width="8.3" height="12.6" fill="none" stroke="#2a2ad0" stroke-width="1.200"/><path d="M1575.7 428.7 L1583.0 428.7" fill="none" stroke="#5a8a5a" stroke-width="1" /><text x="1548.4" y="483.4" font-family="Liberation Sans, sans-serif" font-style="italic" font-size="22.5" textLength="51.0" lengthAdjust="spacingAndGlyphs" fill="#000">2T.40</text><path d="M1606.0 492.8 L1628.0 492.8" fill="none" stroke="#2a2a2a" stroke-width="6.6" /><path d="M1606.0 492.8 L1628.0 492.8" fill="none" stroke="#8e9294" stroke-width="3.8" /><path d="M1578.0 494.0 L1588.0 494.0" fill="none" stroke="#e0b89a" stroke-width="5" /><polygon points="1607.2,494.2 1586.3,482.4 1586.3,506.0" fill="#1010e8" stroke="none" stroke-width="1"/><rect x="1568.0" y="487.0" width="10.0" height="14.4" fill="none" stroke="#2a2ad0" stroke-width="1.200"/><text x="1599.6" y="549.8" font-family="Liberation Sans, sans-serif" font-style="italic" font-size="22.5" textLength="26.0" lengthAdjust="spacingAndGlyphs" fill="#000">2T.</text><path d="M1571.0 569.0 L1628.0 569.0" fill="none" stroke="#000" stroke-width="1" /><polygon points="1571.0,569.0 1581.0,566.0 1581.0,572.0" fill="#000"/><path d="M1605.0 556.0 L1609.0 556.0 L1609.0 582.0" fill="none" stroke="#1c1cb4" stroke-width="1.2" /><path d="M1618.6 556.0 L1618.6 582.0" fill="none" stroke="#1c1cb4" stroke-width="1.2" /><path d="M1626.0 556.0 L1626.0 582.0" fill="none" stroke="#b81c2c" stroke-width="1.2" /><text x="1518.3" y="644.1" font-family="Liberation Sans, sans-serif" font-style="italic" font-size="22.5" textLength="48.0" lengthAdjust="spacingAndGlyphs" fill="#000">2T.10</text><rect x="1615.5" y="648.6" width="106.5" height="106.5" fill="#fff" stroke="#222" stroke-width="1.300"/><rect x="1620.0" y="653.1" width="97.5" height="97.5" fill="#fff" stroke="#111" stroke-width="1.300"/><polygon points="1605.1,709.1 1583.8,696.5 1583.8,721.8" fill="#f4faf0" stroke="#5a8a5a" stroke-width="1"/><rect x="1567.6" y="703.0" width="7.7" height="12.3" fill="none" stroke="#2a2ad0" stroke-width="1.200"/><path d="M1575.3 709.1 L1583.8 709.1" fill="none" stroke="#5a8a5a" stroke-width="1" /><g fill="none" stroke="#e1e1e1" stroke-width="1.100"><path d="M417 602C411 550 437 536 467 536S523 550 517 602"/><rect x="427" y="570" width="80" height="72" rx="14"/><path d="M427 578q40 -14 80 0M433 562q34 -12 68 0"/><rect x="410" y="576" width="11" height="40" rx="5"/><rect x="513" y="576" width="11" height="40" rx="5"/></g><g fill="none" stroke="#e1e1e1" stroke-width="1.100"><path d="M417 834C411 782 437 768 467 768S523 782 517 834"/><rect x="427" y="802" width="80" height="72" rx="14"/><path d="M427 810q40 -14 80 0M433 794q34 -12 68 0"/><rect x="410" y="808" width="11" height="40" rx="5"/><rect x="513" y="808" width="11" height="40" rx="5"/></g><g fill="none" stroke="#e1e1e1" stroke-width="1.100"><path d="M1281 602C1275 550 1301 536 1331 536S1387 550 1381 602"/><rect x="1291" y="570" width="80" height="72" rx="14"/><path d="M1291 578q40 -14 80 0M1297 562q34 -12 68 0"/><rect x="1274" y="576" width="11" height="40" rx="5"/><rect x="1377" y="576" width="11" height="40" rx="5"/></g><g fill="none" stroke="#e1e1e1" stroke-width="1.100"><path d="M1281 834C1275 782 1301 768 1331 768S1387 782 1381 834"/><rect x="1291" y="802" width="80" height="72" rx="14"/><path d="M1291 810q40 -14 80 0M1297 794q34 -12 68 0"/><rect x="1274" y="808" width="11" height="40" rx="5"/><rect x="1377" y="808" width="11" height="40" rx="5"/></g></svg>
<div class="t" style="top:990.0px;line-height:16px;font-size:12px;color:#e6e9ee;white-space:nowrap;left:321px;transform:translateX(-50%);">1 : 50</div>
<svg style="left:363px;top:992px;" width="16" height="12" viewBox="0 0 16 12"><rect x="0" y="0" width="16" height="12" fill="#aeb4c0"/><path d="M0 2h16M0 5h16M0 8h16M0 11h16" stroke="#2f3744" stroke-width="1" stroke-dasharray="1.500 1.500"/></svg>
<svg style="left:390px;top:991px;" width="15" height="14" viewBox="0 0 15 14"><path d="M1 4h9v9H1zM1 4l4-3h9l-4 3M14 1v9l-4 3" fill="none" stroke="#dfe3ea" stroke-width="1.200"/></svg>
<svg style="left:416px;top:991px;" width="16" height="15" viewBox="0 0 16 15"><circle cx="6" cy="6" r="3" fill="#f0c64a"/><path d="M6 0v1.500M6 10.500V12M0 6h1.500M10.500 6H12M1.800 1.800l1 1M9.200 9.200l1 1M1.800 10.200l1-1M9.200 2.800l1-1" stroke="#f0c64a" stroke-width="1.200"/><circle cx="11.500" cy="11" r="3.500" fill="#4cc3d9"/></svg>
<svg style="left:441px;top:990px;" width="17" height="16" viewBox="0 0 17 16"><circle cx="7" cy="6" r="6" fill="#eef0f4"/><circle cx="12.500" cy="11.500" r="3.800" fill="#4cc3d9"/><path d="M3 12c3 3 6 3 8 1" stroke="#9aa3b2" fill="none"/></svg>
<svg style="left:467px;top:990px;" width="17" height="16" viewBox="0 0 17 16"><path d="M5 1v11h11M1 5h11v11" fill="none" stroke="#dfe3ea" stroke-width="1.300"/><rect x="6" y="6" width="6" height="6" fill="#2f3744"/></svg>
<svg style="left:493px;top:990px;" width="17" height="16" viewBox="0 0 17 16"><path d="M5 1v11h11M1 5h11" fill="none" stroke="#dfe3ea" stroke-width="1.300" stroke-dasharray="2 1.500"/><circle cx="10.500" cy="11" r="3.500" fill="#4cc3d9"/></svg>
<svg style="left:518px;top:992px;" width="16" height="12" viewBox="0 0 16 12"><circle cx="4" cy="8" r="2.800" fill="none" stroke="#dfe3ea" stroke-width="1.300"/><circle cx="12" cy="7" r="2.800" fill="none" stroke="#dfe3ea" stroke-width="1.300"/><path d="M4 5c1-3 3-3 4 0M8 5c1-3 3-3 4-1" stroke="#dfe3ea" fill="none"/></svg>
<svg style="left:546px;top:990px;" width="12" height="16" viewBox="0 0 12 16"><path d="M6 0.500a4.500 4.500 0 0 1 3 8v2.500H3V8.500a4.500 4.500 0 0 1 3-8z" fill="#4cc3d9"/><rect x="3.500" y="12" width="5" height="3" fill="#9aa3b2"/></svg>
<svg style="left:571px;top:990px;" width="16" height="16" viewBox="0 0 16 16"><rect x="1" y="2" width="9" height="9" fill="none" stroke="#dfe3ea" stroke-width="1.200"/><rect x="5" y="6" width="8" height="8" fill="#aeb4c0"/><path d="M10 10l5 5" stroke="#e6a23c" stroke-width="1.500"/></svg>
<svg style="left:596px;top:990px;" width="17" height="16" viewBox="0 0 17 16"><path d="M1 5l6-4 9 2v9l-6 3-9-2zM1 5l9 2 6-4M10 7v8M5.500 2v12M1 9h9l6-2" fill="none" stroke="#dfe3ea" stroke-width="1"/><circle cx="12" cy="13" r="2.500" fill="#e05a5a"/></svg>
<svg style="left:622px;top:990px;" width="17" height="16" viewBox="0 0 17 16"><path d="M1 1v9M15 1v9M1 4h14" fill="none" stroke="#dfe3ea" stroke-width="1.300"/><circle cx="12" cy="12" r="3" fill="#4cc3d9"/></svg>
<svg style="left:648px;top:993px;" width="6" height="10" viewBox="0 0 6 10"><path d="M5 1L1 5l4 4" fill="none" stroke="#6d7686" stroke-width="1.500"/></svg>
<div style="left:1127px;top:995px;width:18px;height:5px;background:#4d5666;border-radius:2px;"></div>
<svg style="left:1617px;top:993px;" width="6" height="10" viewBox="0 0 6 10"><path d="M1 1l4 4-4 4" fill="none" stroke="#8e98a8" stroke-width="1.500"/></svg>
<svg style="left:1634px;top:998px;" width="9" height="9" viewBox="0 0 9 9"><path d="M7 1v2M7 6v2M2 6v2" stroke="#6d7686" stroke-width="1.600"/></svg>
<svg style="left:1632px;top:199px;" width="10" height="7" viewBox="0 0 10 7"><path d="M1 6l4-4 4 4" fill="none" stroke="#8e98a8" stroke-width="1.800"/></svg>
<svg style="left:1632px;top:976px;" width="10" height="7" viewBox="0 0 10 7"><path d="M1 1l4 4 4-4" fill="none" stroke="#8e98a8" stroke-width="1.800"/></svg>
<div style="left:1634px;top:583px;width:5px;height:18px;background:#4d5666;border-radius:2px;"></div>
<svg style="left:1631px;top:179px;" width="13" height="9" viewBox="0 0 13 9"><path d="M1 1h11" stroke="#aeb4c0" stroke-width="1.500"/><path d="M2 4h9L6.500 8.500z" fill="#aeb4c0"/></svg>
<div class="t" style="top:1013.0px;line-height:16px;font-size:12px;color:#e6e9ee;white-space:nowrap;left:2px;letter-spacing:0.015px;">Hold button and move mouse to Scroll the view. Hold Ctrl key to Zoom. Hold Shift key to Spin.</div>
<svg style="left:895px;top:1012px;" width="17" height="17" viewBox="0 0 17 17"><circle cx="6" cy="6" r="4" fill="#4aa3e0"/><circle cx="11" cy="8" r="4" fill="#e6b84a"/><circle cx="8" cy="12" r="4" fill="#5cc07a"/></svg>
<svg style="left:1114px;top:1019px;" width="8" height="6" viewBox="0 0 8 6"><path d="M1 1l3 3 3-3" fill="none" stroke="#6d7686" stroke-width="1.400"/></svg>
<svg style="left:1134px;top:1013px;" width="14" height="15" viewBox="0 0 14 15"><rect x="5" y="0" width="8" height="6" fill="#9aa3b2"/><rect x="0" y="8" width="8" height="6" fill="#9aa3b2"/><path d="M9 6L4 8" stroke="#9aa3b2"/></svg>
<div class="t" style="top:1013.5px;line-height:16px;font-size:12px;color:#6d7686;white-space:nowrap;left:1149px;">:0</div>
<svg style="left:1185px;top:1013px;" width="17" height="15" viewBox="0 0 17 15"><rect x="0.500" y="0.500" width="16" height="14" fill="#eef0f4"/><path d="M2 4h2M6 4h9M2 7.500h2M6 7.500h9M2 11h2M6 11h9" stroke="#2f3744" stroke-width="1.400"/></svg>
<svg style="left:1212px;top:1012px;" width="17" height="16" viewBox="0 0 17 16"><rect x="3" y="0.500" width="13" height="11" fill="#9aa3b2"/><path d="M5 3h9M5 6h9M5 9h6" stroke="#3b4453"/><path d="M1 10l5 5M1 10h4M1 10v4" stroke="#9aa3b2" stroke-width="1.400" fill="none"/></svg>
<div class="t" style="top:1014.0px;line-height:16px;font-size:12px;color:#e6e9ee;white-space:nowrap;left:1239px;letter-spacing:0.197px;">Main Model</div>
<svg style="left:1430px;top:1019px;" width="8" height="6" viewBox="0 0 8 6"><path d="M1 1l3 3 3-3" fill="none" stroke="#8e98a8" stroke-width="1.400"/></svg>
<div style="left:1449px;top:1015px;width:11px;height:11px;background:#c8cdd6;border-radius:1px;"></div>
<svg style="left:1450px;top:1016px;" width="9" height="9" viewBox="0 0 9 9"><path d="M1.500 4.500l2 2.500L7.500 1.500" fill="none" stroke="#2b323e" stroke-width="1.600"/></svg>
<div class="t" style="top:1012.5px;line-height:16px;font-size:12px;color:#e6e9ee;white-space:nowrap;left:1463px;letter-spacing:-0.093px;">Exclude Options</div>
<svg style="left:1666px;top:1012px;" width="16" height="17" viewBox="0 0 16 17"><path d="M1 2h6M9 2h5M1 2v3M14 2v3" stroke="#e08a5a" stroke-width="1.400" fill="none"/><path d="M7 5l6 8-3-0.500 1.500 3.500-1.500 0.700-1.500-3.500-2 2z" fill="#eef0f4"/></svg>
<svg style="left:1692px;top:1012px;" width="16" height="17" viewBox="0 0 16 17"><path d="M1 8l5-5 3 3" stroke="#6aa8e0" stroke-width="1.500" fill="none"/><path d="M10 1l4 4M14 1l-4 4" stroke="#e8475a" stroke-width="1.500"/><path d="M7 5l6 8-3-0.500 1.500 3.500-1.500 0.700-1.500-3.500-2 2z" fill="#eef0f4"/></svg>
<svg style="left:1718px;top:1012px;" width="16" height="17" viewBox="0 0 16 17"><path d="M2 2h8M6 2v4" stroke="#eef0f4" stroke-width="1.600" fill="none"/><path d="M7 5l6 8-3-0.500 1.500 3.500-1.500 0.700-1.500-3.500-2 2z" fill="#eef0f4"/></svg>
<svg style="left:1744px;top:1012px;" width="16" height="17" viewBox="0 0 16 17"><path d="M2 3l4-2v12l-4 2z" fill="#6aa8e0"/><path d="M10 1l4 4M14 1l-4 4" stroke="#e8475a" stroke-width="1.500"/><path d="M7 5l6 8-3-0.500 1.500 3.500-1.500 0.700-1.500-3.500-2 2z" fill="#eef0f4"/></svg>
<svg style="left:1770px;top:1012px;" width="16" height="17" viewBox="0 0 16 17"><path d="M5 1v8M1 5h8" stroke="#eef0f4" stroke-width="1.400"/><path d="M10 1l4 4M14 1l-4 4" stroke="#e8475a" stroke-width="1.500"/><path d="M7 5l6 8-3-0.500 1.500 3.500-1.500 0.700-1.500-3.500-2 2z" fill="#eef0f4"/></svg>
<svg style="left:1797px;top:1014px;" width="14" height="14" viewBox="0 0 14 14"><circle cx="7" cy="7" r="5.500" fill="none" stroke="#5a6476" stroke-width="2" stroke-dasharray="2 2"/></svg>
<svg style="left:1822px;top:1013px;" width="16" height="16" viewBox="0 0 16 16"><path d="M0 1h15L9.500 8v7l-4-2V8z" fill="#dfe3ea"/></svg>
<div class="t" style="top:1014.0px;line-height:16px;font-size:12px;color:#e6e9ee;white-space:nowrap;left:1838px;">:0</div>
<div style="left:0px;top:1032px;width:1920px;height:1px;background:#2c3560;"></div>
<svg style="left:18px;top:1040px;" width="32" height="30" viewBox="0 0 32 30"><circle cx="19" cy="9" r="8" fill="#f08a8a"/><ellipse cx="12" cy="21" rx="11" ry="6" fill="#c9d3e8"/><ellipse cx="8" cy="18" rx="6" ry="5" fill="#dfe6f4"/><ellipse cx="16" cy="17" rx="7" ry="6" fill="#e8eef8"/><text x="16.500" y="13" font-family="Liberation Sans, sans-serif" font-size="10" fill="#3a1010">3</text></svg>
<div class="t" style="top:1040.0px;line-height:16px;font-size:12px;color:#ffffff;white-space:nowrap;left:50px;">27°C</div>
<div class="t" style="top:1056.0px;line-height:16px;font-size:12px;color:#e0e4f0;white-space:nowrap;left:50px;letter-spacing:0.020px;">Pred. nublado</div>
<div style="left:551px;top:1045px;width:11px;height:11px;background:#6fd0fa;border-radius:1px;"></div>
<div style="left:563px;top:1045px;width:11px;height:11px;background:#4ab8f4;border-radius:1px;"></div>
<div style="left:551px;top:1057px;width:11px;height:11px;background:#3aa6ee;border-radius:1px;"></div>
<div style="left:563px;top:1057px;width:11px;height:11px;background:#1f8de0;border-radius:1px;"></div>
<div style="left:587px;top:1040px;width:220px;height:32px;background:#2e3768;border-radius:16px;border:1px solid #3e477a;box-sizing:border-box;"></div>
<svg style="left:597px;top:1048px;" width="16" height="16" viewBox="0 0 16 16"><circle cx="6.500" cy="6.500" r="5" fill="none" stroke="#eef0f8" stroke-width="1.600"/><path d="M10.500 10.500l4.500 4.500" stroke="#eef0f8" stroke-width="1.800"/></svg>
<div class="t" style="top:1048.0px;line-height:16px;font-size:13.5px;color:#e4e8f4;white-space:nowrap;left:624px;letter-spacing:-0.227px;">Pesquisar</div>
<svg style="left:757px;top:1044px;" width="44" height="26" viewBox="0 0 44 26"><ellipse cx="21" cy="22" rx="20" ry="3" fill="#c9b24a"/><ellipse cx="11" cy="13" rx="7" ry="6.500" fill="#b89a7a"/><path d="M6 16v7h3v-5h4v5h3v-8z" fill="#a88a6a"/><path d="M15 8c3-5 1-7-1-6" stroke="#b89a7a" stroke-width="2" fill="none"/><ellipse cx="30" cy="12.500" rx="10" ry="7.500" fill="#b89a7a"/><path d="M22 16v7h4v-5h8v5h4v-9z" fill="#a88a6a"/><path d="M21 10c-3 2-3 7-1 9" stroke="#b89a7a" stroke-width="2.500" fill="none"/></svg>
<svg style="left:819px;top:1044px;" width="25" height="24" viewBox="0 0 25 24"><rect x="1" y="7" width="15" height="15" rx="2" fill="#6a7080"/><rect x="8" y="1" width="16" height="15" rx="2" fill="#f4f5f8"/><rect x="8" y="7" width="8" height="9" fill="#b4b8c4"/></svg>
<svg style="left:863px;top:1044px;" width="28" height="26" viewBox="0 0 28 26"><path d="M3 16C3 5 8 1 14 1s6 3 10 3c-2 8-6 16-14 16S3 20 3 16z" fill="#3a8ef0"/><path d="M3 16C3 8 6 3 11 2c-2 5-2 12 1 18-5 0-9-1-9-4z" fill="#46c87a"/><path d="M13 8c5-2 10 0 11 5 0 5-4 8-9 7-2-4-3-8-2-12z" fill="#d04ae0"/><rect x="4" y="17" width="20" height="8" rx="1" fill="#14182e"/><text x="5" y="24" font-family="Liberation Sans, sans-serif" font-weight="700" font-size="7.500" fill="#fff">M365</text></svg>
<svg style="left:906px;top:1044px;" width="26" height="24" viewBox="0 0 26 24"><path d="M1 3c0-1 1-2 2-2h6l3 3h11c1 0 2 1 2 2v3H1z" fill="#e8a92c"/><rect x="1" y="6" width="24" height="16" rx="2" fill="#f7cf4a"/><path d="M5 22v-7h16v7z" fill="#2a8ad8"/><rect x="9" y="17" width="8" height="2.500" fill="#1a6ab8"/></svg>
<div style="left:916.5px;top:1073px;width:5px;height:3px;background:#8b93b8;border-radius:2px;"></div>
<svg style="left:952px;top:1042px;" width="28" height="28" viewBox="0 0 28 28"><rect x="8" y="6" width="16" height="18" rx="2" fill="#2a7ad8"/><path d="M8 14l8 5 8-5v8c0 1-1 2-2 2H10c-1 0-2-1-2-2z" fill="#4aa8f0"/><rect x="1" y="9" width="13" height="13" rx="2" fill="#1a5ab8"/><text x="3.500" y="20" font-family="Liberation Sans, sans-serif" font-weight="700" font-size="11" fill="#fff">O</text><circle cx="21" cy="7" r="6.500" fill="#4ab8f0"/><rect x="17" y="4.500" width="8" height="5.500" fill="#14182e"/><path d="M17 4.500l4 3 4-3" stroke="#4ab8f0" fill="none"/></svg>
<div style="left:960.5px;top:1073px;width:5px;height:3px;background:#8b93b8;border-radius:2px;"></div>
<svg style="left:994px;top:1041px;" width="30" height="30" viewBox="0 0 30 30"><g transform="translate(1,4)"><circle cx="12.0" cy="12.0" r="12.0" fill="#e8453c"/><path d="M12.0 12.0L1.61 6.00A12.0 12.0 0 0 0 18.00 22.39z" fill="#34a853"/><path d="M12.0 12.0L18.00 22.39A12.0 12.0 0 0 0 22.39 6.00z" fill="#fbc116"/><path d="M12.0 12.0L1.61 6.00A12.0 12.0 0 0 1 22.39 6.00z" fill="#e8453c"/><circle cx="12.0" cy="12.0" r="5.52" fill="#fff"/><circle cx="12.0" cy="12.0" r="4.32" fill="#4285f4"/></g><circle cx="23" cy="6" r="5.500" fill="#5a78e0"/><path d="M20.500 3.500h5v5h-5z" fill="none" stroke="#cfe0ff" stroke-dasharray="1 1"/></svg>
<div style="left:1004.5px;top:1073px;width:5px;height:3px;background:#8b93b8;border-radius:2px;"></div>
<svg style="left:1038px;top:1041px;" width="30" height="30" viewBox="0 0 30 30"><circle cx="12" cy="16" r="11" fill="#2bb741"/><path d="M3 28l2-6 4 3z" fill="#2bb741"/><circle cx="12" cy="16" r="8.500" fill="none" stroke="#e8ffe8" stroke-width="1.500"/><path d="M8 12c0 5 3 8 8 8l1-2.500-2.500-1-1 1c-1.500-0.500-2.500-1.500-3-3l1-1-1-2.500z" fill="#fff"/><circle cx="22" cy="7" r="6" fill="#4ab8f0"/><text x="19.800" y="10.500" font-family="Liberation Sans, sans-serif" font-size="9.500" fill="#fff">1</text></svg>
<div style="left:1048.5px;top:1073px;width:5px;height:3px;background:#8b93b8;border-radius:2px;"></div>
<svg style="left:1083px;top:1044px;" width="24" height="24" viewBox="0 0 24 24"><circle cx="12" cy="12" r="12" fill="#5865f2"/><path d="M6 8c4-2 8-2 12 0 1.500 3 2 5.500 2 8-1.500 1-3 1.500-4 1.500l-1-1.500h-6l-1 1.500c-1 0-2.500-0.500-4-1.500 0-2.500 0.500-5 2-8z" fill="#fff"/><ellipse cx="9.500" cy="12.500" rx="1.600" ry="1.900" fill="#5865f2"/><ellipse cx="14.500" cy="12.500" rx="1.600" ry="1.900" fill="#5865f2"/></svg>
<div style="left:1092.5px;top:1073px;width:5px;height:3px;background:#8b93b8;border-radius:2px;"></div>
<svg style="left:1127px;top:1044px;" width="24" height="24" viewBox="0 0 24 24"><rect x="0" y="0" width="24" height="24" rx="4" fill="#19a8f0"/><circle cx="11" cy="12" r="6" fill="none" stroke="#fff" stroke-width="2"/><path d="M13 12l5-4M13 12l5 4" stroke="#19a8f0" stroke-width="3"/><path d="M12 12l4-3.500M12 12l4 3.500" stroke="#fff" stroke-width="1.600"/></svg>
<div style="left:1136.5px;top:1073px;width:5px;height:3px;background:#8b93b8;border-radius:2px;"></div>
<svg style="left:1173px;top:1044px;" width="20" height="25" viewBox="0 0 20 25"><rect x="1" y="2" width="18" height="22" rx="1.500" fill="#4ac0e8"/><rect x="1" y="21" width="18" height="3" fill="#e8a040"/><path d="M4 8h12M4 12h12M4 16h12" stroke="#106888" stroke-width="1.600"/><path d="M4 0v4M8 0v4M12 0v4M16 0v4" stroke="#8ad8f0" stroke-width="1.400"/></svg>
<div style="left:1180.5px;top:1073px;width:5px;height:3px;background:#8b93b8;border-radius:2px;"></div>
<svg style="left:1214px;top:1040px;" width="30" height="30" viewBox="0 0 30 30"><g transform="translate(1,5)"><circle cx="12.0" cy="12.0" r="12.0" fill="#e8453c"/><path d="M12.0 12.0L1.61 6.00A12.0 12.0 0 0 0 18.00 22.39z" fill="#34a853"/><path d="M12.0 12.0L18.00 22.39A12.0 12.0 0 0 0 22.39 6.00z" fill="#fbc116"/><path d="M12.0 12.0L1.61 6.00A12.0 12.0 0 0 1 22.39 6.00z" fill="#e8453c"/><circle cx="12.0" cy="12.0" r="5.52" fill="#fff"/><circle cx="12.0" cy="12.0" r="4.32" fill="#4285f4"/></g><circle cx="22" cy="8" r="7" fill="#e8d8c0"/><circle cx="22" cy="7" r="3.500" fill="#7a4a2a"/><path d="M17 13c1-3 9-3 10 0-2 2.500-8 2.500-10 0z" fill="#5a3a2a"/></svg>
<div style="left:1224.5px;top:1073px;width:5px;height:3px;background:#8b93b8;border-radius:2px;"></div>
<svg style="left:1258px;top:1041px;" width="30" height="30" viewBox="0 0 30 30"><circle cx="12" cy="16" r="11" fill="#2a2a32" stroke="#d0d0d8" stroke-width="1.500"/><circle cx="12" cy="11" r="3.800" fill="none" stroke="#e0e0e8" stroke-width="1.500"/><circle cx="8" cy="19" r="3.800" fill="none" stroke="#e0e0e8" stroke-width="1.500"/><circle cx="16.500" cy="19" r="3.800" fill="none" stroke="#e0e0e8" stroke-width="1.500"/><circle cx="22" cy="7" r="5.500" fill="#f01020"/></svg>
<div style="left:1268.5px;top:1073px;width:5px;height:3px;background:#8b93b8;border-radius:2px;"></div>
<svg style="left:1302px;top:1044px;" width="26" height="25" viewBox="0 0 26 25"><path d="M18 0l7 3v19l-7 3L4 14 1 16.500V8.500L4 11z" fill="#a070e0"/><path d="M18 0v25L8 12.500z" fill="#c8a0f8"/><path d="M18 7v11l-7-5.500z" fill="#1b2150"/></svg>
<div style="left:1312.5px;top:1073px;width:5px;height:3px;background:#8b93b8;border-radius:2px;"></div>
<div style="left:1339px;top:1036px;width:40px;height:41px;background:#283068;border-radius:4px;"></div>
<svg style="left:1347px;top:1043px;" width="24" height="26" viewBox="0 0 24 26"><path d="M2 1h18l2 2v20l-2 2H4l-2-2z" fill="#1858c8"/><rect x="2" y="1" width="20" height="14" fill="#2f7ff0"/><text x="6.500" y="13" font-family="Liberation Sans, sans-serif" font-weight="700" font-size="12.500" fill="#fff">R</text><text x="6" y="22" font-family="Liberation Sans, sans-serif" font-weight="700" font-size="5.500" fill="#fff">RVT</text></svg>
<div style="left:1351px;top:1073px;width:16px;height:3px;background:#4cb0f0;border-radius:2px;"></div>
<div class="t" style="top:1040.0px;line-height:16px;font-size:12px;color:#ffffff;white-space:nowrap;left:1897px;transform:translateX(-100%);">15:56</div>
<div class="t" style="top:1056.0px;line-height:16px;font-size:12px;color:#ffffff;white-space:nowrap;left:1897px;transform:translateX(-100%);letter-spacing:0.194px;">16/05/2025</div>
</div></body></html>
